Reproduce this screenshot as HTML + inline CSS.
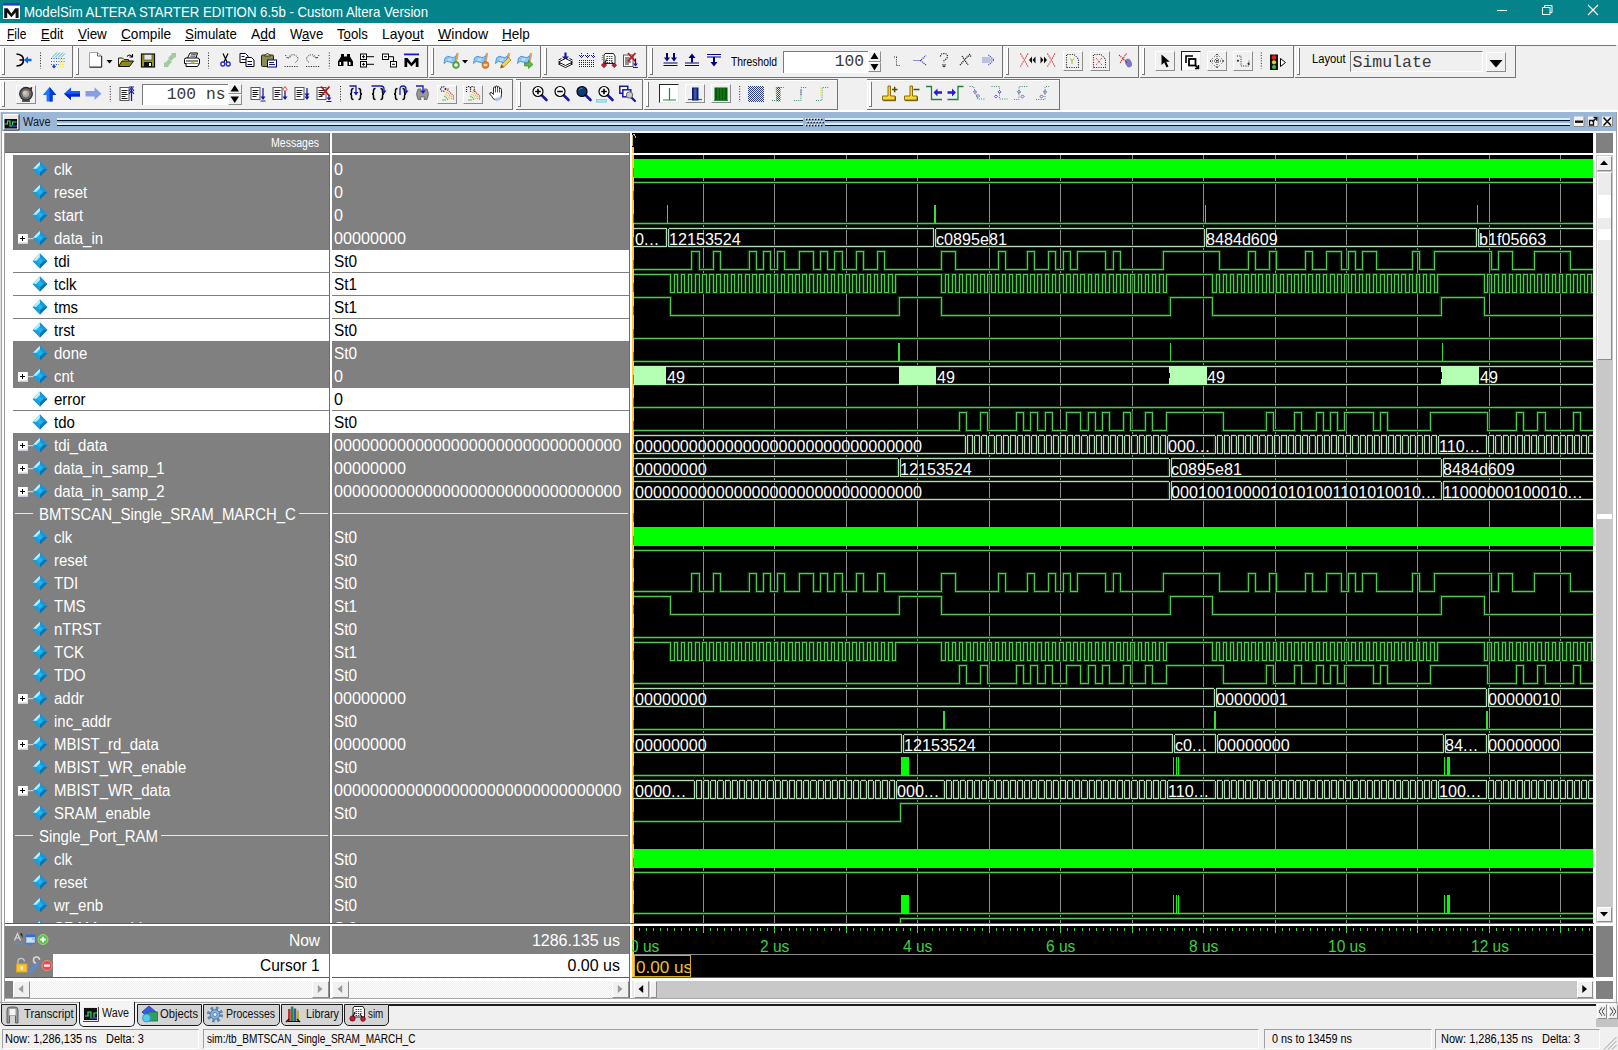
<!DOCTYPE html>
<html><head><meta charset="utf-8"><title>ModelSim</title>
<style>
html,body{margin:0;padding:0;}
body{width:1618px;height:1050px;position:relative;overflow:hidden;background:#f0f0f0;font-family:"Liberation Sans",sans-serif;}
div,span,svg{position:absolute;box-sizing:border-box;}
span{white-space:pre;}
u{text-decoration:underline;text-underline-offset:1px;}
i{font-style:normal;letter-spacing:0.7px;}
</style></head><body>
<div style="left:0px;top:0px;width:1618px;height:23px;background:#04838a;"></div>
<svg style="left:3px;top:3px" width="18" height="17" viewBox="0 0 18 17">
<rect x="0" y="0" width="17" height="16" fill="#fff"/>
<rect x="0" y="0" width="17" height="2.6" fill="#2a3cc8"/>
<path d="M1.2 15 V5.2 H4.6 L8.4 10.6 L12.2 5.2 H15.6 V15 H12.6 V9.6 L8.4 14.2 L4.2 9.6 V15 Z" fill="#111"/>
</svg>
<span style="left:23.50px;top:2.00px;font:15px/20px 'Liberation Sans',sans-serif;color:#fff;transform:scaleX(0.8796);transform-origin:0 50%;">ModelSim ALTERA STARTER EDITION 6.5b - Custom Altera Version</span>
<svg style="left:1490px;top:0" width="128" height="23" viewBox="1490 0 128 23">
<path d="M1497 10.500 H1507" stroke="#fff" stroke-width="1.100" fill="none"/>
<path d="M1542.500 7.500 H1550 V14.500 H1542.500 Z M1544.500 7.500 V5.500 H1552 V12.500 H1550" stroke="#fff" stroke-width="1" fill="none"/>
<path d="M1588 5 L1598 15 M1598 5 L1588 15" stroke="#fff" stroke-width="1.200" fill="none"/>
</svg>
<div style="left:0px;top:23px;width:1618px;height:22px;background:#ffffff;"></div>
<span style="left:7.30px;top:24.30px;font:15px/20px 'Liberation Sans',sans-serif;color:#000;transform:scaleX(0.8026);transform-origin:0 50%;"><u>F</u>ile</span>
<span style="left:41.00px;top:24.30px;font:15px/20px 'Liberation Sans',sans-serif;color:#000;transform:scaleX(0.8666);transform-origin:0 50%;"><u>E</u>dit</span>
<span style="left:78.00px;top:24.30px;font:15px/20px 'Liberation Sans',sans-serif;color:#000;transform:scaleX(0.8932);transform-origin:0 50%;"><u>V</u>iew</span>
<span style="left:120.80px;top:24.30px;font:15px/20px 'Liberation Sans',sans-serif;color:#000;transform:scaleX(0.9106);transform-origin:0 50%;"><u>C</u>ompile</span>
<span style="left:185.20px;top:24.30px;font:15px/20px 'Liberation Sans',sans-serif;color:#000;transform:scaleX(0.8876);transform-origin:0 50%;"><u>S</u>imulate</span>
<span style="left:251.00px;top:24.30px;font:15px/20px 'Liberation Sans',sans-serif;color:#000;transform:scaleX(0.9255);transform-origin:0 50%;">A<u>d</u>d</span>
<span style="left:289.70px;top:24.30px;font:15px/20px 'Liberation Sans',sans-serif;color:#000;transform:scaleX(0.8813);transform-origin:0 50%;">W<u>a</u>ve</span>
<span style="left:337.00px;top:24.30px;font:15px/20px 'Liberation Sans',sans-serif;color:#000;transform:scaleX(0.8796);transform-origin:0 50%;">T<u>o</u>ols</span>
<span style="left:382.00px;top:24.30px;font:15px/20px 'Liberation Sans',sans-serif;color:#000;transform:scaleX(0.9281);transform-origin:0 50%;">Layo<u>u</u>t</span>
<span style="left:437.90px;top:24.30px;font:15px/20px 'Liberation Sans',sans-serif;color:#000;transform:scaleX(0.9391);transform-origin:0 50%;"><u>W</u>indow</span>
<span style="left:502.00px;top:24.30px;font:15px/20px 'Liberation Sans',sans-serif;color:#000;transform:scaleX(0.8979);transform-origin:0 50%;"><u>H</u>elp</span>
<div style="left:0px;top:45px;width:1618px;height:1px;background:#e6e6e6;"></div>
<div style="left:0px;top:45px;width:72px;height:1px;background:#747474;"></div>
<div style="left:0px;top:46px;width:72px;height:1px;background:#ffffff;"></div>
<div style="left:0px;top:46px;width:1px;height:31px;background:#ffffff;"></div>
<div style="left:0px;top:77px;width:73px;height:1px;background:#747474;"></div>
<div style="left:72px;top:45px;width:1px;height:33px;background:#747474;"></div>
<div style="left:2px;top:48px;width:2px;height:26px;background:#ffffff;"></div>
<div style="left:4px;top:48px;width:1px;height:27px;background:#747474;"></div>
<div style="left:2px;top:74px;width:3px;height:1px;background:#747474;"></div>
<div style="left:74px;top:45px;width:353px;height:1px;background:#747474;"></div>
<div style="left:74px;top:46px;width:353px;height:1px;background:#ffffff;"></div>
<div style="left:74px;top:46px;width:1px;height:31px;background:#ffffff;"></div>
<div style="left:74px;top:77px;width:354px;height:1px;background:#747474;"></div>
<div style="left:427px;top:45px;width:1px;height:33px;background:#747474;"></div>
<div style="left:76px;top:48px;width:2px;height:26px;background:#ffffff;"></div>
<div style="left:78px;top:48px;width:1px;height:27px;background:#747474;"></div>
<div style="left:76px;top:74px;width:3px;height:1px;background:#747474;"></div>
<div style="left:429px;top:45px;width:111px;height:1px;background:#747474;"></div>
<div style="left:429px;top:46px;width:111px;height:1px;background:#ffffff;"></div>
<div style="left:429px;top:46px;width:1px;height:31px;background:#ffffff;"></div>
<div style="left:429px;top:77px;width:112px;height:1px;background:#747474;"></div>
<div style="left:540px;top:45px;width:1px;height:33px;background:#747474;"></div>
<div style="left:431px;top:48px;width:2px;height:26px;background:#ffffff;"></div>
<div style="left:433px;top:48px;width:1px;height:27px;background:#747474;"></div>
<div style="left:431px;top:74px;width:3px;height:1px;background:#747474;"></div>
<div style="left:542px;top:45px;width:104px;height:1px;background:#747474;"></div>
<div style="left:542px;top:46px;width:104px;height:1px;background:#ffffff;"></div>
<div style="left:542px;top:46px;width:1px;height:31px;background:#ffffff;"></div>
<div style="left:542px;top:77px;width:105px;height:1px;background:#747474;"></div>
<div style="left:646px;top:45px;width:1px;height:33px;background:#747474;"></div>
<div style="left:544px;top:48px;width:2px;height:26px;background:#ffffff;"></div>
<div style="left:546px;top:48px;width:1px;height:27px;background:#747474;"></div>
<div style="left:544px;top:74px;width:3px;height:1px;background:#747474;"></div>
<div style="left:648px;top:45px;width:354px;height:1px;background:#747474;"></div>
<div style="left:648px;top:46px;width:354px;height:1px;background:#ffffff;"></div>
<div style="left:648px;top:46px;width:1px;height:31px;background:#ffffff;"></div>
<div style="left:648px;top:77px;width:355px;height:1px;background:#747474;"></div>
<div style="left:1002px;top:45px;width:1px;height:33px;background:#747474;"></div>
<div style="left:650px;top:48px;width:2px;height:26px;background:#ffffff;"></div>
<div style="left:652px;top:48px;width:1px;height:27px;background:#747474;"></div>
<div style="left:650px;top:74px;width:3px;height:1px;background:#747474;"></div>
<div style="left:1004px;top:45px;width:134px;height:1px;background:#747474;"></div>
<div style="left:1004px;top:46px;width:134px;height:1px;background:#ffffff;"></div>
<div style="left:1004px;top:46px;width:1px;height:31px;background:#ffffff;"></div>
<div style="left:1004px;top:77px;width:135px;height:1px;background:#747474;"></div>
<div style="left:1138px;top:45px;width:1px;height:33px;background:#747474;"></div>
<div style="left:1006px;top:48px;width:2px;height:26px;background:#ffffff;"></div>
<div style="left:1008px;top:48px;width:1px;height:27px;background:#747474;"></div>
<div style="left:1006px;top:74px;width:3px;height:1px;background:#747474;"></div>
<div style="left:1140px;top:45px;width:153px;height:1px;background:#747474;"></div>
<div style="left:1140px;top:46px;width:153px;height:1px;background:#ffffff;"></div>
<div style="left:1140px;top:46px;width:1px;height:31px;background:#ffffff;"></div>
<div style="left:1140px;top:77px;width:154px;height:1px;background:#747474;"></div>
<div style="left:1293px;top:45px;width:1px;height:33px;background:#747474;"></div>
<div style="left:1142px;top:48px;width:2px;height:26px;background:#ffffff;"></div>
<div style="left:1144px;top:48px;width:1px;height:27px;background:#747474;"></div>
<div style="left:1142px;top:74px;width:3px;height:1px;background:#747474;"></div>
<div style="left:1295px;top:45px;width:220px;height:1px;background:#747474;"></div>
<div style="left:1295px;top:46px;width:220px;height:1px;background:#ffffff;"></div>
<div style="left:1295px;top:46px;width:1px;height:31px;background:#ffffff;"></div>
<div style="left:1295px;top:77px;width:221px;height:1px;background:#747474;"></div>
<div style="left:1515px;top:45px;width:1px;height:33px;background:#747474;"></div>
<div style="left:1297px;top:48px;width:2px;height:26px;background:#ffffff;"></div>
<div style="left:1299px;top:48px;width:1px;height:27px;background:#747474;"></div>
<div style="left:1297px;top:74px;width:3px;height:1px;background:#747474;"></div>
<div style="left:0px;top:79px;width:512px;height:1px;background:#747474;"></div>
<div style="left:0px;top:80px;width:512px;height:1px;background:#ffffff;"></div>
<div style="left:0px;top:80px;width:1px;height:29px;background:#ffffff;"></div>
<div style="left:0px;top:109px;width:513px;height:1px;background:#747474;"></div>
<div style="left:512px;top:79px;width:1px;height:31px;background:#747474;"></div>
<div style="left:2px;top:82px;width:2px;height:24px;background:#ffffff;"></div>
<div style="left:4px;top:82px;width:1px;height:25px;background:#747474;"></div>
<div style="left:2px;top:106px;width:3px;height:1px;background:#747474;"></div>
<div style="left:516px;top:79px;width:126px;height:1px;background:#747474;"></div>
<div style="left:516px;top:80px;width:126px;height:1px;background:#ffffff;"></div>
<div style="left:516px;top:80px;width:1px;height:29px;background:#ffffff;"></div>
<div style="left:516px;top:109px;width:127px;height:1px;background:#747474;"></div>
<div style="left:642px;top:79px;width:1px;height:31px;background:#747474;"></div>
<div style="left:518px;top:82px;width:2px;height:24px;background:#ffffff;"></div>
<div style="left:520px;top:82px;width:1px;height:25px;background:#747474;"></div>
<div style="left:518px;top:106px;width:3px;height:1px;background:#747474;"></div>
<div style="left:644px;top:79px;width:193px;height:1px;background:#747474;"></div>
<div style="left:644px;top:80px;width:193px;height:1px;background:#ffffff;"></div>
<div style="left:644px;top:80px;width:1px;height:29px;background:#ffffff;"></div>
<div style="left:644px;top:109px;width:194px;height:1px;background:#747474;"></div>
<div style="left:837px;top:79px;width:1px;height:31px;background:#747474;"></div>
<div style="left:646px;top:82px;width:2px;height:24px;background:#ffffff;"></div>
<div style="left:648px;top:82px;width:1px;height:25px;background:#747474;"></div>
<div style="left:646px;top:106px;width:3px;height:1px;background:#747474;"></div>
<div style="left:867px;top:79px;width:192px;height:1px;background:#747474;"></div>
<div style="left:867px;top:80px;width:192px;height:1px;background:#ffffff;"></div>
<div style="left:867px;top:80px;width:1px;height:29px;background:#ffffff;"></div>
<div style="left:867px;top:109px;width:193px;height:1px;background:#747474;"></div>
<div style="left:1059px;top:79px;width:1px;height:31px;background:#747474;"></div>
<div style="left:869px;top:82px;width:2px;height:24px;background:#ffffff;"></div>
<div style="left:871px;top:82px;width:1px;height:25px;background:#747474;"></div>
<div style="left:869px;top:106px;width:3px;height:1px;background:#747474;"></div>
<div style="left:0px;top:45px;width:1616px;height:1px;background:#747474;"></div>
<div style="left:1063px;top:51px;width:20px;height:20px;background:#f0f0f0;border-top:1px solid #fff;border-left:1px solid #fff;border-right:1px solid #8c8c8c;border-bottom:1px solid #8c8c8c;"></div>
<div style="left:1089.5px;top:51px;width:20.0px;height:20px;background:#f0f0f0;border-top:1px solid #fff;border-left:1px solid #fff;border-right:1px solid #8c8c8c;border-bottom:1px solid #8c8c8c;"></div>
<div style="left:1155px;top:51px;width:20px;height:20px;background:#f0f0f0;border-top:1px solid #fff;border-left:1px solid #fff;border-right:1px solid #8c8c8c;border-bottom:1px solid #8c8c8c;"></div>
<div style="left:1181px;top:51px;width:20px;height:20px;background:#ffffff;border-top:1.5px solid #222;border-left:1.5px solid #222;border-right:1px solid #e8e8e8;border-bottom:1px solid #e8e8e8;"></div>
<div style="left:1207px;top:51px;width:20px;height:20px;background:#f0f0f0;border-top:1px solid #fff;border-left:1px solid #fff;border-right:1px solid #8c8c8c;border-bottom:1px solid #8c8c8c;"></div>
<div style="left:1233px;top:51px;width:20px;height:20px;background:#f0f0f0;border-top:1px solid #fff;border-left:1px solid #fff;border-right:1px solid #8c8c8c;border-bottom:1px solid #8c8c8c;"></div>
<div style="left:1350px;top:51px;width:133px;height:21px;background:#f0f0f0;border-top:1.5px solid #7a7a7a;border-left:1.5px solid #7a7a7a;border-right:1px solid #fff;border-bottom:1px solid #fff;"></div>
<div style="left:1486px;top:52px;width:20px;height:20px;background:#f0f0f0;border-top:1px solid #fff;border-left:1px solid #fff;border-right:1px solid #8c8c8c;border-bottom:1px solid #8c8c8c;"></div>
<div style="left:783px;top:51px;width:85px;height:21.5px;background:#ffffff;border-top:1.5px solid #7a7a7a;border-left:1.5px solid #7a7a7a;"></div>
<div style="left:868px;top:51px;width:13px;height:10.5px;background:#f0f0f0;border-top:1px solid #fff;border-left:1px solid #fff;border-right:1px solid #8c8c8c;border-bottom:1px solid #8c8c8c;"></div>
<div style="left:868px;top:61.5px;width:13px;height:10.5px;background:#f0f0f0;border-top:1px solid #fff;border-left:1px solid #fff;border-right:1px solid #8c8c8c;border-bottom:1px solid #8c8c8c;"></div>
<div style="left:16px;top:84.5px;width:20px;height:19.5px;background:#f0f0f0;border-top:1px solid #fff;border-left:1px solid #fff;border-right:1px solid #8c8c8c;border-bottom:1px solid #8c8c8c;"></div>
<div style="left:142px;top:83.5px;width:86px;height:21px;background:#ffffff;border-top:1.5px solid #7a7a7a;border-left:1.5px solid #7a7a7a;"></div>
<div style="left:228px;top:83.5px;width:13.5px;height:10.5px;background:#f0f0f0;border-top:1px solid #fff;border-left:1px solid #fff;border-right:1px solid #8c8c8c;border-bottom:1px solid #8c8c8c;"></div>
<div style="left:228px;top:94px;width:13.5px;height:10.5px;background:#f0f0f0;border-top:1px solid #fff;border-left:1px solid #fff;border-right:1px solid #8c8c8c;border-bottom:1px solid #8c8c8c;"></div>
<div style="left:437px;top:84.5px;width:20px;height:19.5px;background:#f0f0f0;border-top:1px solid #fff;border-left:1px solid #fff;border-right:1px solid #8c8c8c;border-bottom:1px solid #8c8c8c;"></div>
<div style="left:463px;top:84.5px;width:20px;height:19.5px;background:#f0f0f0;border-top:1px solid #fff;border-left:1px solid #fff;border-right:1px solid #8c8c8c;border-bottom:1px solid #8c8c8c;"></div>
<div style="left:659px;top:84px;width:20px;height:19px;background:#ffffff;border-top:1.5px solid #222;border-left:1.5px solid #222;border-right:1px solid #e8e8e8;border-bottom:1px solid #e8e8e8;"></div>
<div style="left:685px;top:84px;width:20px;height:19px;background:#f0f0f0;border-top:1px solid #fff;border-left:1px solid #fff;border-right:1px solid #8c8c8c;border-bottom:1px solid #8c8c8c;"></div>
<div style="left:711px;top:84px;width:20px;height:19px;background:#f0f0f0;border-top:1px solid #fff;border-left:1px solid #fff;border-right:1px solid #8c8c8c;border-bottom:1px solid #8c8c8c;"></div>
<svg style="left:0;top:0" width="1618" height="112" viewBox="0 0 1618 112"><g transform="translate(15.5 53) scale(1.0)"><path d="M1 1 Q8 1.5 8 7 Q8 12.5 1 13 M4 7 H8.5" stroke="#000" stroke-width="1.7" fill="none"/><path d="M8.500 7 L12.500 3.200 V5.800 H16 V8.200 H12.500 V10.800 Z" fill="#1060ff"/></g>
<path d="M40.5 52.5V68.5" stroke="#222" stroke-width="1" stroke-dasharray="1 1.6"/>
<g transform="translate(50 52.5) scale(1.0)"><g stroke-width="1" fill="none"><path d="M2 5 L7 0 M5 5 L10 0 M8 5 L13 0 M11 5 L15 1" stroke="#40b8d8"/><path d="M1 6 H15 M1 9 H15 M1 12 H9" stroke="#3058c8" stroke-dasharray="1 1.5"/><path d="M10.500 6 V15 M13 6 V15" stroke="#f0e850" stroke-width="1.600" stroke-dasharray="1.5 1"/><path d="M4 12 l2 2 l-2 2 l-2 -2 z" fill="#2040c0" stroke="none"/></g></g>
<g transform="translate(89 52) scale(1.0)"><path d="M0.500 0.500 H8.500 L12.500 4 V15 H0.500 Z" fill="#fff" stroke="#9a9a9a" stroke-width="0.900"/><path d="M8.500 0.500 V4 H12.500" fill="none" stroke="#555" stroke-width="0.900"/><path d="M12.700 4 V15.200 H0.500" stroke="#222" fill="none" stroke-width="1"/></g>
<path d="M106.5 60 H112.500 L109.500 63.500 Z" fill="#000"/>
<g transform="translate(118 53) scale(1.0)"><path d="M0.500 13 V5 H4.500 L6 6.500 H10.500 V8" fill="#f4f48c" stroke="#222" stroke-width="1"/><path d="M0.500 13.500 L4 8 H15.500 L11.500 13.500 Z" fill="#8c8c14" stroke="#111" stroke-width="1"/><path d="M9 3.500 Q11.500 0.500 14 3.500 M14.500 1 V4 H11.500" stroke="#000" stroke-width="1.100" fill="none"/></g>
<g transform="translate(141 53.5) scale(1.0)"><rect x="0.500" y="0.500" width="13" height="13" fill="#9a9a20" stroke="#111" stroke-width="1.200"/><rect x="3" y="1" width="8" height="5.500" fill="#e6e6e6" stroke="#333" stroke-width="0.600"/><rect x="3" y="8.500" width="8" height="5" fill="#111"/><rect x="8" y="9.500" width="2" height="3" fill="#f0f0f0"/></g>
<g transform="translate(162 52.5) scale(1.0)"><g opacity="0.500"><path d="M6 5.500 L10 1.500 L9 0.500 H14 V5.500 L13 4.500 L9 8.500 Z" fill="#50a850"/><path d="M10 9.500 L6 13.500 L7 14.500 H2 V9.500 L3 10.500 L7 6.500 Z" fill="#50a850"/></g></g>
<g transform="translate(184 52.5) scale(1.0)"><path d="M3.500 5.500 L6 0.500 H13.500 L12 5.500" fill="#fff" stroke="#000" stroke-width="1"/><path d="M7 2.200 H12 M6.300 3.700 H11.500" stroke="#000" stroke-width="0.700"/><path d="M0.500 7 Q0.500 5.500 2 5.500 H13.500 Q15.500 5.500 15.500 7.500 V11 H0.500 Z" fill="#fff" stroke="#000"/><path d="M2 11 V14 H13.500 L15.500 11" fill="#fff" stroke="#000"/><path d="M2 8.500 H14" stroke="#000" stroke-width="0.900"/><rect x="7" y="9.300" width="3.500" height="1.400" fill="#c8c830"/></g>
<path d="M208.5 52.5V68.5" stroke="#222" stroke-width="1" stroke-dasharray="1 1.6"/>
<g transform="translate(220.5 53) scale(1.0)"><path d="M2.500 0.500 L6.500 9 M7.500 0.500 L3.500 9" stroke="#000" stroke-width="1.200" fill="none"/><circle cx="2.300" cy="11" r="2" fill="none" stroke="#2828d0" stroke-width="1.300"/><circle cx="7.700" cy="11" r="2" fill="none" stroke="#2828d0" stroke-width="1.300"/></g>
<g transform="translate(239.5 53) scale(1.0)"><path d="M0.500 0.500 H6 L8.500 3 V9.500 H0.500 Z" fill="#fff" stroke="#000" stroke-width="1"/><path d="M6.500 4.500 H12 L14.500 7 V13.500 H6.500 Z" fill="#fff" stroke="#000" stroke-width="1"/><path d="M2 3.500 H5 M2 6.500 H6.500 M8 8.500 H12.500 M8 11.500 H12.500" stroke="#000080" stroke-width="1"/></g>
<g transform="translate(261 52.5) scale(1.0)"><rect x="0.500" y="2.500" width="12" height="11.500" rx="1" fill="#8c8c50" stroke="#222"/><path d="M3.500 3.500 Q6.500 -1.500 9.500 3.500 Z" fill="#e8e070" stroke="#222" stroke-width="0.800"/><rect x="6.500" y="7.500" width="9" height="7" fill="#fff" stroke="#000080"/><path d="M8 10 H13 M8 12 H14" stroke="#000080" stroke-width="0.900"/></g>
<g transform="translate(284.5 53) scale(1.0)"><g stroke="#333" fill="none" stroke-width="1" stroke-dasharray="1.2 1.2"><path d="M3 5 Q8 -1 13 4 Q14.500 7.500 10 10"/><path d="M1 2 L3 5.500 L6.500 3.500"/><path d="M0 13.500 H14"/></g></g>
<g transform="translate(305 53) scale(1.0)"><g stroke="#333" fill="none" stroke-width="1" stroke-dasharray="1.2 1.2"><path d="M12 5 Q7 -1 2 4 Q0.500 7.500 5 10"/><path d="M14 2 L12 5.500 L8.500 3.500"/><path d="M1 13.500 H15"/></g></g>
<path d="M329.3 52.5V68.5" stroke="#222" stroke-width="1" stroke-dasharray="1 1.6"/>
<g transform="translate(338 53.5) scale(1.0)"><path d="M3 0.500 H6 V3 H9 V0.500 H12 V3 L15 8 V12.500 H9.500 V8 H5.500 V12.500 H0 V8 L3 3 Z" fill="#000"/><rect x="1.500" y="8.500" width="1.500" height="3" fill="#fff"/><rect x="11" y="8.500" width="1.500" height="3" fill="#fff"/></g>
<g transform="translate(360 53.5) scale(1.0)"><g fill="#fff" stroke="#000" stroke-width="1"><rect x="0.500" y="0.500" width="6" height="5.500"/><rect x="0.500" y="8" width="6" height="5.500"/></g><path d="M2 3.200 H5 M3.500 1.800 V4.700 M2 10.800 H5 M3.500 9.300 V12.200 M6.500 3.200 H14 M6.500 10.800 H14" stroke="#000" stroke-width="1" fill="none"/></g>
<g transform="translate(382 53.5) scale(1.0)"><g fill="#fff" stroke="#000" stroke-width="1"><rect x="0.500" y="0.500" width="6" height="5.500"/><rect x="8.500" y="8" width="6" height="5.500"/></g><path d="M2 3.200 H5 M10 10.800 H13 M6.500 3.200 H11.500 V8" stroke="#000" stroke-width="1" fill="none"/></g>
<g transform="translate(404 53.5) scale(1.0)"><rect x="0" y="0" width="15" height="1.800" fill="#1818c0"/><path d="M0.500 13.500 V4.500 H3.500 L7.500 9.500 L11.500 4.500 H14.500 V13.500 H11.800 V8.500 L7.500 13 L3.200 8.500 V13.500 Z" fill="#000"/></g>
<g transform="translate(443.5 52.5) scale(1.0)"><path d="M1.500 5.500 Q4 2.500 7 4.500 T13 3 L11.500 9.500 Q9 11.500 6 9.500 T0.500 11 Z" fill="#8cc8f4" stroke="#3f8fe0" stroke-width="0.900"/><path d="M5 6 L8.500 5.500 L8 8 L4.500 8.500 Z" fill="#b8e0fa"/><path d="M13.200 0.800 L14.800 1 L13.200 9.500 L12 9.300 Z" fill="#e8b078" stroke="#b87838" stroke-width="0.500"/><circle cx="12.500" cy="12.500" r="3.400" fill="#5cb848" stroke="#3a8a2a" stroke-width="0.700"/><path d="M10.700 12.500 H14.300 M12.500 10.700 V14.300" stroke="#fff" stroke-width="1.400"/></g>
<path d="M462 60 H468 L465 63.500 Z" fill="#000"/>
<g transform="translate(473 52.5) scale(1.0)"><path d="M1.500 5.500 Q4 2.500 7 4.500 T13 3 L11.500 9.500 Q9 11.500 6 9.500 T0.500 11 Z" fill="#8cc8f4" stroke="#3f8fe0" stroke-width="0.900"/><path d="M5 6 L8.500 5.500 L8 8 L4.500 8.500 Z" fill="#b8e0fa"/><path d="M13.200 0.800 L14.800 1 L13.200 9.500 L12 9.300 Z" fill="#e8b078" stroke="#b87838" stroke-width="0.500"/><circle cx="12.500" cy="12.500" r="3.400" fill="#f08830" stroke="#b85810" stroke-width="0.700"/><path d="M10.700 12.500 H14.300" stroke="#fff" stroke-width="1.500"/></g>
<g transform="translate(495 52.5) scale(1.0)"><path d="M1.500 5.500 Q4 2.500 7 4.500 T13 3 L11.500 9.500 Q9 11.500 6 9.500 T0.500 11 Z" fill="#8cc8f4" stroke="#3f8fe0" stroke-width="0.900"/><path d="M5 6 L8.500 5.500 L8 8 L4.500 8.500 Z" fill="#b8e0fa"/><path d="M13.200 0.800 L14.800 1 L13.200 9.500 L12 9.300 Z" fill="#e8b078" stroke="#b87838" stroke-width="0.500"/><path d="M5.500 15.500 L6.500 12 L13.500 5 L16 7.500 L9 14.500 Z" fill="#f4d060" stroke="#a87818" stroke-width="0.700"/><path d="M5.500 15.500 L6.500 12 L9 14.500 Z" fill="#8a5a18"/></g>
<g transform="translate(517 52.5) scale(1.0)"><path d="M1.500 5.500 Q4 2.500 7 4.500 T13 3 L11.500 9.500 Q9 11.500 6 9.500 T0.500 11 Z" fill="#8cc8f4" stroke="#3f8fe0" stroke-width="0.900"/><path d="M5 6 L8.500 5.500 L8 8 L4.500 8.500 Z" fill="#b8e0fa"/><path d="M13.200 0.800 L14.800 1 L13.200 9.500 L12 9.300 Z" fill="#e8b078" stroke="#b87838" stroke-width="0.500"/><path d="M7.500 10.500 H11.500 V8 L16 12 L11.500 16 V13.500 H7.500 Z" fill="#60b848" stroke="#3a8a2a" stroke-width="0.700"/></g>
<g transform="translate(558 52.5) scale(1.0)"><path d="M7.500 0 V5" stroke="#1818a8" stroke-width="2.200"/><path d="M4 4 H11 L7.500 8 Z" fill="#1818a8"/><g fill="#fff" stroke="#000" stroke-width="0.900"><path d="M0.500 11.500 L7.500 15 L14.500 11.500 L7.500 8 Z"/><path d="M0.500 9.500 L7.500 13 L14.500 9.500 L7.500 6 Z"/><path d="M0.500 7.500 L3.500 6 M14.500 7.500 L11.500 6" fill="none"/></g></g>
<g transform="translate(579 53) scale(1.0)"><rect x="0" y="7" width="1" height="1" fill="#222"/><rect x="2" y="7" width="1" height="1" fill="#222"/><rect x="4" y="7" width="1" height="1" fill="#222"/><rect x="6" y="7" width="1" height="1" fill="#222"/><rect x="8" y="7" width="1" height="1" fill="#222"/><rect x="10" y="7" width="1" height="1" fill="#222"/><rect x="12" y="7" width="1" height="1" fill="#222"/><rect x="14" y="7" width="1" height="1" fill="#222"/><rect x="0" y="9" width="1" height="1" fill="#222"/><rect x="2" y="9" width="1" height="1" fill="#222"/><rect x="4" y="9" width="1" height="1" fill="#222"/><rect x="6" y="9" width="1" height="1" fill="#222"/><rect x="8" y="9" width="1" height="1" fill="#222"/><rect x="10" y="9" width="1" height="1" fill="#222"/><rect x="12" y="9" width="1" height="1" fill="#222"/><rect x="14" y="9" width="1" height="1" fill="#222"/><rect x="0" y="11" width="1" height="1" fill="#222"/><rect x="2" y="11" width="1" height="1" fill="#222"/><rect x="4" y="11" width="1" height="1" fill="#222"/><rect x="6" y="11" width="1" height="1" fill="#222"/><rect x="8" y="11" width="1" height="1" fill="#222"/><rect x="10" y="11" width="1" height="1" fill="#222"/><rect x="12" y="11" width="1" height="1" fill="#222"/><rect x="14" y="11" width="1" height="1" fill="#222"/><rect x="0" y="13" width="1" height="1" fill="#222"/><rect x="2" y="13" width="1" height="1" fill="#222"/><rect x="4" y="13" width="1" height="1" fill="#222"/><rect x="6" y="13" width="1" height="1" fill="#222"/><rect x="8" y="13" width="1" height="1" fill="#222"/><rect x="10" y="13" width="1" height="1" fill="#222"/><rect x="12" y="13" width="1" height="1" fill="#222"/><rect x="14" y="13" width="1" height="1" fill="#222"/><rect x="2" y="0" width="1" height="1" fill="#1818a8"/><rect x="2" y="2" width="1" height="1" fill="#1818a8"/><rect x="2" y="4" width="1" height="1" fill="#1818a8"/><rect x="8" y="0" width="1" height="1" fill="#1818a8"/><rect x="8" y="2" width="1" height="1" fill="#1818a8"/><rect x="8" y="4" width="1" height="1" fill="#1818a8"/><rect x="14" y="0" width="1" height="1" fill="#1818a8"/><rect x="14" y="2" width="1" height="1" fill="#1818a8"/><rect x="14" y="4" width="1" height="1" fill="#1818a8"/><rect x="1" y="3" width="1" height="1" fill="#1818a8"/><rect x="3" y="3" width="1" height="1" fill="#1818a8"/><rect x="7" y="3" width="1" height="1" fill="#1818a8"/><rect x="9" y="3" width="1" height="1" fill="#1818a8"/><rect x="13" y="3" width="1" height="1" fill="#1818a8"/><rect x="15" y="3" width="1" height="1" fill="#1818a8"/><rect x="0" y="2" width="1" height="1" fill="#1818a8"/><rect x="4" y="2" width="1" height="1" fill="#1818a8"/><rect x="6" y="2" width="1" height="1" fill="#1818a8"/><rect x="10" y="2" width="1" height="1" fill="#1818a8"/><rect x="12" y="2" width="1" height="1" fill="#1818a8"/></g>
<g transform="translate(601 52.5) scale(1.0)"><path d="M4 1 H12.500 L14 3.500 V11 H3 V2.500 Z" fill="#fff" stroke="#222" stroke-width="1"/><path d="M5.500 4 H12 M5.500 6 H12 M5.500 8 H12 M5.500 10 H9" stroke="#333" stroke-width="0.900" stroke-dasharray="1.500 0.800"/><path d="M2 5 H0.500 M2.500 3 H1 M2 7 H0.800" stroke="#6a6aa8" stroke-width="0.800"/><path d="M3 12.500 L5.500 7 M13.500 13 L10.500 9" stroke="#111" stroke-width="1.200"/><path d="M3 10 l2.600 2.600 l-2.600 2.600 l-2.600 -2.600 z M13.300 10.500 l2.300 2.300 l-2.300 2.300 l-2.300 -2.300 z" fill="#c02038" stroke="#600010" stroke-width="0.700"/></g>
<g transform="translate(623 52.5) scale(1.0)"><rect x="0.500" y="2.500" width="9.500" height="11.500" fill="#fff" stroke="#555"/><path d="M2 5.500 H8 M2 7.500 H7 M2 9.500 H8 M2 11.500 H6" stroke="#000" stroke-width="0.900"/><path d="M5 0.500 L12.500 9 M12.500 0.500 L5 9" stroke="#c01818" stroke-width="1.700"/><path d="M12.500 6 V13" stroke="#1818a8" stroke-width="1.300"/><path d="M10 11 L12.500 14 L15 11 Z" fill="#1818a8"/><path d="M10 15 H15" stroke="#1818a8" stroke-width="1"/></g>
<g transform="translate(663.5 53) scale(1.0)"><path d="M3.500 0 V6 M10.500 0 V6" stroke="#000080" stroke-width="2"/><path d="M0.500 4.500 H6.500 L3.500 8.500 Z M7.500 4.500 H13.500 L10.500 8.500 Z" fill="#000080"/><path d="M0 10 H14 M0 12.500 H14" stroke="#000080" stroke-width="1.100"/></g>
<g transform="translate(685 53) scale(1.0)"><path d="M7 3 V9.500" stroke="#000080" stroke-width="2"/><path d="M3.500 5 H10.500 L7 0.500 Z" fill="#000080"/><path d="M0 10 H14 M0 12.500 H14" stroke="#000080" stroke-width="1.100"/></g>
<g transform="translate(707 53) scale(1.0)"><path d="M0 1.500 H14 M0 4 H14" stroke="#000080" stroke-width="1.100"/><path d="M7 4 V10" stroke="#000080" stroke-width="2"/><path d="M3.500 9 H10.500 L7 13.500 Z" fill="#000080"/></g>
<g transform="translate(893 56) scale(1.0)"><path d="M1 1 H4 M3.500 1 V10 M3.500 9.500 H7" stroke="#333" stroke-width="1" stroke-dasharray="1 1.200" fill="none"/></g>
<g transform="translate(913.5 54) scale(1.0)"><g stroke="#2828b8" stroke-width="1.200" stroke-dasharray="1 1" fill="none"><path d="M0 6.500 H7 L12.500 1.500 M7 6.500 L12.500 11"/></g></g>
<g transform="translate(939 53) scale(1.0)"><g stroke="#222" stroke-width="1.200" stroke-dasharray="1.200 1" fill="none"><path d="M1.500 3.500 Q1.500 0.500 5 0.500 Q8.500 0.500 8.500 3.500 Q8.500 5.500 5 7.500 V9.500"/><path d="M3.500 11.500 L6.500 14 M6.500 11.500 L3.500 14"/></g></g>
<g transform="translate(959.5 54) scale(1.0)"><g stroke="#222" stroke-width="1.300" stroke-dasharray="1.200 0.800" fill="none"><path d="M0.500 11 L8.500 2 M2.500 2 L8.500 11"/><path d="M8.500 2.500 L10 0.500 L11.500 2.500"/></g></g>
<g transform="translate(982.5 54) scale(1.0)"><g stroke="#2828b8" stroke-width="1.200" stroke-dasharray="1 1" fill="none"><path d="M0 6 H10 M0 4 H8 M0 8 H8"/><path d="M6 1 L11.500 6 L6 11"/></g></g>
<g transform="translate(1020 53) scale(1.0)"><g stroke="#c02828" stroke-width="1.100" stroke-dasharray="1.300 1" fill="none"><path d="M0.500 0.500 L8 13.500 M8 0.500 L0.500 13.500"/></g><path d="M12 3.500 L9 7 L12 10.500 Z M15.500 3.500 L12.500 7 L15.500 10.500 Z" fill="#111"/></g>
<g transform="translate(1040 53) scale(1.0)"><path d="M0.500 3.500 L3.500 7 L0.500 10.500 Z M4 3.500 L7 7 L4 10.500 Z" fill="#111"/><g stroke="#c02828" stroke-width="1.100" stroke-dasharray="1.300 1" fill="none"><path d="M7.500 0.500 L15 13.500 M15 0.500 L7.500 13.500"/></g></g>
<g transform="translate(1066 54) scale(1.0)"><g stroke="#222" stroke-width="1.100" stroke-dasharray="1 1.300" fill="none"><path d="M0.500 13.500 V0.500 H8 L12.500 5 V13.500 Z"/></g><path d="M4.500 4.500 L6 7 L8 4.500 M6 7 V10" stroke="#a8b820" stroke-width="1" fill="none"/></g>
<g transform="translate(1093 54) scale(1.0)"><g stroke="#222" stroke-width="1.100" stroke-dasharray="1 1.300" fill="none"><path d="M0.500 13.500 V0.500 H8 L12.500 5 V13.500 Z"/></g><g stroke="#c02828" stroke-width="1" stroke-dasharray="1 1" fill="none"><path d="M3 4 L9 11 M9 4 L3 11"/></g></g>
<g transform="translate(1118.5 53) scale(1.0)"><path d="M0.500 2 L9 10 M8 0.500 L1.500 10" stroke="#c03030" stroke-width="1.200" stroke-dasharray="1.300 0.700"/><ellipse cx="10" cy="10" rx="3.200" ry="4.500" transform="rotate(-25 10 10)" fill="#3838b8" opacity="0.650"/></g>
<g transform="translate(1160 54) scale(1.0)"><path d="M1.500 0.500 V11 L4.200 8.500 L6.500 13.500 L8.500 12.500 L6.200 7.800 L9.800 7.800 Z" fill="#000"/></g>
<g transform="translate(1185 55) scale(1.0)"><path d="M1 8 V1 H8" stroke="#000" stroke-width="1.600" fill="none"/><rect x="4" y="4" width="6.500" height="6.500" fill="none" stroke="#000" stroke-width="1.800"/><path d="M10.500 10.500 L13.500 13.500 M13.500 10 V13.500 H10" stroke="#000" stroke-width="1.500" fill="none"/></g>
<g transform="translate(1209 53) scale(1.0)"><g stroke="#222" stroke-width="1" stroke-dasharray="1 1" fill="none"><path d="M8 1 V15 M1 8 H15"/><path d="M5.500 3.500 L8 1 L10.500 3.500 M5.500 12.500 L8 15 L10.500 12.500 M3.500 5.500 L1 8 L3.500 10.500 M12.500 5.500 L15 8 L12.500 10.500"/><path d="M6 6 L10 10 M10 6 L6 10"/></g></g>
<g transform="translate(1236 54) scale(1.0)"><g stroke="#222" stroke-width="1" stroke-dasharray="1 1.300" fill="none"><path d="M1 2 H5 V12 H13 V6"/></g><path d="M2 5.500 l1.300 1.300 l-1.300 1.300 l-1.300 -1.300 z M12.500 8.500 l1.300 1.300 l-1.300 1.300 l-1.300 -1.300 z" fill="#222"/></g>
<path d="M1261.3 52.5V68.5" stroke="#222" stroke-width="1" stroke-dasharray="1 1.6"/>
<g transform="translate(1270 54.5) scale(1.0)"><rect x="0" y="0" width="8" height="15.500" fill="#111"/><circle cx="4" cy="3" r="2.300" fill="#f01818"/><circle cx="4" cy="7.800" r="2.100" fill="#d8d040"/><circle cx="4" cy="12.500" r="2.100" fill="#38c038"/><path d="M10.500 4 L15.500 8 L10.500 12 Z" fill="#fff" stroke="#000" stroke-width="1"/></g>
<path d="M1489.500 60 H1502.500 L1496 67.500 Z" fill="#000"/>
<path d="M870.500 59 H878.500 L874.500 52.500 Z M870.500 64 H878.500 L874.500 70.500 Z" fill="#000"/>
<g transform="translate(18.5 86.5) scale(1.0)"><circle cx="7.500" cy="7.300" r="6.300" fill="#6a6a6a" stroke="#2a2a2a" stroke-width="1.300"/><circle cx="7.300" cy="7.300" r="4" fill="#b8a898" stroke="#555" stroke-width="0.800"/><circle cx="6.300" cy="6.300" r="2" fill="#d8d0c8" opacity="0.800"/><path d="M11 1.500 L13.800 0.300 L13.300 3.800" fill="#2a2a2a"/><path d="M3.500 14.500 H11.500" stroke="#2a2a2a" stroke-width="1.500"/></g>
<g transform="translate(42.8 87) scale(1.0)"><path d="M6.800 0 L13.500 8 H9.800 V14.500 H3.800 V8 H0 Z" fill="#1a78ff"/><path d="M6.800 0 L13.500 8 H9.800 V14.500 H6.800 Z" fill="#0038d8"/></g>
<g transform="translate(64 87.3) scale(1.0)"><path d="M0 6.400 L7 0 V3.700 H16 V9.100 H7 V12.800 Z" fill="#1060ff"/><path d="M0 6.400 H16 V9.100 H7 V12.800 Z" fill="#0028c8"/></g>
<defs><pattern id="dthb" width="2" height="2" patternUnits="userSpaceOnUse"><rect x="0" y="0" width="1" height="1" fill="#2048e0"/><rect x="1" y="1" width="1" height="1" fill="#2048e0"/></pattern></defs>
<g transform="translate(85.5 87.3) scale(1.0)"><path d="M16 6.400 L9 0 V3.700 H0 V9.100 H9 V12.800 Z" fill="url(#dthb)"/></g>
<path d="M110.3 86V102" stroke="#222" stroke-width="1" stroke-dasharray="1 1.6"/>
<g transform="translate(119.5 86) scale(1.0)"><rect x="0.500" y="1.500" width="9" height="13" fill="#fff" stroke="#555"/><path d="M2 4.500 H8 M2 6.500 H7 M2 8.500 H8 M2 10.500 H6 M2 12.500 H8" stroke="#000" stroke-width="0.900"/><path d="M12 3 V15" stroke="#1818a8" stroke-width="1.300"/><path d="M9.500 5 L12 1.500 L14.500 5 M9.500 8 L12 4.500 L14.500 8" stroke="#1818a8" stroke-width="1.100" fill="none"/><path d="M9.500 1 H14.500" stroke="#1818a8" stroke-width="1"/></g>
<path d="M230.500 91.500 H239 L234.750 85 Z M230.500 96.500 H239 L234.750 103 Z" fill="#000"/>
<g transform="translate(250.5 86) scale(1.0)"><rect x="0.500" y="1.500" width="9" height="12" fill="#fff" stroke="#555"/><path d="M2 4.500 H8 M2 6.500 H7 M2 8.500 H8 M2 10.500 H6" stroke="#000" stroke-width="0.900"/><path d="M12.500 2 V13" stroke="#1818a8" stroke-width="1.300"/><path d="M10 10.500 L12.500 14 L15 10.500 Z" fill="#1818a8"/><path d="M10 15 H15" stroke="#1818a8" stroke-width="1"/></g>
<g transform="translate(272.5 86) scale(1.0)"><rect x="0.500" y="1.500" width="9" height="12" fill="#fff" stroke="#555"/><path d="M2 4.500 H8 M2 6.500 H7 M2 8.500 H8 M2 10.500 H6" stroke="#000" stroke-width="0.900"/><path d="M12.500 5 V13" stroke="#1818a8" stroke-width="1.300"/><path d="M10 10.500 L12.500 14 L15 10.500 Z" fill="#1818a8"/><path d="M12.500 0.500 L14.500 3.500 L12.500 5.500 L10.500 3.500 Z" fill="#fff" stroke="#d03030" stroke-width="0.900"/></g>
<g transform="translate(294.5 86) scale(1.0)"><rect x="0.500" y="1.500" width="9" height="12" fill="#fff" stroke="#555"/><path d="M2 4.500 H8 M2 6.500 H7 M2 8.500 H8 M2 10.500 H6" stroke="#000" stroke-width="0.900"/><path d="M12.500 2 V13" stroke="#1818a8" stroke-width="1.300"/><path d="M10 7.500 L12.500 11 L15 7.500 Z M10 10.500 L12.500 14 L15 10.500 Z" fill="#1818a8"/></g>
<g transform="translate(316.5 86) scale(1.0)"><rect x="0.500" y="1.500" width="9" height="12" fill="#fff" stroke="#555"/><path d="M2 4.500 H8 M2 6.500 H7 M2 8.500 H8 M2 10.500 H6" stroke="#000" stroke-width="0.900"/><path d="M4.500 0.500 L13 10 M13 0.500 L4.500 10" stroke="#b01818" stroke-width="1.800"/><path d="M12.500 9 V13" stroke="#1818a8" stroke-width="1.300"/><path d="M10 11.500 L12.500 14.500 L15 11.500 Z" fill="#1818a8"/><path d="M10 15.500 H15" stroke="#1818a8" stroke-width="1"/></g>
<path d="M340.5 86V102" stroke="#222" stroke-width="1" stroke-dasharray="1 1.6"/>
<g transform="translate(349 85) scale(1.0)"><path d="M4.500 3.500 Q2.500 3.500 2.500 5.500 V7.500 Q2.500 9 1 9 Q2.500 9 2.500 10.500 V12.500 Q2.500 14.500 4.500 14.500 M9.500 3.500 Q11.500 3.500 11.500 5.500 V7.500 Q11.500 9 13 9 Q11.500 9 11.500 10.500 V12.500 Q11.500 14.500 9.500 14.500" stroke="#000" stroke-width="1.500" fill="none"/><path d="M0.500 1 H7 V8" stroke="#1818c8" stroke-width="1.300" fill="none"/><path d="M4.500 7 L7 10.500 L9.500 7 Z" fill="#1818c8"/></g>
<g transform="translate(371 85) scale(1.0)"><path d="M4.500 3.500 Q2.500 3.500 2.500 5.500 V7.500 Q2.500 9 1 9 Q2.500 9 2.500 10.500 V12.500 Q2.500 14.500 4.500 14.500 M9.500 3.500 Q11.500 3.500 11.500 5.500 V7.500 Q11.500 9 13 9 Q11.500 9 11.500 10.500 V12.500 Q11.500 14.500 9.500 14.500" stroke="#000" stroke-width="1.500" fill="none"/><path d="M0.500 1 H10 Q13 1 13 4 V6" stroke="#1818c8" stroke-width="1.300" fill="none"/><path d="M10.500 5.500 L13 9 L15.500 5.500 Z" fill="#1818c8"/></g>
<g transform="translate(393 85) scale(1.0)"><path d="M4.500 3.500 Q2.500 3.500 2.500 5.500 V7.500 Q2.500 9 1 9 Q2.500 9 2.500 10.500 V12.500 Q2.500 14.500 4.500 14.500 M9.500 3.500 Q11.500 3.500 11.500 5.500 V7.500 Q11.500 9 13 9 Q11.500 9 11.500 10.500 V12.500 Q11.500 14.500 9.500 14.500" stroke="#000" stroke-width="1.500" fill="none"/><path d="M7 10 V4 Q7 1 10 1 Q13 1 13 4 V6" stroke="#1818c8" stroke-width="1.300" fill="none"/><path d="M10.500 5.500 L13 9 L15.500 5.500 Z" fill="#1818c8"/></g>
<g transform="translate(415 85) scale(1.0)"><g opacity="0.850"><path d="M3 4 Q0 9 3 14.500 H6 L5 12 H10 L9 14.500 H12 Q15 9 12 4 H9 L10 6.500 H5 L6 4 Z" fill="#8a8a8a" stroke="#444" stroke-width="0.800"/></g><path d="M1 1 H8 V6" stroke="#1818c8" stroke-width="1.300" fill="none"/><path d="M5.500 5.500 L8 9 L10.500 5.500 Z" fill="#1818c8"/></g>
<g transform="translate(439.5 86) scale(1.0)"><g stroke="#111" stroke-width="1.200" stroke-dasharray="1 1" fill="none"><circle cx="3.500" cy="3" r="2.300"/><path d="M6 3 H9"/></g><g stroke-width="1.300" stroke-dasharray="1 1" fill="none"><path d="M8 4 L14 10 V14" stroke="#d83030"/><path d="M7 6 L12 11 V14" stroke="#e8a020"/><path d="M6 8 L10 12 V14" stroke="#d8d020"/><path d="M5 10 L8 13 V14 M3 14 H6" stroke="#30a830"/></g></g>
<g transform="translate(465.5 86) scale(1.0)"><g stroke="#111" stroke-width="1.200" stroke-dasharray="1 1" fill="none"><path d="M1 6 V2.500 Q1 0.500 3 0.500 Q5 0.500 5 2.500 V6 M5 2.500 Q5 0.500 7 0.500 Q9 0.500 9 2.500 V6"/></g><g stroke-width="1.300" stroke-dasharray="1 1" fill="none"><path d="M8 4 L14 10 V14" stroke="#d83030"/><path d="M7 6 L12 11 V14" stroke="#e8a020"/><path d="M6 8 L10 12 V14" stroke="#d8d020"/><path d="M5 10 L8 13 V14 M3 14 H6" stroke="#30a830"/></g></g>
<g transform="translate(489 85.5) scale(1.0)"><path d="M4.500 8 V2.500 Q4.500 1.500 5.500 1.500 Q6.500 1.500 6.500 2.500 V1.500 Q6.500 0.500 7.500 0.500 Q8.500 0.500 8.500 1.500 V2.200 Q8.500 1.200 9.500 1.200 Q10.500 1.200 10.500 2.200 V3.500 Q10.500 2.800 11.500 2.800 Q12.500 2.800 12.500 4 V9 Q12.500 12 10.500 14 L5 14 Q3 11 0.800 8.500 Q0.500 7 2 7 Q3 7 4.500 9 Z" fill="#fff" stroke="#111" stroke-width="0.900"/><path d="M6.500 2.500 V7 M8.500 2.500 V7 M10.500 3.500 V7" stroke="#111" stroke-width="0.700"/><path d="M5 13 L11 11 L13 13.500 L7 16 Z" fill="#a8c8f0" opacity="0.900"/></g>
<g transform="translate(532 85.5) scale(1.0)"><path d="M9.500 9.500 L14.500 14.500" stroke="#1818a8" stroke-width="2.600" stroke-linecap="round"/><circle cx="6" cy="6" r="5" fill="#fff" stroke="#000" stroke-width="1.200"/><path d="M3.200 6 H8.800 M6 3.200 V8.800" stroke="#000" stroke-width="1.600"/></g>
<g transform="translate(554 85.5) scale(1.0)"><path d="M9.500 9.500 L14.500 14.500" stroke="#1818a8" stroke-width="2.600" stroke-linecap="round"/><circle cx="6" cy="6" r="5" fill="#fff" stroke="#000" stroke-width="1.200"/><path d="M3.200 6 H8.800" stroke="#000" stroke-width="1.600"/></g>
<g transform="translate(576 85.5) scale(1.0)"><path d="M9.500 9.500 L14.500 14.500" stroke="#1818a8" stroke-width="2.600" stroke-linecap="round"/><circle cx="6" cy="6" r="5" fill="#0a3a78" stroke="#000" stroke-width="1.200"/><path d="M3 4.500 Q4.500 2.500 6.500 2.800" stroke="#5090d0" stroke-width="1" fill="none"/></g>
<rect x="596.500" y="99.500" width="10" height="2.600" fill="#a8e8f0" stroke="#50c0d8" stroke-width="0.600"/>
<g transform="translate(598 85.5) scale(1.0)"><path d="M9.500 9.500 L14.500 14.500" stroke="#1818a8" stroke-width="2.600" stroke-linecap="round"/><circle cx="6" cy="6" r="5" fill="#fff" stroke="#000" stroke-width="1.200"/><path d="M3.200 6 H8.800 M6 3.200 V8.800" stroke="#000" stroke-width="1.600"/></g>
<g transform="translate(619 85.5) scale(1.0)"><rect x="0.800" y="0.800" width="8" height="7" fill="#fff" stroke="#1818a8" stroke-width="1.500"/><rect x="3.800" y="4.300" width="8" height="7" fill="#fff" stroke="#1818a8" stroke-width="1.500"/><path d="M12.500 12 L16 15.500" stroke="#1818a8" stroke-width="2.200" stroke-linecap="round"/><circle cx="10.500" cy="9.500" r="3.200" fill="#c8c8c8" stroke="#666" stroke-width="1"/></g>
<g transform="translate(661 86) scale(1.0)"><path d="M2 14 H15 M8.500 2 V14" stroke="#208840" stroke-width="1.200" fill="none"/></g>
<g transform="translate(687 86) scale(1.0)"><path d="M1 13.500 H15" stroke="#208840" stroke-width="1.200"/><rect x="5" y="1.500" width="6.500" height="13" fill="#10206a"/><rect x="6.800" y="2.500" width="2.800" height="11" fill="#3a58b0"/></g>
<g transform="translate(713 86) scale(1.0)"><rect x="1.500" y="1.500" width="13" height="13" fill="#0a5a0a"/><path d="M5 2 V14 M8 2 V14 M11 2 V14" stroke="#2a8a2a" stroke-width="0.900"/><path d="M1 14.500 H15" stroke="#208840" stroke-width="1"/></g>
<path d="M739.7 86V102" stroke="#222" stroke-width="1" stroke-dasharray="1 1.6"/>
<defs><pattern id="dth" width="2" height="2" patternUnits="userSpaceOnUse"><rect x="0" y="0" width="1" height="1" fill="#2a3a98"/><rect x="1" y="1" width="1" height="1" fill="#2a3a98"/></pattern></defs>
<rect x="748" y="86" width="16" height="16" fill="url(#dth)"/>
<g transform="translate(771 86) scale(1.0)"><path d="M1 14.500 H5.500 V1.500 H13" stroke="#3a8a5a" stroke-width="1" stroke-dasharray="1 1.200" fill="none"/><rect x="5.500" y="1" width="4" height="14.500" fill="url(#dth)"/><path d="M4.500 1 V9" stroke="#f0f060" stroke-width="1.200"/></g>
<g transform="translate(793 86) scale(1.0)"><path d="M1 14.500 H8 V1.500 H14" stroke="#3a8a5a" stroke-width="1" stroke-dasharray="1 1.200" fill="none"/><path d="M8 4 V10" stroke="#3848a8" stroke-width="1" stroke-dasharray="1 1"/></g>
<g transform="translate(815 86) scale(1.0)"><path d="M1 14.500 H7 V1.500 H14" stroke="#3a8a5a" stroke-width="1" stroke-dasharray="1 1.200" fill="none"/><path d="M6 1 V10" stroke="#f0f060" stroke-width="1.300"/></g>
<g transform="translate(882 85.5) scale(1.0)"><path d="M6 0.500 H8.500 V10.500 H13 V14.500 H0.500 V10.500 H6 Z" fill="#f8d838" stroke="#806000" stroke-width="0.900"/><path d="M1 15.200 H13.500 V11" stroke="#604800" stroke-width="0.900" fill="none"/><path d="M10 4 H15.500 M12.700 1.300 V6.700" stroke="#604800" stroke-width="1.500"/></g>
<g transform="translate(904 85.5) scale(1.0)"><path d="M6 0.500 H8.500 V10.500 H13 V14.500 H0.500 V10.500 H6 Z" fill="#f8d838" stroke="#806000" stroke-width="0.900"/><path d="M1 15.200 H13.500 V11" stroke="#604800" stroke-width="0.900" fill="none"/><path d="M9.500 4 H15.500" stroke="#604800" stroke-width="1.500"/></g>
<g transform="translate(926 85.5) scale(1.0)"><path d="M0 1 H5.500 V14 H16" stroke="#188838" stroke-width="1.300" fill="none"/><path d="M7.500 7 L11.500 3 V5.800 H16 V8.200 H11.500 V11 Z" fill="#2818d8"/></g>
<g transform="translate(947.5 85.5) scale(1.0)"><path d="M0 14 H10.500 V1 H16" stroke="#188838" stroke-width="1.300" fill="none"/><path d="M8.500 7 L4.500 3 V5.800 H0 V8.200 H4.500 V11 Z" fill="#2818d8"/></g>
<g transform="translate(969.5 85.5) scale(1.0)"><path d="M0 1 H4 L8 13.500 H16" stroke="#3a8a5a" stroke-width="1" stroke-dasharray="1 1.300" fill="none"/><path d="M5.5 4.9 l1.600 1.600 l-1.600 1.600 l-1.600 -1.600 z" fill="none" stroke="#4838c8" stroke-width="0.800"/><path d="M8.5 8.9 l1.600 1.600 l-1.600 1.600 l-1.600 -1.600 z" fill="none" stroke="#4838c8" stroke-width="0.800"/></g>
<g transform="translate(991.5 85.5) scale(1.0)"><path d="M0 1 H8 V13.500 H16" stroke="#3a8a5a" stroke-width="1" stroke-dasharray="1 1.300" fill="none"/><path d="M8 4.9 l1.600 1.600 l-1.600 1.600 l-1.600 -1.600 z" fill="none" stroke="#4838c8" stroke-width="0.800"/><path d="M4.5 9.4 l1.600 1.600 l-1.600 1.600 l-1.600 -1.600 z" fill="none" stroke="#4838c8" stroke-width="0.800"/></g>
<g transform="translate(1014 85.5) scale(1.0)"><path d="M0 14 H5 V1 H14" stroke="#3a8a5a" stroke-width="1" stroke-dasharray="1 1.300" fill="none"/><path d="M5 4.9 l1.600 1.600 l-1.600 1.600 l-1.600 -1.600 z" fill="none" stroke="#4838c8" stroke-width="0.800"/><path d="M8.5 9.4 l1.600 1.600 l-1.600 1.600 l-1.600 -1.600 z" fill="none" stroke="#4838c8" stroke-width="0.800"/></g>
<g transform="translate(1036 85.5) scale(1.0)"><path d="M0 14 H9 V1 H14" stroke="#3a8a5a" stroke-width="1" stroke-dasharray="1 1.300" fill="none"/><path d="M9 4.9 l1.600 1.600 l-1.600 1.600 l-1.600 -1.600 z" fill="none" stroke="#4838c8" stroke-width="0.800"/><path d="M5.5 9.4 l1.600 1.600 l-1.600 1.600 l-1.600 -1.600 z" fill="none" stroke="#4838c8" stroke-width="0.800"/></g></svg>
<span style="left:731.20px;top:53.60px;font:12.5px/17px 'Liberation Sans',sans-serif;color:#000;transform:scaleX(0.8276);transform-origin:0 50%;">Threshold</span>
<span style="left:834.66px;top:51.30px;font:16.3px/22px 'Liberation Mono',monospace;color:#383838;">100</span>
<span style="left:1311.50px;top:50.80px;font:12.5px/17px 'Liberation Sans',sans-serif;color:#000;transform:scaleX(0.8926);transform-origin:0 50%;">Layout</span>
<span style="left:1352.50px;top:51.80px;font:16.5px/22px 'Liberation Mono',monospace;color:#383838;">Simulate</span>
<span style="left:166.81px;top:83.60px;font:16.3px/22px 'Liberation Mono',monospace;color:#383838;">100 ns</span>
<div style="left:0px;top:110px;width:1618px;height:2px;background:#ffffff;"></div>
<div style="left:2px;top:112px;width:1614px;height:19px;background:#9cb7d5;"></div>
<div style="left:2px;top:131px;width:1614px;height:2px;background:#f4f7fb;"></div>
<div style="left:0px;top:112px;width:1px;height:892px;background:#e3e3e3;"></div>
<div style="left:1px;top:112px;width:1px;height:892px;background:#a0a0a0;"></div>
<div style="left:2px;top:131px;width:2px;height:873px;background:#ffffff;"></div>
<div style="left:4px;top:133px;width:1px;height:868px;background:#9a9a9a;"></div>
<div style="left:1616px;top:112px;width:1px;height:892px;background:#a0a0a0;"></div>
<div style="left:1617px;top:112px;width:1px;height:892px;background:#ffffff;"></div>
<svg style="left:3px;top:114px" width="17" height="17" viewBox="0 0 17 17">
<rect x="0.5" y="0.5" width="15" height="15" fill="#e8e8e8" stroke="#fff"/>
<path d="M0.5 16 H16 V0.5" stroke="#222" fill="none"/>
<rect x="1.5" y="5" width="12.5" height="9.5" fill="#0a0a0a"/>
<path d="M2 10 H4.5 V7 H7 V12 H9.5 V8 H13.5" stroke="#3fe08a" stroke-width="1.1" fill="none"/>
<rect x="9" y="11" width="5" height="2" fill="#3030a0"/>
</svg>
<span style="left:22.50px;top:113.50px;font:12.5px/17px 'Liberation Sans',sans-serif;color:#10182a;transform:scaleX(0.8734);transform-origin:0 50%;">Wave</span>
<div style="left:57px;top:118px;width:746px;height:2px;background:#d2f3ff;"></div>
<div style="left:57px;top:119.7px;width:746px;height:1.5px;background:#0a0a22;"></div>
<div style="left:57px;top:123px;width:746px;height:2px;background:#d2f3ff;"></div>
<div style="left:57px;top:124.7px;width:746px;height:1.5px;background:#0a0a22;"></div>
<div style="left:825px;top:118px;width:744.5px;height:2px;background:#d2f3ff;"></div>
<div style="left:825px;top:119.7px;width:744.5px;height:1.5px;background:#0a0a22;"></div>
<div style="left:825px;top:123px;width:744.5px;height:2px;background:#d2f3ff;"></div>
<div style="left:825px;top:124.7px;width:744.5px;height:1.5px;background:#0a0a22;"></div>
<svg style="left:800px;top:112px" width="30" height="20" viewBox="800 112 30 20"><rect x="805" y="118" width="1.2" height="1.2" fill="#ffffff"/><rect x="806" y="119" width="1.3" height="1.3" fill="#0a1030"/><rect x="808" y="118" width="1.2" height="1.2" fill="#ffffff"/><rect x="809" y="119" width="1.3" height="1.3" fill="#0a1030"/><rect x="811" y="118" width="1.2" height="1.2" fill="#ffffff"/><rect x="812" y="119" width="1.3" height="1.3" fill="#0a1030"/><rect x="814" y="118" width="1.2" height="1.2" fill="#ffffff"/><rect x="815" y="119" width="1.3" height="1.3" fill="#0a1030"/><rect x="817" y="118" width="1.2" height="1.2" fill="#ffffff"/><rect x="818" y="119" width="1.3" height="1.3" fill="#0a1030"/><rect x="820" y="118" width="1.2" height="1.2" fill="#ffffff"/><rect x="821" y="119" width="1.3" height="1.3" fill="#0a1030"/><rect x="806.5" y="121" width="1.2" height="1.2" fill="#ffffff"/><rect x="807.5" y="122" width="1.3" height="1.3" fill="#0a1030"/><rect x="809.5" y="121" width="1.2" height="1.2" fill="#ffffff"/><rect x="810.5" y="122" width="1.3" height="1.3" fill="#0a1030"/><rect x="812.5" y="121" width="1.2" height="1.2" fill="#ffffff"/><rect x="813.5" y="122" width="1.3" height="1.3" fill="#0a1030"/><rect x="815.5" y="121" width="1.2" height="1.2" fill="#ffffff"/><rect x="816.5" y="122" width="1.3" height="1.3" fill="#0a1030"/><rect x="818.5" y="121" width="1.2" height="1.2" fill="#ffffff"/><rect x="819.5" y="122" width="1.3" height="1.3" fill="#0a1030"/><rect x="821.5" y="121" width="1.2" height="1.2" fill="#ffffff"/><rect x="822.5" y="122" width="1.3" height="1.3" fill="#0a1030"/><rect x="805" y="124" width="1.2" height="1.2" fill="#ffffff"/><rect x="806" y="125" width="1.3" height="1.3" fill="#0a1030"/><rect x="808" y="124" width="1.2" height="1.2" fill="#ffffff"/><rect x="809" y="125" width="1.3" height="1.3" fill="#0a1030"/><rect x="811" y="124" width="1.2" height="1.2" fill="#ffffff"/><rect x="812" y="125" width="1.3" height="1.3" fill="#0a1030"/><rect x="814" y="124" width="1.2" height="1.2" fill="#ffffff"/><rect x="815" y="125" width="1.3" height="1.3" fill="#0a1030"/><rect x="817" y="124" width="1.2" height="1.2" fill="#ffffff"/><rect x="818" y="125" width="1.3" height="1.3" fill="#0a1030"/><rect x="820" y="124" width="1.2" height="1.2" fill="#ffffff"/><rect x="821" y="125" width="1.3" height="1.3" fill="#0a1030"/></svg>
<svg style="left:1574px;top:115.5px" width="42" height="12" viewBox="0 0 42 12">
<g fill="#f2f2f2" stroke="none"><rect x="0" y="0.5" width="10" height="10"/><rect x="14" y="0.5" width="10" height="10"/><rect x="28" y="0.5" width="10.500" height="10"/></g>
<g stroke="#8a8a8a" fill="none"><path d="M0 10.5 H10 V0.5"/><path d="M14 10.5 H24 V0.5"/><path d="M28 10.5 H38.500 V0.5"/></g>
<rect x="1" y="4.500" width="8" height="2.400" fill="#111"/>
<path d="M15.500 4.500 H19.500 V9 H15.500 Z" stroke="#111" stroke-width="1.300" fill="none"/><path d="M18.500 6 L22.500 1.800 M19.500 1.500 H22.800 V4.800" stroke="#111" stroke-width="1.300" fill="none"/>
<path d="M29.500 1.500 L37 9.500 M37 1.500 L29.500 9.500" stroke="#111" stroke-width="1.600" fill="none"/>
</svg>
<div style="left:5px;top:133px;width:324px;height:793px;background:#808080;"></div>
<div style="left:332px;top:133px;width:297px;height:793px;background:#808080;"></div>
<div style="left:329px;top:133px;width:1px;height:866px;background:#6c6c6c;"></div>
<div style="left:330px;top:133px;width:2px;height:866px;background:#ffffff;"></div>
<div style="left:629px;top:133px;width:1px;height:866px;background:#6c6c6c;"></div>
<div style="left:630px;top:133px;width:2px;height:866px;background:#ffffff;"></div>
<div style="left:5px;top:152px;width:324px;height:1px;background:#666;"></div>
<div style="left:5px;top:153px;width:324px;height:2px;background:#fff;"></div>
<div style="left:332px;top:152px;width:297px;height:1px;background:#666;"></div>
<div style="left:332px;top:153px;width:297px;height:2px;background:#fff;"></div>
<span style="left:270.50px;top:135.10px;font:12px/17px 'Liberation Sans',sans-serif;color:#fff;transform:scaleX(0.8777);transform-origin:0 50%;">Messages</span>
<div style="left:5px;top:155px;width:8px;height:768px;background:#ffffff;"></div>
<svg style="left:32.3px;top:160.9px" width="16" height="16" viewBox="-8 -8 16 16"><path d="M0 -7.6 L7.4 0 L0 7.6 L-7.4 0 Z" fill="#1287c8"/><path d="M0 -7.6 L-7.4 0 L-3.3 0 L0 -3.3 Z" fill="#7fdcf8"/><path d="M0 -7.6 L7.4 0 L3.3 0 L0 -3.3 Z" fill="#1a96da"/><path d="M0 7.6 L-7.4 0 L-3.3 0 L0 3.3 Z" fill="#1e9cdc"/><path d="M0 7.6 L7.4 0 L3.3 0 L0 3.3 Z" fill="#0e74ac"/><path d="M0 -3.3 L3.3 0 L0 3.3 L-3.3 0 Z" fill="#16b6f0"/><path d="M-0.6 -6.4 L-5.6 -1.2 L-4.4 -0.8 L-0.2 -5 Z" fill="#e4fbff" opacity="0.85"/></svg>
<span style="left:54.20px;top:158.70px;font:16px/22px 'Liberation Sans',sans-serif;color:#ffffff;transform:scaleX(0.9350);transform-origin:0 50%;">clk</span>
<span style="left:334.30px;top:158.70px;font:16px/22px 'Liberation Sans',sans-serif;color:#ffffff;transform:scaleX(1.0100);transform-origin:0 50%;">0</span>
<svg style="left:32.3px;top:183.9px" width="16" height="16" viewBox="-8 -8 16 16"><path d="M0 -7.6 L7.4 0 L0 7.6 L-7.4 0 Z" fill="#1287c8"/><path d="M0 -7.6 L-7.4 0 L-3.3 0 L0 -3.3 Z" fill="#7fdcf8"/><path d="M0 -7.6 L7.4 0 L3.3 0 L0 -3.3 Z" fill="#1a96da"/><path d="M0 7.6 L-7.4 0 L-3.3 0 L0 3.3 Z" fill="#1e9cdc"/><path d="M0 7.6 L7.4 0 L3.3 0 L0 3.3 Z" fill="#0e74ac"/><path d="M0 -3.3 L3.3 0 L0 3.3 L-3.3 0 Z" fill="#16b6f0"/><path d="M-0.6 -6.4 L-5.6 -1.2 L-4.4 -0.8 L-0.2 -5 Z" fill="#e4fbff" opacity="0.85"/></svg>
<span style="left:54.20px;top:181.70px;font:16px/22px 'Liberation Sans',sans-serif;color:#ffffff;transform:scaleX(0.9350);transform-origin:0 50%;">reset</span>
<span style="left:334.30px;top:181.70px;font:16px/22px 'Liberation Sans',sans-serif;color:#ffffff;transform:scaleX(1.0100);transform-origin:0 50%;">0</span>
<svg style="left:32.3px;top:206.9px" width="16" height="16" viewBox="-8 -8 16 16"><path d="M0 -7.6 L7.4 0 L0 7.6 L-7.4 0 Z" fill="#1287c8"/><path d="M0 -7.6 L-7.4 0 L-3.3 0 L0 -3.3 Z" fill="#7fdcf8"/><path d="M0 -7.6 L7.4 0 L3.3 0 L0 -3.3 Z" fill="#1a96da"/><path d="M0 7.6 L-7.4 0 L-3.3 0 L0 3.3 Z" fill="#1e9cdc"/><path d="M0 7.6 L7.4 0 L3.3 0 L0 3.3 Z" fill="#0e74ac"/><path d="M0 -3.3 L3.3 0 L0 3.3 L-3.3 0 Z" fill="#16b6f0"/><path d="M-0.6 -6.4 L-5.6 -1.2 L-4.4 -0.8 L-0.2 -5 Z" fill="#e4fbff" opacity="0.85"/></svg>
<span style="left:54.20px;top:204.70px;font:16px/22px 'Liberation Sans',sans-serif;color:#ffffff;transform:scaleX(0.9350);transform-origin:0 50%;">start</span>
<span style="left:334.30px;top:204.70px;font:16px/22px 'Liberation Sans',sans-serif;color:#ffffff;transform:scaleX(1.0100);transform-origin:0 50%;">0</span>
<svg style="left:32.3px;top:229.9px" width="16" height="16" viewBox="-8 -8 16 16"><path d="M0 -7.6 L7.4 0 L0 7.6 L-7.4 0 Z" fill="#1287c8"/><path d="M0 -7.6 L-7.4 0 L-3.3 0 L0 -3.3 Z" fill="#7fdcf8"/><path d="M0 -7.6 L7.4 0 L3.3 0 L0 -3.3 Z" fill="#1a96da"/><path d="M0 7.6 L-7.4 0 L-3.3 0 L0 3.3 Z" fill="#1e9cdc"/><path d="M0 7.6 L7.4 0 L3.3 0 L0 3.3 Z" fill="#0e74ac"/><path d="M0 -3.3 L3.3 0 L0 3.3 L-3.3 0 Z" fill="#16b6f0"/><path d="M-0.6 -6.4 L-5.6 -1.2 L-4.4 -0.8 L-0.2 -5 Z" fill="#e4fbff" opacity="0.85"/></svg>
<svg style="left:18.3px;top:233.6px" width="16" height="11" viewBox="0 0 16 11"><path d="M9.8 4.700 H15.500" stroke="#e0e0e0" stroke-width="1"/><rect x="0" y="0" width="9.800" height="9.800" fill="#ffffff"/><rect x="0.500" y="8.500" width="9" height="1.300" fill="#c4c8dc"/><path d="M2 4 H7 V5.300 H2 Z M4 2 H5.300 V7.300 H4 Z" fill="#000" shape-rendering="crispEdges"/></svg>
<span style="left:54.20px;top:227.70px;font:16px/22px 'Liberation Sans',sans-serif;color:#ffffff;transform:scaleX(0.9350);transform-origin:0 50%;">data_in</span>
<span style="left:334.30px;top:227.70px;font:16px/22px 'Liberation Sans',sans-serif;color:#ffffff;transform:scaleX(1.0100);transform-origin:0 50%;">00000000</span>
<div style="left:13px;top:250px;width:316px;height:22px;background:#ffffff;"></div>
<div style="left:13px;top:272px;width:316px;height:1px;background:#7e7e7e;"></div>
<div style="left:332px;top:250px;width:297px;height:22px;background:#ffffff;"></div>
<div style="left:332px;top:272px;width:297px;height:1px;background:#7e7e7e;"></div>
<svg style="left:32.3px;top:252.89999999999998px" width="16" height="16" viewBox="-8 -8 16 16"><path d="M0 -7.6 L7.4 0 L0 7.6 L-7.4 0 Z" fill="#1287c8"/><path d="M0 -7.6 L-7.4 0 L-3.3 0 L0 -3.3 Z" fill="#7fdcf8"/><path d="M0 -7.6 L7.4 0 L3.3 0 L0 -3.3 Z" fill="#1a96da"/><path d="M0 7.6 L-7.4 0 L-3.3 0 L0 3.3 Z" fill="#1e9cdc"/><path d="M0 7.6 L7.4 0 L3.3 0 L0 3.3 Z" fill="#0e74ac"/><path d="M0 -3.3 L3.3 0 L0 3.3 L-3.3 0 Z" fill="#16b6f0"/><path d="M-0.6 -6.4 L-5.6 -1.2 L-4.4 -0.8 L-0.2 -5 Z" fill="#e4fbff" opacity="0.85"/></svg>
<span style="left:54.20px;top:250.70px;font:16px/22px 'Liberation Sans',sans-serif;color:#000000;transform:scaleX(0.9350);transform-origin:0 50%;">tdi</span>
<span style="left:334.30px;top:250.70px;font:16px/22px 'Liberation Sans',sans-serif;color:#000000;transform:scaleX(0.9600);transform-origin:0 50%;">St0</span>
<div style="left:13px;top:273px;width:316px;height:22px;background:#ffffff;"></div>
<div style="left:13px;top:295px;width:316px;height:1px;background:#7e7e7e;"></div>
<div style="left:332px;top:273px;width:297px;height:22px;background:#ffffff;"></div>
<div style="left:332px;top:295px;width:297px;height:1px;background:#7e7e7e;"></div>
<svg style="left:32.3px;top:275.9px" width="16" height="16" viewBox="-8 -8 16 16"><path d="M0 -7.6 L7.4 0 L0 7.6 L-7.4 0 Z" fill="#1287c8"/><path d="M0 -7.6 L-7.4 0 L-3.3 0 L0 -3.3 Z" fill="#7fdcf8"/><path d="M0 -7.6 L7.4 0 L3.3 0 L0 -3.3 Z" fill="#1a96da"/><path d="M0 7.6 L-7.4 0 L-3.3 0 L0 3.3 Z" fill="#1e9cdc"/><path d="M0 7.6 L7.4 0 L3.3 0 L0 3.3 Z" fill="#0e74ac"/><path d="M0 -3.3 L3.3 0 L0 3.3 L-3.3 0 Z" fill="#16b6f0"/><path d="M-0.6 -6.4 L-5.6 -1.2 L-4.4 -0.8 L-0.2 -5 Z" fill="#e4fbff" opacity="0.85"/></svg>
<span style="left:54.20px;top:273.70px;font:16px/22px 'Liberation Sans',sans-serif;color:#000000;transform:scaleX(0.9350);transform-origin:0 50%;">tclk</span>
<span style="left:334.30px;top:273.70px;font:16px/22px 'Liberation Sans',sans-serif;color:#000000;transform:scaleX(0.9600);transform-origin:0 50%;">St1</span>
<div style="left:13px;top:296px;width:316px;height:22px;background:#ffffff;"></div>
<div style="left:13px;top:318px;width:316px;height:1px;background:#7e7e7e;"></div>
<div style="left:332px;top:296px;width:297px;height:22px;background:#ffffff;"></div>
<div style="left:332px;top:318px;width:297px;height:1px;background:#7e7e7e;"></div>
<svg style="left:32.3px;top:298.9px" width="16" height="16" viewBox="-8 -8 16 16"><path d="M0 -7.6 L7.4 0 L0 7.6 L-7.4 0 Z" fill="#1287c8"/><path d="M0 -7.6 L-7.4 0 L-3.3 0 L0 -3.3 Z" fill="#7fdcf8"/><path d="M0 -7.6 L7.4 0 L3.3 0 L0 -3.3 Z" fill="#1a96da"/><path d="M0 7.6 L-7.4 0 L-3.3 0 L0 3.3 Z" fill="#1e9cdc"/><path d="M0 7.6 L7.4 0 L3.3 0 L0 3.3 Z" fill="#0e74ac"/><path d="M0 -3.3 L3.3 0 L0 3.3 L-3.3 0 Z" fill="#16b6f0"/><path d="M-0.6 -6.4 L-5.6 -1.2 L-4.4 -0.8 L-0.2 -5 Z" fill="#e4fbff" opacity="0.85"/></svg>
<span style="left:54.20px;top:296.70px;font:16px/22px 'Liberation Sans',sans-serif;color:#000000;transform:scaleX(0.9350);transform-origin:0 50%;">tms</span>
<span style="left:334.30px;top:296.70px;font:16px/22px 'Liberation Sans',sans-serif;color:#000000;transform:scaleX(0.9600);transform-origin:0 50%;">St1</span>
<div style="left:13px;top:319px;width:316px;height:22px;background:#ffffff;"></div>
<div style="left:13px;top:341px;width:316px;height:1px;background:#7e7e7e;"></div>
<div style="left:332px;top:319px;width:297px;height:22px;background:#ffffff;"></div>
<div style="left:332px;top:341px;width:297px;height:1px;background:#7e7e7e;"></div>
<svg style="left:32.3px;top:321.9px" width="16" height="16" viewBox="-8 -8 16 16"><path d="M0 -7.6 L7.4 0 L0 7.6 L-7.4 0 Z" fill="#1287c8"/><path d="M0 -7.6 L-7.4 0 L-3.3 0 L0 -3.3 Z" fill="#7fdcf8"/><path d="M0 -7.6 L7.4 0 L3.3 0 L0 -3.3 Z" fill="#1a96da"/><path d="M0 7.6 L-7.4 0 L-3.3 0 L0 3.3 Z" fill="#1e9cdc"/><path d="M0 7.6 L7.4 0 L3.3 0 L0 3.3 Z" fill="#0e74ac"/><path d="M0 -3.3 L3.3 0 L0 3.3 L-3.3 0 Z" fill="#16b6f0"/><path d="M-0.6 -6.4 L-5.6 -1.2 L-4.4 -0.8 L-0.2 -5 Z" fill="#e4fbff" opacity="0.85"/></svg>
<span style="left:54.20px;top:319.70px;font:16px/22px 'Liberation Sans',sans-serif;color:#000000;transform:scaleX(0.9350);transform-origin:0 50%;">trst</span>
<span style="left:334.30px;top:319.70px;font:16px/22px 'Liberation Sans',sans-serif;color:#000000;transform:scaleX(0.9600);transform-origin:0 50%;">St0</span>
<svg style="left:32.3px;top:344.9px" width="16" height="16" viewBox="-8 -8 16 16"><path d="M0 -7.6 L7.4 0 L0 7.6 L-7.4 0 Z" fill="#1287c8"/><path d="M0 -7.6 L-7.4 0 L-3.3 0 L0 -3.3 Z" fill="#7fdcf8"/><path d="M0 -7.6 L7.4 0 L3.3 0 L0 -3.3 Z" fill="#1a96da"/><path d="M0 7.6 L-7.4 0 L-3.3 0 L0 3.3 Z" fill="#1e9cdc"/><path d="M0 7.6 L7.4 0 L3.3 0 L0 3.3 Z" fill="#0e74ac"/><path d="M0 -3.3 L3.3 0 L0 3.3 L-3.3 0 Z" fill="#16b6f0"/><path d="M-0.6 -6.4 L-5.6 -1.2 L-4.4 -0.8 L-0.2 -5 Z" fill="#e4fbff" opacity="0.85"/></svg>
<span style="left:54.20px;top:342.70px;font:16px/22px 'Liberation Sans',sans-serif;color:#ffffff;transform:scaleX(0.9350);transform-origin:0 50%;">done</span>
<span style="left:334.30px;top:342.70px;font:16px/22px 'Liberation Sans',sans-serif;color:#ffffff;transform:scaleX(0.9600);transform-origin:0 50%;">St0</span>
<svg style="left:32.3px;top:367.9px" width="16" height="16" viewBox="-8 -8 16 16"><path d="M0 -7.6 L7.4 0 L0 7.6 L-7.4 0 Z" fill="#1287c8"/><path d="M0 -7.6 L-7.4 0 L-3.3 0 L0 -3.3 Z" fill="#7fdcf8"/><path d="M0 -7.6 L7.4 0 L3.3 0 L0 -3.3 Z" fill="#1a96da"/><path d="M0 7.6 L-7.4 0 L-3.3 0 L0 3.3 Z" fill="#1e9cdc"/><path d="M0 7.6 L7.4 0 L3.3 0 L0 3.3 Z" fill="#0e74ac"/><path d="M0 -3.3 L3.3 0 L0 3.3 L-3.3 0 Z" fill="#16b6f0"/><path d="M-0.6 -6.4 L-5.6 -1.2 L-4.4 -0.8 L-0.2 -5 Z" fill="#e4fbff" opacity="0.85"/></svg>
<svg style="left:18.3px;top:371.6px" width="16" height="11" viewBox="0 0 16 11"><path d="M9.8 4.700 H15.500" stroke="#e0e0e0" stroke-width="1"/><rect x="0" y="0" width="9.800" height="9.800" fill="#ffffff"/><rect x="0.500" y="8.500" width="9" height="1.300" fill="#c4c8dc"/><path d="M2 4 H7 V5.300 H2 Z M4 2 H5.300 V7.300 H4 Z" fill="#000" shape-rendering="crispEdges"/></svg>
<span style="left:54.20px;top:365.70px;font:16px/22px 'Liberation Sans',sans-serif;color:#ffffff;transform:scaleX(0.9350);transform-origin:0 50%;">cnt</span>
<span style="left:334.30px;top:365.70px;font:16px/22px 'Liberation Sans',sans-serif;color:#ffffff;transform:scaleX(1.0100);transform-origin:0 50%;">0</span>
<div style="left:13px;top:388px;width:316px;height:22px;background:#ffffff;"></div>
<div style="left:13px;top:410px;width:316px;height:1px;background:#7e7e7e;"></div>
<div style="left:332px;top:388px;width:297px;height:22px;background:#ffffff;"></div>
<div style="left:332px;top:410px;width:297px;height:1px;background:#7e7e7e;"></div>
<svg style="left:32.3px;top:390.9px" width="16" height="16" viewBox="-8 -8 16 16"><path d="M0 -7.6 L7.4 0 L0 7.6 L-7.4 0 Z" fill="#1287c8"/><path d="M0 -7.6 L-7.4 0 L-3.3 0 L0 -3.3 Z" fill="#7fdcf8"/><path d="M0 -7.6 L7.4 0 L3.3 0 L0 -3.3 Z" fill="#1a96da"/><path d="M0 7.6 L-7.4 0 L-3.3 0 L0 3.3 Z" fill="#1e9cdc"/><path d="M0 7.6 L7.4 0 L3.3 0 L0 3.3 Z" fill="#0e74ac"/><path d="M0 -3.3 L3.3 0 L0 3.3 L-3.3 0 Z" fill="#16b6f0"/><path d="M-0.6 -6.4 L-5.6 -1.2 L-4.4 -0.8 L-0.2 -5 Z" fill="#e4fbff" opacity="0.85"/></svg>
<span style="left:54.20px;top:388.70px;font:16px/22px 'Liberation Sans',sans-serif;color:#000000;transform:scaleX(0.9350);transform-origin:0 50%;">error</span>
<span style="left:334.30px;top:388.70px;font:16px/22px 'Liberation Sans',sans-serif;color:#000000;transform:scaleX(1.0100);transform-origin:0 50%;">0</span>
<div style="left:13px;top:411px;width:316px;height:22px;background:#ffffff;"></div>
<div style="left:13px;top:433px;width:316px;height:1px;background:#7e7e7e;"></div>
<div style="left:332px;top:411px;width:297px;height:22px;background:#ffffff;"></div>
<div style="left:332px;top:433px;width:297px;height:1px;background:#7e7e7e;"></div>
<svg style="left:32.3px;top:413.9px" width="16" height="16" viewBox="-8 -8 16 16"><path d="M0 -7.6 L7.4 0 L0 7.6 L-7.4 0 Z" fill="#1287c8"/><path d="M0 -7.6 L-7.4 0 L-3.3 0 L0 -3.3 Z" fill="#7fdcf8"/><path d="M0 -7.6 L7.4 0 L3.3 0 L0 -3.3 Z" fill="#1a96da"/><path d="M0 7.6 L-7.4 0 L-3.3 0 L0 3.3 Z" fill="#1e9cdc"/><path d="M0 7.6 L7.4 0 L3.3 0 L0 3.3 Z" fill="#0e74ac"/><path d="M0 -3.3 L3.3 0 L0 3.3 L-3.3 0 Z" fill="#16b6f0"/><path d="M-0.6 -6.4 L-5.6 -1.2 L-4.4 -0.8 L-0.2 -5 Z" fill="#e4fbff" opacity="0.85"/></svg>
<span style="left:54.20px;top:411.70px;font:16px/22px 'Liberation Sans',sans-serif;color:#000000;transform:scaleX(0.9350);transform-origin:0 50%;">tdo</span>
<span style="left:334.30px;top:411.70px;font:16px/22px 'Liberation Sans',sans-serif;color:#000000;transform:scaleX(0.9600);transform-origin:0 50%;">St0</span>
<svg style="left:32.3px;top:436.9px" width="16" height="16" viewBox="-8 -8 16 16"><path d="M0 -7.6 L7.4 0 L0 7.6 L-7.4 0 Z" fill="#1287c8"/><path d="M0 -7.6 L-7.4 0 L-3.3 0 L0 -3.3 Z" fill="#7fdcf8"/><path d="M0 -7.6 L7.4 0 L3.3 0 L0 -3.3 Z" fill="#1a96da"/><path d="M0 7.6 L-7.4 0 L-3.3 0 L0 3.3 Z" fill="#1e9cdc"/><path d="M0 7.6 L7.4 0 L3.3 0 L0 3.3 Z" fill="#0e74ac"/><path d="M0 -3.3 L3.3 0 L0 3.3 L-3.3 0 Z" fill="#16b6f0"/><path d="M-0.6 -6.4 L-5.6 -1.2 L-4.4 -0.8 L-0.2 -5 Z" fill="#e4fbff" opacity="0.85"/></svg>
<svg style="left:18.3px;top:440.6px" width="16" height="11" viewBox="0 0 16 11"><path d="M9.8 4.700 H15.500" stroke="#e0e0e0" stroke-width="1"/><rect x="0" y="0" width="9.800" height="9.800" fill="#ffffff"/><rect x="0.500" y="8.500" width="9" height="1.300" fill="#c4c8dc"/><path d="M2 4 H7 V5.300 H2 Z M4 2 H5.300 V7.300 H4 Z" fill="#000" shape-rendering="crispEdges"/></svg>
<span style="left:54.20px;top:434.70px;font:16px/22px 'Liberation Sans',sans-serif;color:#ffffff;transform:scaleX(0.9350);transform-origin:0 50%;">tdi_data</span>
<span style="left:334.30px;top:434.70px;font:16px/22px 'Liberation Sans',sans-serif;color:#ffffff;transform:scaleX(1.0100);transform-origin:0 50%;">00000000000000000000000000000000</span>
<svg style="left:32.3px;top:459.9px" width="16" height="16" viewBox="-8 -8 16 16"><path d="M0 -7.6 L7.4 0 L0 7.6 L-7.4 0 Z" fill="#1287c8"/><path d="M0 -7.6 L-7.4 0 L-3.3 0 L0 -3.3 Z" fill="#7fdcf8"/><path d="M0 -7.6 L7.4 0 L3.3 0 L0 -3.3 Z" fill="#1a96da"/><path d="M0 7.6 L-7.4 0 L-3.3 0 L0 3.3 Z" fill="#1e9cdc"/><path d="M0 7.6 L7.4 0 L3.3 0 L0 3.3 Z" fill="#0e74ac"/><path d="M0 -3.3 L3.3 0 L0 3.3 L-3.3 0 Z" fill="#16b6f0"/><path d="M-0.6 -6.4 L-5.6 -1.2 L-4.4 -0.8 L-0.2 -5 Z" fill="#e4fbff" opacity="0.85"/></svg>
<svg style="left:18.3px;top:463.6px" width="16" height="11" viewBox="0 0 16 11"><path d="M9.8 4.700 H15.500" stroke="#e0e0e0" stroke-width="1"/><rect x="0" y="0" width="9.800" height="9.800" fill="#ffffff"/><rect x="0.500" y="8.500" width="9" height="1.300" fill="#c4c8dc"/><path d="M2 4 H7 V5.300 H2 Z M4 2 H5.300 V7.300 H4 Z" fill="#000" shape-rendering="crispEdges"/></svg>
<span style="left:54.20px;top:457.70px;font:16px/22px 'Liberation Sans',sans-serif;color:#ffffff;transform:scaleX(0.9350);transform-origin:0 50%;">data_in_samp_1</span>
<span style="left:334.30px;top:457.70px;font:16px/22px 'Liberation Sans',sans-serif;color:#ffffff;transform:scaleX(1.0100);transform-origin:0 50%;">00000000</span>
<svg style="left:32.3px;top:482.9px" width="16" height="16" viewBox="-8 -8 16 16"><path d="M0 -7.6 L7.4 0 L0 7.6 L-7.4 0 Z" fill="#1287c8"/><path d="M0 -7.6 L-7.4 0 L-3.3 0 L0 -3.3 Z" fill="#7fdcf8"/><path d="M0 -7.6 L7.4 0 L3.3 0 L0 -3.3 Z" fill="#1a96da"/><path d="M0 7.6 L-7.4 0 L-3.3 0 L0 3.3 Z" fill="#1e9cdc"/><path d="M0 7.6 L7.4 0 L3.3 0 L0 3.3 Z" fill="#0e74ac"/><path d="M0 -3.3 L3.3 0 L0 3.3 L-3.3 0 Z" fill="#16b6f0"/><path d="M-0.6 -6.4 L-5.6 -1.2 L-4.4 -0.8 L-0.2 -5 Z" fill="#e4fbff" opacity="0.85"/></svg>
<svg style="left:18.3px;top:486.6px" width="16" height="11" viewBox="0 0 16 11"><path d="M9.8 4.700 H15.500" stroke="#e0e0e0" stroke-width="1"/><rect x="0" y="0" width="9.800" height="9.800" fill="#ffffff"/><rect x="0.500" y="8.500" width="9" height="1.300" fill="#c4c8dc"/><path d="M2 4 H7 V5.300 H2 Z M4 2 H5.300 V7.300 H4 Z" fill="#000" shape-rendering="crispEdges"/></svg>
<span style="left:54.20px;top:480.70px;font:16px/22px 'Liberation Sans',sans-serif;color:#ffffff;transform:scaleX(0.9350);transform-origin:0 50%;">data_in_samp_2</span>
<span style="left:334.30px;top:480.70px;font:16px/22px 'Liberation Sans',sans-serif;color:#ffffff;transform:scaleX(1.0100);transform-origin:0 50%;">00000000000000000000000000000000</span>
<div style="left:15px;top:513px;width:18px;height:1px;background:#e8e8e8;"></div>
<span style="left:38.50px;top:503.70px;font:16px/22px 'Liberation Sans',sans-serif;color:#ffffff;transform:scaleX(0.9350);transform-origin:0 50%;">BMTSCAN_Single_SRAM_MARCH_C</span>
<div style="left:299.38394531250003px;top:513px;width:28.616054687499968px;height:1px;background:#e8e8e8;"></div>
<div style="left:333px;top:513px;width:295px;height:1px;background:#e8e8e8;"></div>
<svg style="left:32.3px;top:528.9px" width="16" height="16" viewBox="-8 -8 16 16"><path d="M0 -7.6 L7.4 0 L0 7.6 L-7.4 0 Z" fill="#1287c8"/><path d="M0 -7.6 L-7.4 0 L-3.3 0 L0 -3.3 Z" fill="#7fdcf8"/><path d="M0 -7.6 L7.4 0 L3.3 0 L0 -3.3 Z" fill="#1a96da"/><path d="M0 7.6 L-7.4 0 L-3.3 0 L0 3.3 Z" fill="#1e9cdc"/><path d="M0 7.6 L7.4 0 L3.3 0 L0 3.3 Z" fill="#0e74ac"/><path d="M0 -3.3 L3.3 0 L0 3.3 L-3.3 0 Z" fill="#16b6f0"/><path d="M-0.6 -6.4 L-5.6 -1.2 L-4.4 -0.8 L-0.2 -5 Z" fill="#e4fbff" opacity="0.85"/></svg>
<span style="left:54.20px;top:526.70px;font:16px/22px 'Liberation Sans',sans-serif;color:#ffffff;transform:scaleX(0.9350);transform-origin:0 50%;">clk</span>
<span style="left:334.30px;top:526.70px;font:16px/22px 'Liberation Sans',sans-serif;color:#ffffff;transform:scaleX(0.9600);transform-origin:0 50%;">St0</span>
<svg style="left:32.3px;top:551.9px" width="16" height="16" viewBox="-8 -8 16 16"><path d="M0 -7.6 L7.4 0 L0 7.6 L-7.4 0 Z" fill="#1287c8"/><path d="M0 -7.6 L-7.4 0 L-3.3 0 L0 -3.3 Z" fill="#7fdcf8"/><path d="M0 -7.6 L7.4 0 L3.3 0 L0 -3.3 Z" fill="#1a96da"/><path d="M0 7.6 L-7.4 0 L-3.3 0 L0 3.3 Z" fill="#1e9cdc"/><path d="M0 7.6 L7.4 0 L3.3 0 L0 3.3 Z" fill="#0e74ac"/><path d="M0 -3.3 L3.3 0 L0 3.3 L-3.3 0 Z" fill="#16b6f0"/><path d="M-0.6 -6.4 L-5.6 -1.2 L-4.4 -0.8 L-0.2 -5 Z" fill="#e4fbff" opacity="0.85"/></svg>
<span style="left:54.20px;top:549.70px;font:16px/22px 'Liberation Sans',sans-serif;color:#ffffff;transform:scaleX(0.9350);transform-origin:0 50%;">reset</span>
<span style="left:334.30px;top:549.70px;font:16px/22px 'Liberation Sans',sans-serif;color:#ffffff;transform:scaleX(0.9600);transform-origin:0 50%;">St0</span>
<svg style="left:32.3px;top:574.9px" width="16" height="16" viewBox="-8 -8 16 16"><path d="M0 -7.6 L7.4 0 L0 7.6 L-7.4 0 Z" fill="#1287c8"/><path d="M0 -7.6 L-7.4 0 L-3.3 0 L0 -3.3 Z" fill="#7fdcf8"/><path d="M0 -7.6 L7.4 0 L3.3 0 L0 -3.3 Z" fill="#1a96da"/><path d="M0 7.6 L-7.4 0 L-3.3 0 L0 3.3 Z" fill="#1e9cdc"/><path d="M0 7.6 L7.4 0 L3.3 0 L0 3.3 Z" fill="#0e74ac"/><path d="M0 -3.3 L3.3 0 L0 3.3 L-3.3 0 Z" fill="#16b6f0"/><path d="M-0.6 -6.4 L-5.6 -1.2 L-4.4 -0.8 L-0.2 -5 Z" fill="#e4fbff" opacity="0.85"/></svg>
<span style="left:54.20px;top:572.70px;font:16px/22px 'Liberation Sans',sans-serif;color:#ffffff;transform:scaleX(0.9350);transform-origin:0 50%;">TDI</span>
<span style="left:334.30px;top:572.70px;font:16px/22px 'Liberation Sans',sans-serif;color:#ffffff;transform:scaleX(0.9600);transform-origin:0 50%;">St0</span>
<svg style="left:32.3px;top:597.9px" width="16" height="16" viewBox="-8 -8 16 16"><path d="M0 -7.6 L7.4 0 L0 7.6 L-7.4 0 Z" fill="#1287c8"/><path d="M0 -7.6 L-7.4 0 L-3.3 0 L0 -3.3 Z" fill="#7fdcf8"/><path d="M0 -7.6 L7.4 0 L3.3 0 L0 -3.3 Z" fill="#1a96da"/><path d="M0 7.6 L-7.4 0 L-3.3 0 L0 3.3 Z" fill="#1e9cdc"/><path d="M0 7.6 L7.4 0 L3.3 0 L0 3.3 Z" fill="#0e74ac"/><path d="M0 -3.3 L3.3 0 L0 3.3 L-3.3 0 Z" fill="#16b6f0"/><path d="M-0.6 -6.4 L-5.6 -1.2 L-4.4 -0.8 L-0.2 -5 Z" fill="#e4fbff" opacity="0.85"/></svg>
<span style="left:54.20px;top:595.70px;font:16px/22px 'Liberation Sans',sans-serif;color:#ffffff;transform:scaleX(0.9350);transform-origin:0 50%;">TMS</span>
<span style="left:334.30px;top:595.70px;font:16px/22px 'Liberation Sans',sans-serif;color:#ffffff;transform:scaleX(0.9600);transform-origin:0 50%;">St1</span>
<svg style="left:32.3px;top:620.9px" width="16" height="16" viewBox="-8 -8 16 16"><path d="M0 -7.6 L7.4 0 L0 7.6 L-7.4 0 Z" fill="#1287c8"/><path d="M0 -7.6 L-7.4 0 L-3.3 0 L0 -3.3 Z" fill="#7fdcf8"/><path d="M0 -7.6 L7.4 0 L3.3 0 L0 -3.3 Z" fill="#1a96da"/><path d="M0 7.6 L-7.4 0 L-3.3 0 L0 3.3 Z" fill="#1e9cdc"/><path d="M0 7.6 L7.4 0 L3.3 0 L0 3.3 Z" fill="#0e74ac"/><path d="M0 -3.3 L3.3 0 L0 3.3 L-3.3 0 Z" fill="#16b6f0"/><path d="M-0.6 -6.4 L-5.6 -1.2 L-4.4 -0.8 L-0.2 -5 Z" fill="#e4fbff" opacity="0.85"/></svg>
<span style="left:54.20px;top:618.70px;font:16px/22px 'Liberation Sans',sans-serif;color:#ffffff;transform:scaleX(0.9350);transform-origin:0 50%;">nTRST</span>
<span style="left:334.30px;top:618.70px;font:16px/22px 'Liberation Sans',sans-serif;color:#ffffff;transform:scaleX(0.9600);transform-origin:0 50%;">St0</span>
<svg style="left:32.3px;top:643.9px" width="16" height="16" viewBox="-8 -8 16 16"><path d="M0 -7.6 L7.4 0 L0 7.6 L-7.4 0 Z" fill="#1287c8"/><path d="M0 -7.6 L-7.4 0 L-3.3 0 L0 -3.3 Z" fill="#7fdcf8"/><path d="M0 -7.6 L7.4 0 L3.3 0 L0 -3.3 Z" fill="#1a96da"/><path d="M0 7.6 L-7.4 0 L-3.3 0 L0 3.3 Z" fill="#1e9cdc"/><path d="M0 7.6 L7.4 0 L3.3 0 L0 3.3 Z" fill="#0e74ac"/><path d="M0 -3.3 L3.3 0 L0 3.3 L-3.3 0 Z" fill="#16b6f0"/><path d="M-0.6 -6.4 L-5.6 -1.2 L-4.4 -0.8 L-0.2 -5 Z" fill="#e4fbff" opacity="0.85"/></svg>
<span style="left:54.20px;top:641.70px;font:16px/22px 'Liberation Sans',sans-serif;color:#ffffff;transform:scaleX(0.9350);transform-origin:0 50%;">TCK</span>
<span style="left:334.30px;top:641.70px;font:16px/22px 'Liberation Sans',sans-serif;color:#ffffff;transform:scaleX(0.9600);transform-origin:0 50%;">St1</span>
<svg style="left:32.3px;top:666.9px" width="16" height="16" viewBox="-8 -8 16 16"><path d="M0 -7.6 L7.4 0 L0 7.6 L-7.4 0 Z" fill="#1287c8"/><path d="M0 -7.6 L-7.4 0 L-3.3 0 L0 -3.3 Z" fill="#7fdcf8"/><path d="M0 -7.6 L7.4 0 L3.3 0 L0 -3.3 Z" fill="#1a96da"/><path d="M0 7.6 L-7.4 0 L-3.3 0 L0 3.3 Z" fill="#1e9cdc"/><path d="M0 7.6 L7.4 0 L3.3 0 L0 3.3 Z" fill="#0e74ac"/><path d="M0 -3.3 L3.3 0 L0 3.3 L-3.3 0 Z" fill="#16b6f0"/><path d="M-0.6 -6.4 L-5.6 -1.2 L-4.4 -0.8 L-0.2 -5 Z" fill="#e4fbff" opacity="0.85"/></svg>
<span style="left:54.20px;top:664.70px;font:16px/22px 'Liberation Sans',sans-serif;color:#ffffff;transform:scaleX(0.9350);transform-origin:0 50%;">TDO</span>
<span style="left:334.30px;top:664.70px;font:16px/22px 'Liberation Sans',sans-serif;color:#ffffff;transform:scaleX(0.9600);transform-origin:0 50%;">St0</span>
<svg style="left:32.3px;top:689.9px" width="16" height="16" viewBox="-8 -8 16 16"><path d="M0 -7.6 L7.4 0 L0 7.6 L-7.4 0 Z" fill="#1287c8"/><path d="M0 -7.6 L-7.4 0 L-3.3 0 L0 -3.3 Z" fill="#7fdcf8"/><path d="M0 -7.6 L7.4 0 L3.3 0 L0 -3.3 Z" fill="#1a96da"/><path d="M0 7.6 L-7.4 0 L-3.3 0 L0 3.3 Z" fill="#1e9cdc"/><path d="M0 7.6 L7.4 0 L3.3 0 L0 3.3 Z" fill="#0e74ac"/><path d="M0 -3.3 L3.3 0 L0 3.3 L-3.3 0 Z" fill="#16b6f0"/><path d="M-0.6 -6.4 L-5.6 -1.2 L-4.4 -0.8 L-0.2 -5 Z" fill="#e4fbff" opacity="0.85"/></svg>
<svg style="left:18.3px;top:693.6px" width="16" height="11" viewBox="0 0 16 11"><path d="M9.8 4.700 H15.500" stroke="#e0e0e0" stroke-width="1"/><rect x="0" y="0" width="9.800" height="9.800" fill="#ffffff"/><rect x="0.500" y="8.500" width="9" height="1.300" fill="#c4c8dc"/><path d="M2 4 H7 V5.300 H2 Z M4 2 H5.300 V7.300 H4 Z" fill="#000" shape-rendering="crispEdges"/></svg>
<span style="left:54.20px;top:687.70px;font:16px/22px 'Liberation Sans',sans-serif;color:#ffffff;transform:scaleX(0.9350);transform-origin:0 50%;">addr</span>
<span style="left:334.30px;top:687.70px;font:16px/22px 'Liberation Sans',sans-serif;color:#ffffff;transform:scaleX(1.0100);transform-origin:0 50%;">00000000</span>
<svg style="left:32.3px;top:712.9px" width="16" height="16" viewBox="-8 -8 16 16"><path d="M0 -7.6 L7.4 0 L0 7.6 L-7.4 0 Z" fill="#1287c8"/><path d="M0 -7.6 L-7.4 0 L-3.3 0 L0 -3.3 Z" fill="#7fdcf8"/><path d="M0 -7.6 L7.4 0 L3.3 0 L0 -3.3 Z" fill="#1a96da"/><path d="M0 7.6 L-7.4 0 L-3.3 0 L0 3.3 Z" fill="#1e9cdc"/><path d="M0 7.6 L7.4 0 L3.3 0 L0 3.3 Z" fill="#0e74ac"/><path d="M0 -3.3 L3.3 0 L0 3.3 L-3.3 0 Z" fill="#16b6f0"/><path d="M-0.6 -6.4 L-5.6 -1.2 L-4.4 -0.8 L-0.2 -5 Z" fill="#e4fbff" opacity="0.85"/></svg>
<span style="left:54.20px;top:710.70px;font:16px/22px 'Liberation Sans',sans-serif;color:#ffffff;transform:scaleX(0.9350);transform-origin:0 50%;">inc_addr</span>
<span style="left:334.30px;top:710.70px;font:16px/22px 'Liberation Sans',sans-serif;color:#ffffff;transform:scaleX(0.9600);transform-origin:0 50%;">St0</span>
<svg style="left:32.3px;top:735.9px" width="16" height="16" viewBox="-8 -8 16 16"><path d="M0 -7.6 L7.4 0 L0 7.6 L-7.4 0 Z" fill="#1287c8"/><path d="M0 -7.6 L-7.4 0 L-3.3 0 L0 -3.3 Z" fill="#7fdcf8"/><path d="M0 -7.6 L7.4 0 L3.3 0 L0 -3.3 Z" fill="#1a96da"/><path d="M0 7.6 L-7.4 0 L-3.3 0 L0 3.3 Z" fill="#1e9cdc"/><path d="M0 7.6 L7.4 0 L3.3 0 L0 3.3 Z" fill="#0e74ac"/><path d="M0 -3.3 L3.3 0 L0 3.3 L-3.3 0 Z" fill="#16b6f0"/><path d="M-0.6 -6.4 L-5.6 -1.2 L-4.4 -0.8 L-0.2 -5 Z" fill="#e4fbff" opacity="0.85"/></svg>
<svg style="left:18.3px;top:739.6px" width="16" height="11" viewBox="0 0 16 11"><path d="M9.8 4.700 H15.500" stroke="#e0e0e0" stroke-width="1"/><rect x="0" y="0" width="9.800" height="9.800" fill="#ffffff"/><rect x="0.500" y="8.500" width="9" height="1.300" fill="#c4c8dc"/><path d="M2 4 H7 V5.300 H2 Z M4 2 H5.300 V7.300 H4 Z" fill="#000" shape-rendering="crispEdges"/></svg>
<span style="left:54.20px;top:733.70px;font:16px/22px 'Liberation Sans',sans-serif;color:#ffffff;transform:scaleX(0.9350);transform-origin:0 50%;">MBIST_rd_data</span>
<span style="left:334.30px;top:733.70px;font:16px/22px 'Liberation Sans',sans-serif;color:#ffffff;transform:scaleX(1.0100);transform-origin:0 50%;">00000000</span>
<svg style="left:32.3px;top:758.9px" width="16" height="16" viewBox="-8 -8 16 16"><path d="M0 -7.6 L7.4 0 L0 7.6 L-7.4 0 Z" fill="#1287c8"/><path d="M0 -7.6 L-7.4 0 L-3.3 0 L0 -3.3 Z" fill="#7fdcf8"/><path d="M0 -7.6 L7.4 0 L3.3 0 L0 -3.3 Z" fill="#1a96da"/><path d="M0 7.6 L-7.4 0 L-3.3 0 L0 3.3 Z" fill="#1e9cdc"/><path d="M0 7.6 L7.4 0 L3.3 0 L0 3.3 Z" fill="#0e74ac"/><path d="M0 -3.3 L3.3 0 L0 3.3 L-3.3 0 Z" fill="#16b6f0"/><path d="M-0.6 -6.4 L-5.6 -1.2 L-4.4 -0.8 L-0.2 -5 Z" fill="#e4fbff" opacity="0.85"/></svg>
<span style="left:54.20px;top:756.70px;font:16px/22px 'Liberation Sans',sans-serif;color:#ffffff;transform:scaleX(0.9350);transform-origin:0 50%;">MBIST_WR_enable</span>
<span style="left:334.30px;top:756.70px;font:16px/22px 'Liberation Sans',sans-serif;color:#ffffff;transform:scaleX(0.9600);transform-origin:0 50%;">St0</span>
<svg style="left:32.3px;top:781.9px" width="16" height="16" viewBox="-8 -8 16 16"><path d="M0 -7.6 L7.4 0 L0 7.6 L-7.4 0 Z" fill="#1287c8"/><path d="M0 -7.6 L-7.4 0 L-3.3 0 L0 -3.3 Z" fill="#7fdcf8"/><path d="M0 -7.6 L7.4 0 L3.3 0 L0 -3.3 Z" fill="#1a96da"/><path d="M0 7.6 L-7.4 0 L-3.3 0 L0 3.3 Z" fill="#1e9cdc"/><path d="M0 7.6 L7.4 0 L3.3 0 L0 3.3 Z" fill="#0e74ac"/><path d="M0 -3.3 L3.3 0 L0 3.3 L-3.3 0 Z" fill="#16b6f0"/><path d="M-0.6 -6.4 L-5.6 -1.2 L-4.4 -0.8 L-0.2 -5 Z" fill="#e4fbff" opacity="0.85"/></svg>
<svg style="left:18.3px;top:785.6px" width="16" height="11" viewBox="0 0 16 11"><path d="M9.8 4.700 H15.500" stroke="#e0e0e0" stroke-width="1"/><rect x="0" y="0" width="9.800" height="9.800" fill="#ffffff"/><rect x="0.500" y="8.500" width="9" height="1.300" fill="#c4c8dc"/><path d="M2 4 H7 V5.300 H2 Z M4 2 H5.300 V7.300 H4 Z" fill="#000" shape-rendering="crispEdges"/></svg>
<span style="left:54.20px;top:779.70px;font:16px/22px 'Liberation Sans',sans-serif;color:#ffffff;transform:scaleX(0.9350);transform-origin:0 50%;">MBIST_WR_data</span>
<span style="left:334.30px;top:779.70px;font:16px/22px 'Liberation Sans',sans-serif;color:#ffffff;transform:scaleX(1.0100);transform-origin:0 50%;">00000000000000000000000000000000</span>
<svg style="left:32.3px;top:804.9px" width="16" height="16" viewBox="-8 -8 16 16"><path d="M0 -7.6 L7.4 0 L0 7.6 L-7.4 0 Z" fill="#1287c8"/><path d="M0 -7.6 L-7.4 0 L-3.3 0 L0 -3.3 Z" fill="#7fdcf8"/><path d="M0 -7.6 L7.4 0 L3.3 0 L0 -3.3 Z" fill="#1a96da"/><path d="M0 7.6 L-7.4 0 L-3.3 0 L0 3.3 Z" fill="#1e9cdc"/><path d="M0 7.6 L7.4 0 L3.3 0 L0 3.3 Z" fill="#0e74ac"/><path d="M0 -3.3 L3.3 0 L0 3.3 L-3.3 0 Z" fill="#16b6f0"/><path d="M-0.6 -6.4 L-5.6 -1.2 L-4.4 -0.8 L-0.2 -5 Z" fill="#e4fbff" opacity="0.85"/></svg>
<span style="left:54.20px;top:802.70px;font:16px/22px 'Liberation Sans',sans-serif;color:#ffffff;transform:scaleX(0.9350);transform-origin:0 50%;">SRAM_enable</span>
<span style="left:334.30px;top:802.70px;font:16px/22px 'Liberation Sans',sans-serif;color:#ffffff;transform:scaleX(0.9600);transform-origin:0 50%;">St0</span>
<div style="left:15px;top:835px;width:18px;height:1px;background:#e8e8e8;"></div>
<span style="left:38.50px;top:825.70px;font:16px/22px 'Liberation Sans',sans-serif;color:#ffffff;transform:scaleX(0.9350);transform-origin:0 50%;">Single_Port_RAM</span>
<div style="left:161.405703125px;top:835px;width:166.594296875px;height:1px;background:#e8e8e8;"></div>
<div style="left:333px;top:835px;width:295px;height:1px;background:#e8e8e8;"></div>
<svg style="left:32.3px;top:850.9px" width="16" height="16" viewBox="-8 -8 16 16"><path d="M0 -7.6 L7.4 0 L0 7.6 L-7.4 0 Z" fill="#1287c8"/><path d="M0 -7.6 L-7.4 0 L-3.3 0 L0 -3.3 Z" fill="#7fdcf8"/><path d="M0 -7.6 L7.4 0 L3.3 0 L0 -3.3 Z" fill="#1a96da"/><path d="M0 7.6 L-7.4 0 L-3.3 0 L0 3.3 Z" fill="#1e9cdc"/><path d="M0 7.6 L7.4 0 L3.3 0 L0 3.3 Z" fill="#0e74ac"/><path d="M0 -3.3 L3.3 0 L0 3.3 L-3.3 0 Z" fill="#16b6f0"/><path d="M-0.6 -6.4 L-5.6 -1.2 L-4.4 -0.8 L-0.2 -5 Z" fill="#e4fbff" opacity="0.85"/></svg>
<span style="left:54.20px;top:848.70px;font:16px/22px 'Liberation Sans',sans-serif;color:#ffffff;transform:scaleX(0.9350);transform-origin:0 50%;">clk</span>
<span style="left:334.30px;top:848.70px;font:16px/22px 'Liberation Sans',sans-serif;color:#ffffff;transform:scaleX(0.9600);transform-origin:0 50%;">St0</span>
<svg style="left:32.3px;top:873.9px" width="16" height="16" viewBox="-8 -8 16 16"><path d="M0 -7.6 L7.4 0 L0 7.6 L-7.4 0 Z" fill="#1287c8"/><path d="M0 -7.6 L-7.4 0 L-3.3 0 L0 -3.3 Z" fill="#7fdcf8"/><path d="M0 -7.6 L7.4 0 L3.3 0 L0 -3.3 Z" fill="#1a96da"/><path d="M0 7.6 L-7.4 0 L-3.3 0 L0 3.3 Z" fill="#1e9cdc"/><path d="M0 7.6 L7.4 0 L3.3 0 L0 3.3 Z" fill="#0e74ac"/><path d="M0 -3.3 L3.3 0 L0 3.3 L-3.3 0 Z" fill="#16b6f0"/><path d="M-0.6 -6.4 L-5.6 -1.2 L-4.4 -0.8 L-0.2 -5 Z" fill="#e4fbff" opacity="0.85"/></svg>
<span style="left:54.20px;top:871.70px;font:16px/22px 'Liberation Sans',sans-serif;color:#ffffff;transform:scaleX(0.9350);transform-origin:0 50%;">reset</span>
<span style="left:334.30px;top:871.70px;font:16px/22px 'Liberation Sans',sans-serif;color:#ffffff;transform:scaleX(0.9600);transform-origin:0 50%;">St0</span>
<svg style="left:32.3px;top:896.9px" width="16" height="16" viewBox="-8 -8 16 16"><path d="M0 -7.6 L7.4 0 L0 7.6 L-7.4 0 Z" fill="#1287c8"/><path d="M0 -7.6 L-7.4 0 L-3.3 0 L0 -3.3 Z" fill="#7fdcf8"/><path d="M0 -7.6 L7.4 0 L3.3 0 L0 -3.3 Z" fill="#1a96da"/><path d="M0 7.6 L-7.4 0 L-3.3 0 L0 3.3 Z" fill="#1e9cdc"/><path d="M0 7.6 L7.4 0 L3.3 0 L0 3.3 Z" fill="#0e74ac"/><path d="M0 -3.3 L3.3 0 L0 3.3 L-3.3 0 Z" fill="#16b6f0"/><path d="M-0.6 -6.4 L-5.6 -1.2 L-4.4 -0.8 L-0.2 -5 Z" fill="#e4fbff" opacity="0.85"/></svg>
<span style="left:54.20px;top:894.70px;font:16px/22px 'Liberation Sans',sans-serif;color:#ffffff;transform:scaleX(0.9350);transform-origin:0 50%;">wr_enb</span>
<span style="left:334.30px;top:894.70px;font:16px/22px 'Liberation Sans',sans-serif;color:#ffffff;transform:scaleX(0.9600);transform-origin:0 50%;">St0</span>
<div style="left:0;top:917px;width:632px;height:6px;overflow:hidden">
<svg style="left:32.3px;top:2.9000000000000004px" width="16" height="16" viewBox="-8 -8 16 16"><path d="M0 -7.6 L7.4 0 L0 7.6 L-7.4 0 Z" fill="#1287c8"/><path d="M0 -7.6 L-7.4 0 L-3.3 0 L0 -3.3 Z" fill="#7fdcf8"/><path d="M0 -7.6 L7.4 0 L3.3 0 L0 -3.3 Z" fill="#1a96da"/><path d="M0 7.6 L-7.4 0 L-3.3 0 L0 3.3 Z" fill="#1e9cdc"/><path d="M0 7.6 L7.4 0 L3.3 0 L0 3.3 Z" fill="#0e74ac"/><path d="M0 -3.3 L3.3 0 L0 3.3 L-3.3 0 Z" fill="#16b6f0"/><path d="M-0.6 -6.4 L-5.6 -1.2 L-4.4 -0.8 L-0.2 -5 Z" fill="#e4fbff" opacity="0.85"/></svg>
<span style="left:54.20px;top:0.70px;font:16px/22px 'Liberation Sans',sans-serif;color:#ffffff;transform:scaleX(0.9350);transform-origin:0 50%;">SRAM_enable</span>
<span style="left:334.30px;top:0.70px;font:16px/22px 'Liberation Sans',sans-serif;color:#ffffff;transform:scaleX(0.9600);transform-origin:0 50%;">St0</span>
</div>
<div style="left:5px;top:923px;width:1590px;height:1px;background:#5c5c5c;"></div>
<div style="left:5px;top:924px;width:1590px;height:2px;background:#ffffff;"></div>
<svg style="left:632px;top:133px" width="961" height="790" viewBox="632 133 961 790" shape-rendering="crispEdges">
<rect x="632" y="133" width="961" height="790" fill="#000"/>
<rect x="632" y="153" width="961" height="2" fill="#fff"/>
<rect x="703" y="155" width="1" height="768" fill="#8e8e8e"/>
<rect x="774" y="155" width="1" height="768" fill="#8e8e8e"/>
<rect x="846" y="155" width="1" height="768" fill="#8e8e8e"/>
<rect x="917" y="155" width="1" height="768" fill="#8e8e8e"/>
<rect x="989" y="155" width="1" height="768" fill="#8e8e8e"/>
<rect x="1060" y="155" width="1" height="768" fill="#8e8e8e"/>
<rect x="1132" y="155" width="1" height="768" fill="#8e8e8e"/>
<rect x="1203" y="155" width="1" height="768" fill="#8e8e8e"/>
<rect x="1275" y="155" width="1" height="768" fill="#8e8e8e"/>
<rect x="1346" y="155" width="1" height="768" fill="#8e8e8e"/>
<rect x="1417" y="155" width="1" height="768" fill="#8e8e8e"/>
<rect x="1489" y="155" width="1" height="768" fill="#8e8e8e"/>
<rect x="1560" y="155" width="1" height="768" fill="#8e8e8e"/>
<rect x="634" y="159.0" width="959" height="19" fill="#00ff00"/>
<rect x="634" y="181.0" width="959" height="3" fill="#123a12"/>
<rect x="634" y="182.0" width="959" height="1" fill="#52c852"/>
<rect x="634" y="222.0" width="959" height="3" fill="#123a12"/>
<rect x="634" y="223.0" width="959" height="1" fill="#52c852"/>
<rect x="666.7" y="205.0" width="1.6" height="18" fill="#35e035"/>
<rect x="934.0" y="205.0" width="1.6" height="18" fill="#35e035"/>
<rect x="1204.6" y="205.0" width="1.6" height="18" fill="#35e035"/>
<rect x="1476.7" y="205.0" width="1.6" height="18" fill="#35e035"/>
<path d="M634.0 228.5H666.5M634.0 246.5H666.5M668.5 228.5H933.8M668.5 246.5H933.8M935.8 228.5H1204.4M935.8 246.5H1204.4M1206.4 228.5H1476.5M1206.4 246.5H1476.5M1478.5 228.5H1593.0M1478.5 246.5H1593.0M666.5 228.5V246.5M668.5 228.5V246.5M933.8 228.5V246.5M935.8 228.5V246.5M1204.4 228.5V246.5M1206.4 228.5V246.5M1476.5 228.5V246.5M1478.5 228.5V246.5" stroke="#1e2a1e" stroke-width="3" fill="none" shape-rendering="auto"/>
<path d="M634.0 228.5H666.5M634.0 246.5H666.5M668.5 228.5H933.8M668.5 246.5H933.8M935.8 228.5H1204.4M935.8 246.5H1204.4M1206.4 228.5H1476.5M1206.4 246.5H1476.5M1478.5 228.5H1593.0M1478.5 246.5H1593.0M666.5 228.5V246.5M668.5 228.5V246.5M933.8 228.5V246.5M935.8 228.5V246.5M1204.4 228.5V246.5M1206.4 228.5V246.5M1476.5 228.5V246.5M1478.5 228.5V246.5" stroke="#b4dcb4" stroke-width="1" fill="none"/>
<path d="M634 269.5H691.9V251.5H699.0V269.5H713.3V251.5H720.4V269.5H749.0V251.5H756.2V269.5H763.4V251.5H770.5V269.5H777.6V251.5H784.8V269.5H799.1V251.5H813.4V269.5H820.5V251.5H827.7V269.5H834.9V251.5H842.0V269.5H856.3V251.5H863.5V269.5H877.8V251.5H884.9V269.5H941.4V251.5H955.7V269.5H998.6V251.5H1005.8V269.5H1027.2V251.5H1034.3V269.5H1048.7V251.5H1055.8V269.5H1063.0V251.5H1070.1V269.5H1077.2V251.5H1105.8V269.5H1113.0V251.5H1120.2V269.5H1163.0V251.5H1219.6V269.5H1248.2V251.5H1255.3V269.5H1269.6V251.5H1276.8V269.5H1305.4V251.5H1312.5V269.5H1326.8V251.5H1341.1V269.5H1348.2V251.5H1355.4V269.5H1362.6V251.5H1376.9V269.5H1412.6V251.5H1419.8V269.5H1434.1V251.5H1491.4V269.5H1498.5V251.5H1512.8V269.5H1534.2V251.5H1570.0V269.5H1593" stroke="#123a12" stroke-width="3" fill="none" shape-rendering="auto"/>
<path d="M634 269.5H691.9V251.5H699.0V269.5H713.3V251.5H720.4V269.5H749.0V251.5H756.2V269.5H763.4V251.5H770.5V269.5H777.6V251.5H784.8V269.5H799.1V251.5H813.4V269.5H820.5V251.5H827.7V269.5H834.9V251.5H842.0V269.5H856.3V251.5H863.5V269.5H877.8V251.5H884.9V269.5H941.4V251.5H955.7V269.5H998.6V251.5H1005.8V269.5H1027.2V251.5H1034.3V269.5H1048.7V251.5H1055.8V269.5H1063.0V251.5H1070.1V269.5H1077.2V251.5H1105.8V269.5H1113.0V251.5H1120.2V269.5H1163.0V251.5H1219.6V269.5H1248.2V251.5H1255.3V269.5H1269.6V251.5H1276.8V269.5H1305.4V251.5H1312.5V269.5H1326.8V251.5H1341.1V269.5H1348.2V251.5H1355.4V269.5H1362.6V251.5H1376.9V269.5H1412.6V251.5H1419.8V269.5H1434.1V251.5H1491.4V269.5H1498.5V251.5H1512.8V269.5H1534.2V251.5H1570.0V269.5H1593" stroke="#52c852" stroke-width="1" fill="none"/>
<path d="M634 274.5H670.4V292.5H674.0V274.5H677.5V292.5H681.1V274.5H684.7V292.5H688.3V274.5H691.9V292.5H695.4V274.5H699.0V292.5H702.6V274.5H706.1V292.5H709.7V274.5H713.3V292.5H716.9V274.5H720.4V292.5H724.0V274.5H727.6V292.5H731.2V274.5H734.8V292.5H738.3V274.5H741.9V292.5H745.5V274.5H749.0V292.5H752.6V274.5H756.2V292.5H759.8V274.5H763.4V292.5H766.9V274.5H770.5V292.5H774.1V274.5H777.6V292.5H781.2V274.5H784.8V292.5H788.4V274.5H792.0V292.5H795.5V274.5H799.1V292.5H802.7V274.5H806.2V292.5H809.8V274.5H813.4V292.5H817.0V274.5H820.5V292.5H824.1V274.5H827.7V292.5H831.3V274.5H834.9V292.5H838.4V274.5H842.0V292.5H845.6V274.5H849.1V292.5H852.7V274.5H856.3V292.5H859.9V274.5H863.5V292.5H867.0V274.5H870.6V292.5H874.2V274.5H877.8V292.5H881.3V274.5H884.9V292.5H888.5V274.5H892.0V292.5H895.6V274.5H941.4V292.5H945.0V274.5H948.5V292.5H952.1V274.5H955.7V292.5H959.3V274.5H962.9V292.5H966.4V274.5H970.0V292.5H973.6V274.5H977.1V292.5H980.7V274.5H984.3V292.5H987.9V274.5H991.4V292.5H995.0V274.5H998.6V292.5H1002.2V274.5H1005.8V292.5H1009.3V274.5H1012.9V292.5H1016.5V274.5H1020.0V292.5H1023.6V274.5H1027.2V292.5H1030.8V274.5H1034.3V292.5H1037.9V274.5H1041.5V292.5H1045.1V274.5H1048.7V292.5H1052.2V274.5H1055.8V292.5H1059.4V274.5H1063.0V292.5H1066.5V274.5H1070.1V292.5H1073.7V274.5H1077.2V292.5H1080.8V274.5H1084.4V292.5H1088.0V274.5H1091.5V292.5H1095.1V274.5H1098.7V292.5H1102.3V274.5H1105.8V292.5H1109.4V274.5H1113.0V292.5H1116.6V274.5H1120.2V292.5H1123.7V274.5H1127.3V292.5H1130.9V274.5H1134.5V292.5H1138.0V274.5H1141.6V292.5H1145.2V274.5H1148.8V292.5H1152.3V274.5H1155.9V292.5H1159.5V274.5H1163.0V292.5H1166.6V274.5H1212.4V292.5H1216.0V274.5H1219.6V292.5H1223.1V274.5H1226.7V292.5H1230.3V274.5H1233.9V292.5H1237.4V274.5H1241.0V292.5H1244.6V274.5H1248.2V292.5H1251.7V274.5H1255.3V292.5H1258.9V274.5H1262.5V292.5H1266.0V274.5H1269.6V292.5H1273.2V274.5H1276.8V292.5H1280.3V274.5H1283.9V292.5H1287.5V274.5H1291.1V292.5H1294.6V274.5H1298.2V292.5H1301.8V274.5H1305.4V292.5H1308.9V274.5H1312.5V292.5H1316.1V274.5H1319.7V292.5H1323.2V274.5H1326.8V292.5H1330.4V274.5H1334.0V292.5H1337.5V274.5H1341.1V292.5H1344.7V274.5H1348.2V292.5H1351.8V274.5H1355.4V292.5H1359.0V274.5H1362.6V292.5H1366.1V274.5H1369.7V292.5H1373.3V274.5H1376.9V292.5H1380.4V274.5H1384.0V292.5H1387.6V274.5H1391.2V292.5H1394.7V274.5H1398.3V292.5H1401.9V274.5H1405.5V292.5H1409.0V274.5H1412.6V292.5H1416.2V274.5H1419.8V292.5H1423.3V274.5H1426.9V292.5H1430.5V274.5H1434.1V292.5H1437.6V274.5H1484.2V292.5H1487.8V274.5H1491.4V292.5H1494.9V274.5H1498.5V292.5H1502.1V274.5H1505.7V292.5H1509.2V274.5H1512.8V292.5H1516.4V274.5H1520.0V292.5H1523.5V274.5H1527.1V292.5H1530.7V274.5H1534.2V292.5H1537.8V274.5H1541.4V292.5H1545.0V274.5H1548.5V292.5H1552.1V274.5H1555.7V292.5H1559.3V274.5H1562.9V292.5H1566.4V274.5H1570.0V292.5H1573.6V274.5H1577.2V292.5H1580.7V274.5H1584.3V292.5H1587.9V274.5H1591.5V292.5H1593" stroke="#123a12" stroke-width="3" fill="none" shape-rendering="auto"/>
<path d="M634 274.5H670.4V292.5H674.0V274.5H677.5V292.5H681.1V274.5H684.7V292.5H688.3V274.5H691.9V292.5H695.4V274.5H699.0V292.5H702.6V274.5H706.1V292.5H709.7V274.5H713.3V292.5H716.9V274.5H720.4V292.5H724.0V274.5H727.6V292.5H731.2V274.5H734.8V292.5H738.3V274.5H741.9V292.5H745.5V274.5H749.0V292.5H752.6V274.5H756.2V292.5H759.8V274.5H763.4V292.5H766.9V274.5H770.5V292.5H774.1V274.5H777.6V292.5H781.2V274.5H784.8V292.5H788.4V274.5H792.0V292.5H795.5V274.5H799.1V292.5H802.7V274.5H806.2V292.5H809.8V274.5H813.4V292.5H817.0V274.5H820.5V292.5H824.1V274.5H827.7V292.5H831.3V274.5H834.9V292.5H838.4V274.5H842.0V292.5H845.6V274.5H849.1V292.5H852.7V274.5H856.3V292.5H859.9V274.5H863.5V292.5H867.0V274.5H870.6V292.5H874.2V274.5H877.8V292.5H881.3V274.5H884.9V292.5H888.5V274.5H892.0V292.5H895.6V274.5H941.4V292.5H945.0V274.5H948.5V292.5H952.1V274.5H955.7V292.5H959.3V274.5H962.9V292.5H966.4V274.5H970.0V292.5H973.6V274.5H977.1V292.5H980.7V274.5H984.3V292.5H987.9V274.5H991.4V292.5H995.0V274.5H998.6V292.5H1002.2V274.5H1005.8V292.5H1009.3V274.5H1012.9V292.5H1016.5V274.5H1020.0V292.5H1023.6V274.5H1027.2V292.5H1030.8V274.5H1034.3V292.5H1037.9V274.5H1041.5V292.5H1045.1V274.5H1048.7V292.5H1052.2V274.5H1055.8V292.5H1059.4V274.5H1063.0V292.5H1066.5V274.5H1070.1V292.5H1073.7V274.5H1077.2V292.5H1080.8V274.5H1084.4V292.5H1088.0V274.5H1091.5V292.5H1095.1V274.5H1098.7V292.5H1102.3V274.5H1105.8V292.5H1109.4V274.5H1113.0V292.5H1116.6V274.5H1120.2V292.5H1123.7V274.5H1127.3V292.5H1130.9V274.5H1134.5V292.5H1138.0V274.5H1141.6V292.5H1145.2V274.5H1148.8V292.5H1152.3V274.5H1155.9V292.5H1159.5V274.5H1163.0V292.5H1166.6V274.5H1212.4V292.5H1216.0V274.5H1219.6V292.5H1223.1V274.5H1226.7V292.5H1230.3V274.5H1233.9V292.5H1237.4V274.5H1241.0V292.5H1244.6V274.5H1248.2V292.5H1251.7V274.5H1255.3V292.5H1258.9V274.5H1262.5V292.5H1266.0V274.5H1269.6V292.5H1273.2V274.5H1276.8V292.5H1280.3V274.5H1283.9V292.5H1287.5V274.5H1291.1V292.5H1294.6V274.5H1298.2V292.5H1301.8V274.5H1305.4V292.5H1308.9V274.5H1312.5V292.5H1316.1V274.5H1319.7V292.5H1323.2V274.5H1326.8V292.5H1330.4V274.5H1334.0V292.5H1337.5V274.5H1341.1V292.5H1344.7V274.5H1348.2V292.5H1351.8V274.5H1355.4V292.5H1359.0V274.5H1362.6V292.5H1366.1V274.5H1369.7V292.5H1373.3V274.5H1376.9V292.5H1380.4V274.5H1384.0V292.5H1387.6V274.5H1391.2V292.5H1394.7V274.5H1398.3V292.5H1401.9V274.5H1405.5V292.5H1409.0V274.5H1412.6V292.5H1416.2V274.5H1419.8V292.5H1423.3V274.5H1426.9V292.5H1430.5V274.5H1434.1V292.5H1437.6V274.5H1484.2V292.5H1487.8V274.5H1491.4V292.5H1494.9V274.5H1498.5V292.5H1502.1V274.5H1505.7V292.5H1509.2V274.5H1512.8V292.5H1516.4V274.5H1520.0V292.5H1523.5V274.5H1527.1V292.5H1530.7V274.5H1534.2V292.5H1537.8V274.5H1541.4V292.5H1545.0V274.5H1548.5V292.5H1552.1V274.5H1555.7V292.5H1559.3V274.5H1562.9V292.5H1566.4V274.5H1570.0V292.5H1573.6V274.5H1577.2V292.5H1580.7V274.5H1584.3V292.5H1587.9V274.5H1591.5V292.5H1593" stroke="#52c852" stroke-width="1" fill="none"/>
<path d="M634 297.5H670.4V315.5H899.0V297.5H941.4V315.5H1170.0V297.5H1212.4V315.5H1441.0V297.5H1484.2V315.5H1593" stroke="#123a12" stroke-width="3" fill="none" shape-rendering="auto"/>
<path d="M634 297.5H670.4V315.5H899.0V297.5H941.4V315.5H1170.0V297.5H1212.4V315.5H1441.0V297.5H1484.2V315.5H1593" stroke="#52c852" stroke-width="1" fill="none"/>
<rect x="634" y="337.0" width="959" height="3" fill="#123a12"/>
<rect x="634" y="338.0" width="959" height="1" fill="#52c852"/>
<rect x="634" y="360.0" width="959" height="3" fill="#123a12"/>
<rect x="634" y="361.0" width="959" height="1" fill="#52c852"/>
<rect x="898.4" y="343.0" width="1.6" height="18" fill="#35e035"/>
<rect x="1169.6" y="343.0" width="1.6" height="18" fill="#35e035"/>
<rect x="1441.5" y="343.0" width="1.6" height="18" fill="#35e035"/>
<path d="M634.0 366.5H1593.0M634.0 384.5H1593.0" stroke="#1e2a1e" stroke-width="3" fill="none" shape-rendering="auto"/>
<path d="M634.0 366.5H1593.0M634.0 384.5H1593.0" stroke="#b4dcb4" stroke-width="1" fill="none"/>
<rect x="634.0" y="366.0" width="32.0" height="19" fill="#b4ffb4"/>
<rect x="899.0" y="366.0" width="37.0" height="19" fill="#b4ffb4"/>
<rect x="1169.2" y="366.0" width="37.8" height="19" fill="#b4ffb4"/>
<rect x="1441.3" y="366.0" width="37.7" height="19" fill="#b4ffb4"/>
<path d="M898.5 368.0 Q900.5 375.5 898.5 383.0 Z" fill="#000"/>
<path d="M1168.7 368.0 Q1170.7 375.5 1168.7 383.0 Z" fill="#000"/>
<path d="M1440.8 368.0 Q1442.8 375.5 1440.8 383.0 Z" fill="#000"/>
<rect x="634" y="406.0" width="959" height="3" fill="#123a12"/>
<rect x="634" y="407.0" width="959" height="1" fill="#52c852"/>
<path d="M634 430.5H959.3V412.5H966.4V430.5H980.7V412.5H987.9V430.5H1016.5V412.5H1023.6V430.5H1030.8V412.5H1037.9V430.5H1045.1V412.5H1052.2V430.5H1066.5V412.5H1080.8V430.5H1088.0V412.5H1095.1V430.5H1102.3V412.5H1109.4V430.5H1123.7V412.5H1130.9V430.5H1145.2V412.5H1152.3V430.5H1166.6V412.5H1223.1V430.5H1266.0V412.5H1273.2V430.5H1294.6V412.5H1301.8V430.5H1316.1V412.5H1323.2V430.5H1330.4V412.5H1337.5V430.5H1344.7V412.5H1373.3V430.5H1380.4V412.5H1387.6V430.5H1430.5V412.5H1487.8V430.5H1516.4V412.5H1523.5V430.5H1537.8V412.5H1545.0V430.5H1573.6V412.5H1580.7V430.5H1593" stroke="#123a12" stroke-width="3" fill="none" shape-rendering="auto"/>
<path d="M634 430.5H959.3V412.5H966.4V430.5H980.7V412.5H987.9V430.5H1016.5V412.5H1023.6V430.5H1030.8V412.5H1037.9V430.5H1045.1V412.5H1052.2V430.5H1066.5V412.5H1080.8V430.5H1088.0V412.5H1095.1V430.5H1102.3V412.5H1109.4V430.5H1123.7V412.5H1130.9V430.5H1145.2V412.5H1152.3V430.5H1166.6V412.5H1223.1V430.5H1266.0V412.5H1273.2V430.5H1294.6V412.5H1301.8V430.5H1316.1V412.5H1323.2V430.5H1330.4V412.5H1337.5V430.5H1344.7V412.5H1373.3V430.5H1380.4V412.5H1387.6V430.5H1430.5V412.5H1487.8V430.5H1516.4V412.5H1523.5V430.5H1537.8V412.5H1545.0V430.5H1573.6V412.5H1580.7V430.5H1593" stroke="#52c852" stroke-width="1" fill="none"/>
<path d="M634.0 435.5H965.4M634.0 453.5H965.4M967.4 435.5H972.6M967.4 453.5H972.6M974.6 435.5H979.7M974.6 453.5H979.7M981.7 435.5H986.9M981.7 453.5H986.9M988.9 435.5H994.0M988.9 453.5H994.0M996.0 435.5H1001.2M996.0 453.5H1001.2M1003.2 435.5H1008.3M1003.2 453.5H1008.3M1010.3 435.5H1015.5M1010.3 453.5H1015.5M1017.5 435.5H1022.6M1017.5 453.5H1022.6M1024.6 435.5H1029.8M1024.6 453.5H1029.8M1031.8 435.5H1036.9M1031.8 453.5H1036.9M1038.9 435.5H1044.1M1038.9 453.5H1044.1M1046.1 435.5H1051.2M1046.1 453.5H1051.2M1053.2 435.5H1058.4M1053.2 453.5H1058.4M1060.4 435.5H1065.5M1060.4 453.5H1065.5M1067.5 435.5H1072.7M1067.5 453.5H1072.7M1074.7 435.5H1079.8M1074.7 453.5H1079.8M1081.8 435.5H1087.0M1081.8 453.5H1087.0M1089.0 435.5H1094.1M1089.0 453.5H1094.1M1096.1 435.5H1101.3M1096.1 453.5H1101.3M1103.3 435.5H1108.4M1103.3 453.5H1108.4M1110.4 435.5H1115.6M1110.4 453.5H1115.6M1117.6 435.5H1122.7M1117.6 453.5H1122.7M1124.7 435.5H1129.9M1124.7 453.5H1129.9M1131.9 435.5H1137.0M1131.9 453.5H1137.0M1139.0 435.5H1144.2M1139.0 453.5H1144.2M1146.2 435.5H1151.3M1146.2 453.5H1151.3M1153.3 435.5H1158.5M1153.3 453.5H1158.5M1160.5 435.5H1165.6M1160.5 453.5H1165.6M1167.6 435.5H1215.0M1167.6 453.5H1215.0M1217.0 435.5H1222.1M1217.0 453.5H1222.1M1224.1 435.5H1229.3M1224.1 453.5H1229.3M1231.3 435.5H1236.4M1231.3 453.5H1236.4M1238.4 435.5H1243.6M1238.4 453.5H1243.6M1245.6 435.5H1250.7M1245.6 453.5H1250.7M1252.7 435.5H1257.9M1252.7 453.5H1257.9M1259.9 435.5H1265.0M1259.9 453.5H1265.0M1267.0 435.5H1272.2M1267.0 453.5H1272.2M1274.2 435.5H1279.3M1274.2 453.5H1279.3M1281.3 435.5H1286.5M1281.3 453.5H1286.5M1288.5 435.5H1293.6M1288.5 453.5H1293.6M1295.6 435.5H1300.8M1295.6 453.5H1300.8M1302.8 435.5H1307.9M1302.8 453.5H1307.9M1309.9 435.5H1315.1M1309.9 453.5H1315.1M1317.1 435.5H1322.2M1317.1 453.5H1322.2M1324.2 435.5H1329.4M1324.2 453.5H1329.4M1331.4 435.5H1336.5M1331.4 453.5H1336.5M1338.5 435.5H1343.7M1338.5 453.5H1343.7M1345.7 435.5H1350.8M1345.7 453.5H1350.8M1352.8 435.5H1358.0M1352.8 453.5H1358.0M1360.0 435.5H1365.1M1360.0 453.5H1365.1M1367.1 435.5H1372.3M1367.1 453.5H1372.3M1374.3 435.5H1379.4M1374.3 453.5H1379.4M1381.4 435.5H1386.6M1381.4 453.5H1386.6M1388.6 435.5H1393.7M1388.6 453.5H1393.7M1395.7 435.5H1400.9M1395.7 453.5H1400.9M1402.9 435.5H1408.0M1402.9 453.5H1408.0M1410.0 435.5H1415.2M1410.0 453.5H1415.2M1417.2 435.5H1422.3M1417.2 453.5H1422.3M1424.3 435.5H1429.5M1424.3 453.5H1429.5M1431.5 435.5H1436.6M1431.5 453.5H1436.6M1438.6 435.5H1486.8M1438.6 453.5H1486.8M1488.8 435.5H1493.9M1488.8 453.5H1493.9M1495.9 435.5H1501.1M1495.9 453.5H1501.1M1503.1 435.5H1508.2M1503.1 453.5H1508.2M1510.2 435.5H1515.4M1510.2 453.5H1515.4M1517.4 435.5H1522.5M1517.4 453.5H1522.5M1524.5 435.5H1529.7M1524.5 453.5H1529.7M1531.7 435.5H1536.8M1531.7 453.5H1536.8M1538.8 435.5H1544.0M1538.8 453.5H1544.0M1546.0 435.5H1551.1M1546.0 453.5H1551.1M1553.1 435.5H1558.3M1553.1 453.5H1558.3M1560.3 435.5H1565.4M1560.3 453.5H1565.4M1567.4 435.5H1572.6M1567.4 453.5H1572.6M1574.6 435.5H1579.7M1574.6 453.5H1579.7M1581.7 435.5H1586.9M1581.7 453.5H1586.9M1588.9 435.5H1593.0M1588.9 453.5H1593.0M965.4 435.5V453.5M967.4 435.5V453.5M972.6 435.5V453.5M974.6 435.5V453.5M979.7 435.5V453.5M981.7 435.5V453.5M986.9 435.5V453.5M988.9 435.5V453.5M994.0 435.5V453.5M996.0 435.5V453.5M1001.2 435.5V453.5M1003.2 435.5V453.5M1008.3 435.5V453.5M1010.3 435.5V453.5M1015.5 435.5V453.5M1017.5 435.5V453.5M1022.6 435.5V453.5M1024.6 435.5V453.5M1029.8 435.5V453.5M1031.8 435.5V453.5M1036.9 435.5V453.5M1038.9 435.5V453.5M1044.1 435.5V453.5M1046.1 435.5V453.5M1051.2 435.5V453.5M1053.2 435.5V453.5M1058.4 435.5V453.5M1060.4 435.5V453.5M1065.5 435.5V453.5M1067.5 435.5V453.5M1072.7 435.5V453.5M1074.7 435.5V453.5M1079.8 435.5V453.5M1081.8 435.5V453.5M1087.0 435.5V453.5M1089.0 435.5V453.5M1094.1 435.5V453.5M1096.1 435.5V453.5M1101.3 435.5V453.5M1103.3 435.5V453.5M1108.4 435.5V453.5M1110.4 435.5V453.5M1115.6 435.5V453.5M1117.6 435.5V453.5M1122.7 435.5V453.5M1124.7 435.5V453.5M1129.9 435.5V453.5M1131.9 435.5V453.5M1137.0 435.5V453.5M1139.0 435.5V453.5M1144.2 435.5V453.5M1146.2 435.5V453.5M1151.3 435.5V453.5M1153.3 435.5V453.5M1158.5 435.5V453.5M1160.5 435.5V453.5M1165.6 435.5V453.5M1167.6 435.5V453.5M1215.0 435.5V453.5M1217.0 435.5V453.5M1222.1 435.5V453.5M1224.1 435.5V453.5M1229.3 435.5V453.5M1231.3 435.5V453.5M1236.4 435.5V453.5M1238.4 435.5V453.5M1243.6 435.5V453.5M1245.6 435.5V453.5M1250.7 435.5V453.5M1252.7 435.5V453.5M1257.9 435.5V453.5M1259.9 435.5V453.5M1265.0 435.5V453.5M1267.0 435.5V453.5M1272.2 435.5V453.5M1274.2 435.5V453.5M1279.3 435.5V453.5M1281.3 435.5V453.5M1286.5 435.5V453.5M1288.5 435.5V453.5M1293.6 435.5V453.5M1295.6 435.5V453.5M1300.8 435.5V453.5M1302.8 435.5V453.5M1307.9 435.5V453.5M1309.9 435.5V453.5M1315.1 435.5V453.5M1317.1 435.5V453.5M1322.2 435.5V453.5M1324.2 435.5V453.5M1329.4 435.5V453.5M1331.4 435.5V453.5M1336.5 435.5V453.5M1338.5 435.5V453.5M1343.7 435.5V453.5M1345.7 435.5V453.5M1350.8 435.5V453.5M1352.8 435.5V453.5M1358.0 435.5V453.5M1360.0 435.5V453.5M1365.1 435.5V453.5M1367.1 435.5V453.5M1372.3 435.5V453.5M1374.3 435.5V453.5M1379.4 435.5V453.5M1381.4 435.5V453.5M1386.6 435.5V453.5M1388.6 435.5V453.5M1393.7 435.5V453.5M1395.7 435.5V453.5M1400.9 435.5V453.5M1402.9 435.5V453.5M1408.0 435.5V453.5M1410.0 435.5V453.5M1415.2 435.5V453.5M1417.2 435.5V453.5M1422.3 435.5V453.5M1424.3 435.5V453.5M1429.5 435.5V453.5M1431.5 435.5V453.5M1436.6 435.5V453.5M1438.6 435.5V453.5M1486.8 435.5V453.5M1488.8 435.5V453.5M1493.9 435.5V453.5M1495.9 435.5V453.5M1501.1 435.5V453.5M1503.1 435.5V453.5M1508.2 435.5V453.5M1510.2 435.5V453.5M1515.4 435.5V453.5M1517.4 435.5V453.5M1522.5 435.5V453.5M1524.5 435.5V453.5M1529.7 435.5V453.5M1531.7 435.5V453.5M1536.8 435.5V453.5M1538.8 435.5V453.5M1544.0 435.5V453.5M1546.0 435.5V453.5M1551.1 435.5V453.5M1553.1 435.5V453.5M1558.3 435.5V453.5M1560.3 435.5V453.5M1565.4 435.5V453.5M1567.4 435.5V453.5M1572.6 435.5V453.5M1574.6 435.5V453.5M1579.7 435.5V453.5M1581.7 435.5V453.5M1586.9 435.5V453.5M1588.9 435.5V453.5" stroke="#1e2a1e" stroke-width="3" fill="none" shape-rendering="auto"/>
<path d="M634.0 435.5H965.4M634.0 453.5H965.4M967.4 435.5H972.6M967.4 453.5H972.6M974.6 435.5H979.7M974.6 453.5H979.7M981.7 435.5H986.9M981.7 453.5H986.9M988.9 435.5H994.0M988.9 453.5H994.0M996.0 435.5H1001.2M996.0 453.5H1001.2M1003.2 435.5H1008.3M1003.2 453.5H1008.3M1010.3 435.5H1015.5M1010.3 453.5H1015.5M1017.5 435.5H1022.6M1017.5 453.5H1022.6M1024.6 435.5H1029.8M1024.6 453.5H1029.8M1031.8 435.5H1036.9M1031.8 453.5H1036.9M1038.9 435.5H1044.1M1038.9 453.5H1044.1M1046.1 435.5H1051.2M1046.1 453.5H1051.2M1053.2 435.5H1058.4M1053.2 453.5H1058.4M1060.4 435.5H1065.5M1060.4 453.5H1065.5M1067.5 435.5H1072.7M1067.5 453.5H1072.7M1074.7 435.5H1079.8M1074.7 453.5H1079.8M1081.8 435.5H1087.0M1081.8 453.5H1087.0M1089.0 435.5H1094.1M1089.0 453.5H1094.1M1096.1 435.5H1101.3M1096.1 453.5H1101.3M1103.3 435.5H1108.4M1103.3 453.5H1108.4M1110.4 435.5H1115.6M1110.4 453.5H1115.6M1117.6 435.5H1122.7M1117.6 453.5H1122.7M1124.7 435.5H1129.9M1124.7 453.5H1129.9M1131.9 435.5H1137.0M1131.9 453.5H1137.0M1139.0 435.5H1144.2M1139.0 453.5H1144.2M1146.2 435.5H1151.3M1146.2 453.5H1151.3M1153.3 435.5H1158.5M1153.3 453.5H1158.5M1160.5 435.5H1165.6M1160.5 453.5H1165.6M1167.6 435.5H1215.0M1167.6 453.5H1215.0M1217.0 435.5H1222.1M1217.0 453.5H1222.1M1224.1 435.5H1229.3M1224.1 453.5H1229.3M1231.3 435.5H1236.4M1231.3 453.5H1236.4M1238.4 435.5H1243.6M1238.4 453.5H1243.6M1245.6 435.5H1250.7M1245.6 453.5H1250.7M1252.7 435.5H1257.9M1252.7 453.5H1257.9M1259.9 435.5H1265.0M1259.9 453.5H1265.0M1267.0 435.5H1272.2M1267.0 453.5H1272.2M1274.2 435.5H1279.3M1274.2 453.5H1279.3M1281.3 435.5H1286.5M1281.3 453.5H1286.5M1288.5 435.5H1293.6M1288.5 453.5H1293.6M1295.6 435.5H1300.8M1295.6 453.5H1300.8M1302.8 435.5H1307.9M1302.8 453.5H1307.9M1309.9 435.5H1315.1M1309.9 453.5H1315.1M1317.1 435.5H1322.2M1317.1 453.5H1322.2M1324.2 435.5H1329.4M1324.2 453.5H1329.4M1331.4 435.5H1336.5M1331.4 453.5H1336.5M1338.5 435.5H1343.7M1338.5 453.5H1343.7M1345.7 435.5H1350.8M1345.7 453.5H1350.8M1352.8 435.5H1358.0M1352.8 453.5H1358.0M1360.0 435.5H1365.1M1360.0 453.5H1365.1M1367.1 435.5H1372.3M1367.1 453.5H1372.3M1374.3 435.5H1379.4M1374.3 453.5H1379.4M1381.4 435.5H1386.6M1381.4 453.5H1386.6M1388.6 435.5H1393.7M1388.6 453.5H1393.7M1395.7 435.5H1400.9M1395.7 453.5H1400.9M1402.9 435.5H1408.0M1402.9 453.5H1408.0M1410.0 435.5H1415.2M1410.0 453.5H1415.2M1417.2 435.5H1422.3M1417.2 453.5H1422.3M1424.3 435.5H1429.5M1424.3 453.5H1429.5M1431.5 435.5H1436.6M1431.5 453.5H1436.6M1438.6 435.5H1486.8M1438.6 453.5H1486.8M1488.8 435.5H1493.9M1488.8 453.5H1493.9M1495.9 435.5H1501.1M1495.9 453.5H1501.1M1503.1 435.5H1508.2M1503.1 453.5H1508.2M1510.2 435.5H1515.4M1510.2 453.5H1515.4M1517.4 435.5H1522.5M1517.4 453.5H1522.5M1524.5 435.5H1529.7M1524.5 453.5H1529.7M1531.7 435.5H1536.8M1531.7 453.5H1536.8M1538.8 435.5H1544.0M1538.8 453.5H1544.0M1546.0 435.5H1551.1M1546.0 453.5H1551.1M1553.1 435.5H1558.3M1553.1 453.5H1558.3M1560.3 435.5H1565.4M1560.3 453.5H1565.4M1567.4 435.5H1572.6M1567.4 453.5H1572.6M1574.6 435.5H1579.7M1574.6 453.5H1579.7M1581.7 435.5H1586.9M1581.7 453.5H1586.9M1588.9 435.5H1593.0M1588.9 453.5H1593.0M965.4 435.5V453.5M967.4 435.5V453.5M972.6 435.5V453.5M974.6 435.5V453.5M979.7 435.5V453.5M981.7 435.5V453.5M986.9 435.5V453.5M988.9 435.5V453.5M994.0 435.5V453.5M996.0 435.5V453.5M1001.2 435.5V453.5M1003.2 435.5V453.5M1008.3 435.5V453.5M1010.3 435.5V453.5M1015.5 435.5V453.5M1017.5 435.5V453.5M1022.6 435.5V453.5M1024.6 435.5V453.5M1029.8 435.5V453.5M1031.8 435.5V453.5M1036.9 435.5V453.5M1038.9 435.5V453.5M1044.1 435.5V453.5M1046.1 435.5V453.5M1051.2 435.5V453.5M1053.2 435.5V453.5M1058.4 435.5V453.5M1060.4 435.5V453.5M1065.5 435.5V453.5M1067.5 435.5V453.5M1072.7 435.5V453.5M1074.7 435.5V453.5M1079.8 435.5V453.5M1081.8 435.5V453.5M1087.0 435.5V453.5M1089.0 435.5V453.5M1094.1 435.5V453.5M1096.1 435.5V453.5M1101.3 435.5V453.5M1103.3 435.5V453.5M1108.4 435.5V453.5M1110.4 435.5V453.5M1115.6 435.5V453.5M1117.6 435.5V453.5M1122.7 435.5V453.5M1124.7 435.5V453.5M1129.9 435.5V453.5M1131.9 435.5V453.5M1137.0 435.5V453.5M1139.0 435.5V453.5M1144.2 435.5V453.5M1146.2 435.5V453.5M1151.3 435.5V453.5M1153.3 435.5V453.5M1158.5 435.5V453.5M1160.5 435.5V453.5M1165.6 435.5V453.5M1167.6 435.5V453.5M1215.0 435.5V453.5M1217.0 435.5V453.5M1222.1 435.5V453.5M1224.1 435.5V453.5M1229.3 435.5V453.5M1231.3 435.5V453.5M1236.4 435.5V453.5M1238.4 435.5V453.5M1243.6 435.5V453.5M1245.6 435.5V453.5M1250.7 435.5V453.5M1252.7 435.5V453.5M1257.9 435.5V453.5M1259.9 435.5V453.5M1265.0 435.5V453.5M1267.0 435.5V453.5M1272.2 435.5V453.5M1274.2 435.5V453.5M1279.3 435.5V453.5M1281.3 435.5V453.5M1286.5 435.5V453.5M1288.5 435.5V453.5M1293.6 435.5V453.5M1295.6 435.5V453.5M1300.8 435.5V453.5M1302.8 435.5V453.5M1307.9 435.5V453.5M1309.9 435.5V453.5M1315.1 435.5V453.5M1317.1 435.5V453.5M1322.2 435.5V453.5M1324.2 435.5V453.5M1329.4 435.5V453.5M1331.4 435.5V453.5M1336.5 435.5V453.5M1338.5 435.5V453.5M1343.7 435.5V453.5M1345.7 435.5V453.5M1350.8 435.5V453.5M1352.8 435.5V453.5M1358.0 435.5V453.5M1360.0 435.5V453.5M1365.1 435.5V453.5M1367.1 435.5V453.5M1372.3 435.5V453.5M1374.3 435.5V453.5M1379.4 435.5V453.5M1381.4 435.5V453.5M1386.6 435.5V453.5M1388.6 435.5V453.5M1393.7 435.5V453.5M1395.7 435.5V453.5M1400.9 435.5V453.5M1402.9 435.5V453.5M1408.0 435.5V453.5M1410.0 435.5V453.5M1415.2 435.5V453.5M1417.2 435.5V453.5M1422.3 435.5V453.5M1424.3 435.5V453.5M1429.5 435.5V453.5M1431.5 435.5V453.5M1436.6 435.5V453.5M1438.6 435.5V453.5M1486.8 435.5V453.5M1488.8 435.5V453.5M1493.9 435.5V453.5M1495.9 435.5V453.5M1501.1 435.5V453.5M1503.1 435.5V453.5M1508.2 435.5V453.5M1510.2 435.5V453.5M1515.4 435.5V453.5M1517.4 435.5V453.5M1522.5 435.5V453.5M1524.5 435.5V453.5M1529.7 435.5V453.5M1531.7 435.5V453.5M1536.8 435.5V453.5M1538.8 435.5V453.5M1544.0 435.5V453.5M1546.0 435.5V453.5M1551.1 435.5V453.5M1553.1 435.5V453.5M1558.3 435.5V453.5M1560.3 435.5V453.5M1565.4 435.5V453.5M1567.4 435.5V453.5M1572.6 435.5V453.5M1574.6 435.5V453.5M1579.7 435.5V453.5M1581.7 435.5V453.5M1586.9 435.5V453.5M1588.9 435.5V453.5" stroke="#b4dcb4" stroke-width="1" fill="none"/>
<path d="M634.0 458.5H898.1M634.0 476.5H898.1M900.1 458.5H1169.1M900.1 476.5H1169.1M1171.1 458.5H1441.4M1171.1 476.5H1441.4M1443.4 458.5H1593.0M1443.4 476.5H1593.0M898.1 458.5V476.5M900.1 458.5V476.5M1169.1 458.5V476.5M1171.1 458.5V476.5M1441.4 458.5V476.5M1443.4 458.5V476.5" stroke="#1e2a1e" stroke-width="3" fill="none" shape-rendering="auto"/>
<path d="M634.0 458.5H898.1M634.0 476.5H898.1M900.1 458.5H1169.1M900.1 476.5H1169.1M1171.1 458.5H1441.4M1171.1 476.5H1441.4M1443.4 458.5H1593.0M1443.4 476.5H1593.0M898.1 458.5V476.5M900.1 458.5V476.5M1169.1 458.5V476.5M1171.1 458.5V476.5M1441.4 458.5V476.5M1443.4 458.5V476.5" stroke="#b4dcb4" stroke-width="1" fill="none"/>
<path d="M634.0 481.5H1169.1M634.0 499.5H1169.1M1171.1 481.5H1441.4M1171.1 499.5H1441.4M1443.4 481.5H1593.0M1443.4 499.5H1593.0M1169.1 481.5V499.5M1171.1 481.5V499.5M1441.4 481.5V499.5M1443.4 481.5V499.5" stroke="#1e2a1e" stroke-width="3" fill="none" shape-rendering="auto"/>
<path d="M634.0 481.5H1169.1M634.0 499.5H1169.1M1171.1 481.5H1441.4M1171.1 499.5H1441.4M1443.4 481.5H1593.0M1443.4 499.5H1593.0M1169.1 481.5V499.5M1171.1 481.5V499.5M1441.4 481.5V499.5M1443.4 481.5V499.5" stroke="#b4dcb4" stroke-width="1" fill="none"/>
<rect x="634" y="527.0" width="959" height="19" fill="#00ff00"/>
<rect x="634" y="549.0" width="959" height="3" fill="#123a12"/>
<rect x="634" y="550.0" width="959" height="1" fill="#52c852"/>
<path d="M634 591.5H691.9V573.5H699.0V591.5H713.3V573.5H720.4V591.5H749.0V573.5H756.2V591.5H763.4V573.5H770.5V591.5H777.6V573.5H784.8V591.5H799.1V573.5H813.4V591.5H820.5V573.5H827.7V591.5H834.9V573.5H842.0V591.5H856.3V573.5H863.5V591.5H877.8V573.5H884.9V591.5H941.4V573.5H955.7V591.5H998.6V573.5H1005.8V591.5H1027.2V573.5H1034.3V591.5H1048.7V573.5H1055.8V591.5H1063.0V573.5H1070.1V591.5H1077.2V573.5H1105.8V591.5H1113.0V573.5H1120.2V591.5H1163.0V573.5H1219.6V591.5H1248.2V573.5H1255.3V591.5H1269.6V573.5H1276.8V591.5H1305.4V573.5H1312.5V591.5H1326.8V573.5H1341.1V591.5H1348.2V573.5H1355.4V591.5H1362.6V573.5H1376.9V591.5H1412.6V573.5H1419.8V591.5H1434.1V573.5H1491.4V591.5H1498.5V573.5H1512.8V591.5H1534.2V573.5H1570.0V591.5H1593" stroke="#123a12" stroke-width="3" fill="none" shape-rendering="auto"/>
<path d="M634 591.5H691.9V573.5H699.0V591.5H713.3V573.5H720.4V591.5H749.0V573.5H756.2V591.5H763.4V573.5H770.5V591.5H777.6V573.5H784.8V591.5H799.1V573.5H813.4V591.5H820.5V573.5H827.7V591.5H834.9V573.5H842.0V591.5H856.3V573.5H863.5V591.5H877.8V573.5H884.9V591.5H941.4V573.5H955.7V591.5H998.6V573.5H1005.8V591.5H1027.2V573.5H1034.3V591.5H1048.7V573.5H1055.8V591.5H1063.0V573.5H1070.1V591.5H1077.2V573.5H1105.8V591.5H1113.0V573.5H1120.2V591.5H1163.0V573.5H1219.6V591.5H1248.2V573.5H1255.3V591.5H1269.6V573.5H1276.8V591.5H1305.4V573.5H1312.5V591.5H1326.8V573.5H1341.1V591.5H1348.2V573.5H1355.4V591.5H1362.6V573.5H1376.9V591.5H1412.6V573.5H1419.8V591.5H1434.1V573.5H1491.4V591.5H1498.5V573.5H1512.8V591.5H1534.2V573.5H1570.0V591.5H1593" stroke="#52c852" stroke-width="1" fill="none"/>
<path d="M634 596.5H670.4V614.5H899.0V596.5H941.4V614.5H1170.0V596.5H1212.4V614.5H1441.0V596.5H1484.2V614.5H1593" stroke="#123a12" stroke-width="3" fill="none" shape-rendering="auto"/>
<path d="M634 596.5H670.4V614.5H899.0V596.5H941.4V614.5H1170.0V596.5H1212.4V614.5H1441.0V596.5H1484.2V614.5H1593" stroke="#52c852" stroke-width="1" fill="none"/>
<rect x="634" y="636.0" width="959" height="3" fill="#123a12"/>
<rect x="634" y="637.0" width="959" height="1" fill="#52c852"/>
<path d="M634 642.5H670.4V660.5H674.0V642.5H677.5V660.5H681.1V642.5H684.7V660.5H688.3V642.5H691.9V660.5H695.4V642.5H699.0V660.5H702.6V642.5H706.1V660.5H709.7V642.5H713.3V660.5H716.9V642.5H720.4V660.5H724.0V642.5H727.6V660.5H731.2V642.5H734.8V660.5H738.3V642.5H741.9V660.5H745.5V642.5H749.0V660.5H752.6V642.5H756.2V660.5H759.8V642.5H763.4V660.5H766.9V642.5H770.5V660.5H774.1V642.5H777.6V660.5H781.2V642.5H784.8V660.5H788.4V642.5H792.0V660.5H795.5V642.5H799.1V660.5H802.7V642.5H806.2V660.5H809.8V642.5H813.4V660.5H817.0V642.5H820.5V660.5H824.1V642.5H827.7V660.5H831.3V642.5H834.9V660.5H838.4V642.5H842.0V660.5H845.6V642.5H849.1V660.5H852.7V642.5H856.3V660.5H859.9V642.5H863.5V660.5H867.0V642.5H870.6V660.5H874.2V642.5H877.8V660.5H881.3V642.5H884.9V660.5H888.5V642.5H892.0V660.5H895.6V642.5H941.4V660.5H945.0V642.5H948.5V660.5H952.1V642.5H955.7V660.5H959.3V642.5H962.9V660.5H966.4V642.5H970.0V660.5H973.6V642.5H977.1V660.5H980.7V642.5H984.3V660.5H987.9V642.5H991.4V660.5H995.0V642.5H998.6V660.5H1002.2V642.5H1005.8V660.5H1009.3V642.5H1012.9V660.5H1016.5V642.5H1020.0V660.5H1023.6V642.5H1027.2V660.5H1030.8V642.5H1034.3V660.5H1037.9V642.5H1041.5V660.5H1045.1V642.5H1048.7V660.5H1052.2V642.5H1055.8V660.5H1059.4V642.5H1063.0V660.5H1066.5V642.5H1070.1V660.5H1073.7V642.5H1077.2V660.5H1080.8V642.5H1084.4V660.5H1088.0V642.5H1091.5V660.5H1095.1V642.5H1098.7V660.5H1102.3V642.5H1105.8V660.5H1109.4V642.5H1113.0V660.5H1116.6V642.5H1120.2V660.5H1123.7V642.5H1127.3V660.5H1130.9V642.5H1134.5V660.5H1138.0V642.5H1141.6V660.5H1145.2V642.5H1148.8V660.5H1152.3V642.5H1155.9V660.5H1159.5V642.5H1163.0V660.5H1166.6V642.5H1212.4V660.5H1216.0V642.5H1219.6V660.5H1223.1V642.5H1226.7V660.5H1230.3V642.5H1233.9V660.5H1237.4V642.5H1241.0V660.5H1244.6V642.5H1248.2V660.5H1251.7V642.5H1255.3V660.5H1258.9V642.5H1262.5V660.5H1266.0V642.5H1269.6V660.5H1273.2V642.5H1276.8V660.5H1280.3V642.5H1283.9V660.5H1287.5V642.5H1291.1V660.5H1294.6V642.5H1298.2V660.5H1301.8V642.5H1305.4V660.5H1308.9V642.5H1312.5V660.5H1316.1V642.5H1319.7V660.5H1323.2V642.5H1326.8V660.5H1330.4V642.5H1334.0V660.5H1337.5V642.5H1341.1V660.5H1344.7V642.5H1348.2V660.5H1351.8V642.5H1355.4V660.5H1359.0V642.5H1362.6V660.5H1366.1V642.5H1369.7V660.5H1373.3V642.5H1376.9V660.5H1380.4V642.5H1384.0V660.5H1387.6V642.5H1391.2V660.5H1394.7V642.5H1398.3V660.5H1401.9V642.5H1405.5V660.5H1409.0V642.5H1412.6V660.5H1416.2V642.5H1419.8V660.5H1423.3V642.5H1426.9V660.5H1430.5V642.5H1434.1V660.5H1437.6V642.5H1484.2V660.5H1487.8V642.5H1491.4V660.5H1494.9V642.5H1498.5V660.5H1502.1V642.5H1505.7V660.5H1509.2V642.5H1512.8V660.5H1516.4V642.5H1520.0V660.5H1523.5V642.5H1527.1V660.5H1530.7V642.5H1534.2V660.5H1537.8V642.5H1541.4V660.5H1545.0V642.5H1548.5V660.5H1552.1V642.5H1555.7V660.5H1559.3V642.5H1562.9V660.5H1566.4V642.5H1570.0V660.5H1573.6V642.5H1577.2V660.5H1580.7V642.5H1584.3V660.5H1587.9V642.5H1591.5V660.5H1593" stroke="#123a12" stroke-width="3" fill="none" shape-rendering="auto"/>
<path d="M634 642.5H670.4V660.5H674.0V642.5H677.5V660.5H681.1V642.5H684.7V660.5H688.3V642.5H691.9V660.5H695.4V642.5H699.0V660.5H702.6V642.5H706.1V660.5H709.7V642.5H713.3V660.5H716.9V642.5H720.4V660.5H724.0V642.5H727.6V660.5H731.2V642.5H734.8V660.5H738.3V642.5H741.9V660.5H745.5V642.5H749.0V660.5H752.6V642.5H756.2V660.5H759.8V642.5H763.4V660.5H766.9V642.5H770.5V660.5H774.1V642.5H777.6V660.5H781.2V642.5H784.8V660.5H788.4V642.5H792.0V660.5H795.5V642.5H799.1V660.5H802.7V642.5H806.2V660.5H809.8V642.5H813.4V660.5H817.0V642.5H820.5V660.5H824.1V642.5H827.7V660.5H831.3V642.5H834.9V660.5H838.4V642.5H842.0V660.5H845.6V642.5H849.1V660.5H852.7V642.5H856.3V660.5H859.9V642.5H863.5V660.5H867.0V642.5H870.6V660.5H874.2V642.5H877.8V660.5H881.3V642.5H884.9V660.5H888.5V642.5H892.0V660.5H895.6V642.5H941.4V660.5H945.0V642.5H948.5V660.5H952.1V642.5H955.7V660.5H959.3V642.5H962.9V660.5H966.4V642.5H970.0V660.5H973.6V642.5H977.1V660.5H980.7V642.5H984.3V660.5H987.9V642.5H991.4V660.5H995.0V642.5H998.6V660.5H1002.2V642.5H1005.8V660.5H1009.3V642.5H1012.9V660.5H1016.5V642.5H1020.0V660.5H1023.6V642.5H1027.2V660.5H1030.8V642.5H1034.3V660.5H1037.9V642.5H1041.5V660.5H1045.1V642.5H1048.7V660.5H1052.2V642.5H1055.8V660.5H1059.4V642.5H1063.0V660.5H1066.5V642.5H1070.1V660.5H1073.7V642.5H1077.2V660.5H1080.8V642.5H1084.4V660.5H1088.0V642.5H1091.5V660.5H1095.1V642.5H1098.7V660.5H1102.3V642.5H1105.8V660.5H1109.4V642.5H1113.0V660.5H1116.6V642.5H1120.2V660.5H1123.7V642.5H1127.3V660.5H1130.9V642.5H1134.5V660.5H1138.0V642.5H1141.6V660.5H1145.2V642.5H1148.8V660.5H1152.3V642.5H1155.9V660.5H1159.5V642.5H1163.0V660.5H1166.6V642.5H1212.4V660.5H1216.0V642.5H1219.6V660.5H1223.1V642.5H1226.7V660.5H1230.3V642.5H1233.9V660.5H1237.4V642.5H1241.0V660.5H1244.6V642.5H1248.2V660.5H1251.7V642.5H1255.3V660.5H1258.9V642.5H1262.5V660.5H1266.0V642.5H1269.6V660.5H1273.2V642.5H1276.8V660.5H1280.3V642.5H1283.9V660.5H1287.5V642.5H1291.1V660.5H1294.6V642.5H1298.2V660.5H1301.8V642.5H1305.4V660.5H1308.9V642.5H1312.5V660.5H1316.1V642.5H1319.7V660.5H1323.2V642.5H1326.8V660.5H1330.4V642.5H1334.0V660.5H1337.5V642.5H1341.1V660.5H1344.7V642.5H1348.2V660.5H1351.8V642.5H1355.4V660.5H1359.0V642.5H1362.6V660.5H1366.1V642.5H1369.7V660.5H1373.3V642.5H1376.9V660.5H1380.4V642.5H1384.0V660.5H1387.6V642.5H1391.2V660.5H1394.7V642.5H1398.3V660.5H1401.9V642.5H1405.5V660.5H1409.0V642.5H1412.6V660.5H1416.2V642.5H1419.8V660.5H1423.3V642.5H1426.9V660.5H1430.5V642.5H1434.1V660.5H1437.6V642.5H1484.2V660.5H1487.8V642.5H1491.4V660.5H1494.9V642.5H1498.5V660.5H1502.1V642.5H1505.7V660.5H1509.2V642.5H1512.8V660.5H1516.4V642.5H1520.0V660.5H1523.5V642.5H1527.1V660.5H1530.7V642.5H1534.2V660.5H1537.8V642.5H1541.4V660.5H1545.0V642.5H1548.5V660.5H1552.1V642.5H1555.7V660.5H1559.3V642.5H1562.9V660.5H1566.4V642.5H1570.0V660.5H1573.6V642.5H1577.2V660.5H1580.7V642.5H1584.3V660.5H1587.9V642.5H1591.5V660.5H1593" stroke="#52c852" stroke-width="1" fill="none"/>
<path d="M634 683.5H959.3V665.5H966.4V683.5H980.7V665.5H987.9V683.5H1016.5V665.5H1023.6V683.5H1030.8V665.5H1037.9V683.5H1045.1V665.5H1052.2V683.5H1066.5V665.5H1080.8V683.5H1088.0V665.5H1095.1V683.5H1102.3V665.5H1109.4V683.5H1123.7V665.5H1130.9V683.5H1145.2V665.5H1152.3V683.5H1166.6V665.5H1223.1V683.5H1266.0V665.5H1273.2V683.5H1294.6V665.5H1301.8V683.5H1316.1V665.5H1323.2V683.5H1330.4V665.5H1337.5V683.5H1344.7V665.5H1373.3V683.5H1380.4V665.5H1387.6V683.5H1430.5V665.5H1487.8V683.5H1516.4V665.5H1523.5V683.5H1537.8V665.5H1545.0V683.5H1573.6V665.5H1580.7V683.5H1593" stroke="#123a12" stroke-width="3" fill="none" shape-rendering="auto"/>
<path d="M634 683.5H959.3V665.5H966.4V683.5H980.7V665.5H987.9V683.5H1016.5V665.5H1023.6V683.5H1030.8V665.5H1037.9V683.5H1045.1V665.5H1052.2V683.5H1066.5V665.5H1080.8V683.5H1088.0V665.5H1095.1V683.5H1102.3V665.5H1109.4V683.5H1123.7V665.5H1130.9V683.5H1145.2V665.5H1152.3V683.5H1166.6V665.5H1223.1V683.5H1266.0V665.5H1273.2V683.5H1294.6V665.5H1301.8V683.5H1316.1V665.5H1323.2V683.5H1330.4V665.5H1337.5V683.5H1344.7V665.5H1373.3V683.5H1380.4V665.5H1387.6V683.5H1430.5V665.5H1487.8V683.5H1516.4V665.5H1523.5V683.5H1537.8V665.5H1545.0V683.5H1573.6V665.5H1580.7V683.5H1593" stroke="#52c852" stroke-width="1" fill="none"/>
<path d="M634.0 688.5H1214.2M634.0 706.5H1214.2M1216.2 688.5H1486.3M1216.2 706.5H1486.3M1488.3 688.5H1593.0M1488.3 706.5H1593.0M1214.2 688.5V706.5M1216.2 688.5V706.5M1486.3 688.5V706.5M1488.3 688.5V706.5" stroke="#1e2a1e" stroke-width="3" fill="none" shape-rendering="auto"/>
<path d="M634.0 688.5H1214.2M634.0 706.5H1214.2M1216.2 688.5H1486.3M1216.2 706.5H1486.3M1488.3 688.5H1593.0M1488.3 706.5H1593.0M1214.2 688.5V706.5M1216.2 688.5V706.5M1486.3 688.5V706.5M1488.3 688.5V706.5" stroke="#b4dcb4" stroke-width="1" fill="none"/>
<rect x="634" y="728.0" width="959" height="3" fill="#123a12"/>
<rect x="634" y="729.0" width="959" height="1" fill="#52c852"/>
<rect x="942.9" y="711.0" width="2" height="18" fill="#35e035"/>
<rect x="1214.2" y="711.0" width="2" height="18" fill="#35e035"/>
<rect x="1486.3" y="711.0" width="2" height="18" fill="#35e035"/>
<path d="M634.0 734.5H901.7M634.0 752.5H901.7M903.7 734.5H1172.5M903.7 752.5H1172.5M1174.5 734.5H1215.5M1174.5 752.5H1215.5M1217.5 734.5H1443.4M1217.5 752.5H1443.4M1445.4 734.5H1486.3M1445.4 752.5H1486.3M1488.3 734.5H1593.0M1488.3 752.5H1593.0M901.7 734.5V752.5M903.7 734.5V752.5M1172.5 734.5V752.5M1174.5 734.5V752.5M1215.5 734.5V752.5M1217.5 734.5V752.5M1443.4 734.5V752.5M1445.4 734.5V752.5M1486.3 734.5V752.5M1488.3 734.5V752.5" stroke="#1e2a1e" stroke-width="3" fill="none" shape-rendering="auto"/>
<path d="M634.0 734.5H901.7M634.0 752.5H901.7M903.7 734.5H1172.5M903.7 752.5H1172.5M1174.5 734.5H1215.5M1174.5 752.5H1215.5M1217.5 734.5H1443.4M1217.5 752.5H1443.4M1445.4 734.5H1486.3M1445.4 752.5H1486.3M1488.3 734.5H1593.0M1488.3 752.5H1593.0M901.7 734.5V752.5M903.7 734.5V752.5M1172.5 734.5V752.5M1174.5 734.5V752.5M1215.5 734.5V752.5M1217.5 734.5V752.5M1443.4 734.5V752.5M1445.4 734.5V752.5M1486.3 734.5V752.5M1488.3 734.5V752.5" stroke="#b4dcb4" stroke-width="1" fill="none"/>
<rect x="634" y="774.0" width="959" height="3" fill="#123a12"/>
<rect x="634" y="775.0" width="959" height="1" fill="#52c852"/>
<rect x="901.4" y="757.0" width="7.2" height="18" fill="#00ff00"/>
<rect x="1172.6" y="757.0" width="1.8" height="18" fill="#00ff00"/>
<rect x="1175.6" y="757.0" width="0.9" height="18" fill="#00ff00"/>
<rect x="1177.6" y="757.0" width="1.0" height="18" fill="#00ff00"/>
<rect x="1444.2" y="757.0" width="1.2" height="18" fill="#00ff00"/>
<rect x="1446.6" y="757.0" width="3.6" height="18" fill="#00ff00"/>
<path d="M634.0 780.5H694.4M634.0 798.5H694.4M696.4 780.5H701.6M696.4 798.5H701.6M703.6 780.5H708.7M703.6 798.5H708.7M710.7 780.5H715.9M710.7 798.5H715.9M717.9 780.5H723.0M717.9 798.5H723.0M725.0 780.5H730.2M725.0 798.5H730.2M732.2 780.5H737.3M732.2 798.5H737.3M739.3 780.5H744.5M739.3 798.5H744.5M746.5 780.5H751.6M746.5 798.5H751.6M753.6 780.5H758.8M753.6 798.5H758.8M760.8 780.5H765.9M760.8 798.5H765.9M767.9 780.5H773.1M767.9 798.5H773.1M775.1 780.5H780.2M775.1 798.5H780.2M782.2 780.5H787.4M782.2 798.5H787.4M789.4 780.5H794.5M789.4 798.5H794.5M796.5 780.5H801.7M796.5 798.5H801.7M803.7 780.5H808.8M803.7 798.5H808.8M810.8 780.5H816.0M810.8 798.5H816.0M818.0 780.5H823.1M818.0 798.5H823.1M825.1 780.5H830.3M825.1 798.5H830.3M832.3 780.5H837.4M832.3 798.5H837.4M839.4 780.5H844.6M839.4 798.5H844.6M846.6 780.5H851.7M846.6 798.5H851.7M853.7 780.5H858.9M853.7 798.5H858.9M860.9 780.5H866.0M860.9 798.5H866.0M868.0 780.5H873.2M868.0 798.5H873.2M875.2 780.5H880.3M875.2 798.5H880.3M882.3 780.5H887.5M882.3 798.5H887.5M889.5 780.5H894.6M889.5 798.5H894.6M896.6 780.5H944.0M896.6 798.5H944.0M946.0 780.5H951.1M946.0 798.5H951.1M953.1 780.5H958.3M953.1 798.5H958.3M960.3 780.5H965.4M960.3 798.5H965.4M967.4 780.5H972.6M967.4 798.5H972.6M974.6 780.5H979.7M974.6 798.5H979.7M981.7 780.5H986.9M981.7 798.5H986.9M988.9 780.5H994.0M988.9 798.5H994.0M996.0 780.5H1001.2M996.0 798.5H1001.2M1003.2 780.5H1008.3M1003.2 798.5H1008.3M1010.3 780.5H1015.5M1010.3 798.5H1015.5M1017.5 780.5H1022.6M1017.5 798.5H1022.6M1024.6 780.5H1029.8M1024.6 798.5H1029.8M1031.8 780.5H1036.9M1031.8 798.5H1036.9M1038.9 780.5H1044.1M1038.9 798.5H1044.1M1046.1 780.5H1051.2M1046.1 798.5H1051.2M1053.2 780.5H1058.4M1053.2 798.5H1058.4M1060.4 780.5H1065.5M1060.4 798.5H1065.5M1067.5 780.5H1072.7M1067.5 798.5H1072.7M1074.7 780.5H1079.8M1074.7 798.5H1079.8M1081.8 780.5H1087.0M1081.8 798.5H1087.0M1089.0 780.5H1094.1M1089.0 798.5H1094.1M1096.1 780.5H1101.3M1096.1 798.5H1101.3M1103.3 780.5H1108.4M1103.3 798.5H1108.4M1110.4 780.5H1115.6M1110.4 798.5H1115.6M1117.6 780.5H1122.7M1117.6 798.5H1122.7M1124.7 780.5H1129.9M1124.7 798.5H1129.9M1131.9 780.5H1137.0M1131.9 798.5H1137.0M1139.0 780.5H1144.2M1139.0 798.5H1144.2M1146.2 780.5H1151.3M1146.2 798.5H1151.3M1153.3 780.5H1158.5M1153.3 798.5H1158.5M1160.5 780.5H1165.6M1160.5 798.5H1165.6M1167.6 780.5H1215.0M1167.6 798.5H1215.0M1217.0 780.5H1222.1M1217.0 798.5H1222.1M1224.1 780.5H1229.3M1224.1 798.5H1229.3M1231.3 780.5H1236.4M1231.3 798.5H1236.4M1238.4 780.5H1243.6M1238.4 798.5H1243.6M1245.6 780.5H1250.7M1245.6 798.5H1250.7M1252.7 780.5H1257.9M1252.7 798.5H1257.9M1259.9 780.5H1265.0M1259.9 798.5H1265.0M1267.0 780.5H1272.2M1267.0 798.5H1272.2M1274.2 780.5H1279.3M1274.2 798.5H1279.3M1281.3 780.5H1286.5M1281.3 798.5H1286.5M1288.5 780.5H1293.6M1288.5 798.5H1293.6M1295.6 780.5H1300.8M1295.6 798.5H1300.8M1302.8 780.5H1307.9M1302.8 798.5H1307.9M1309.9 780.5H1315.1M1309.9 798.5H1315.1M1317.1 780.5H1322.2M1317.1 798.5H1322.2M1324.2 780.5H1329.4M1324.2 798.5H1329.4M1331.4 780.5H1336.5M1331.4 798.5H1336.5M1338.5 780.5H1343.7M1338.5 798.5H1343.7M1345.7 780.5H1350.8M1345.7 798.5H1350.8M1352.8 780.5H1358.0M1352.8 798.5H1358.0M1360.0 780.5H1365.1M1360.0 798.5H1365.1M1367.1 780.5H1372.3M1367.1 798.5H1372.3M1374.3 780.5H1379.4M1374.3 798.5H1379.4M1381.4 780.5H1386.6M1381.4 798.5H1386.6M1388.6 780.5H1393.7M1388.6 798.5H1393.7M1395.7 780.5H1400.9M1395.7 798.5H1400.9M1402.9 780.5H1408.0M1402.9 798.5H1408.0M1410.0 780.5H1415.2M1410.0 798.5H1415.2M1417.2 780.5H1422.3M1417.2 798.5H1422.3M1424.3 780.5H1429.5M1424.3 798.5H1429.5M1431.5 780.5H1436.6M1431.5 798.5H1436.6M1438.6 780.5H1486.8M1438.6 798.5H1486.8M1488.8 780.5H1493.9M1488.8 798.5H1493.9M1495.9 780.5H1501.1M1495.9 798.5H1501.1M1503.1 780.5H1508.2M1503.1 798.5H1508.2M1510.2 780.5H1515.4M1510.2 798.5H1515.4M1517.4 780.5H1522.5M1517.4 798.5H1522.5M1524.5 780.5H1529.7M1524.5 798.5H1529.7M1531.7 780.5H1536.8M1531.7 798.5H1536.8M1538.8 780.5H1544.0M1538.8 798.5H1544.0M1546.0 780.5H1551.1M1546.0 798.5H1551.1M1553.1 780.5H1558.3M1553.1 798.5H1558.3M1560.3 780.5H1565.4M1560.3 798.5H1565.4M1567.4 780.5H1572.6M1567.4 798.5H1572.6M1574.6 780.5H1579.7M1574.6 798.5H1579.7M1581.7 780.5H1586.9M1581.7 798.5H1586.9M1588.9 780.5H1593.0M1588.9 798.5H1593.0M694.4 780.5V798.5M696.4 780.5V798.5M701.6 780.5V798.5M703.6 780.5V798.5M708.7 780.5V798.5M710.7 780.5V798.5M715.9 780.5V798.5M717.9 780.5V798.5M723.0 780.5V798.5M725.0 780.5V798.5M730.2 780.5V798.5M732.2 780.5V798.5M737.3 780.5V798.5M739.3 780.5V798.5M744.5 780.5V798.5M746.5 780.5V798.5M751.6 780.5V798.5M753.6 780.5V798.5M758.8 780.5V798.5M760.8 780.5V798.5M765.9 780.5V798.5M767.9 780.5V798.5M773.1 780.5V798.5M775.1 780.5V798.5M780.2 780.5V798.5M782.2 780.5V798.5M787.4 780.5V798.5M789.4 780.5V798.5M794.5 780.5V798.5M796.5 780.5V798.5M801.7 780.5V798.5M803.7 780.5V798.5M808.8 780.5V798.5M810.8 780.5V798.5M816.0 780.5V798.5M818.0 780.5V798.5M823.1 780.5V798.5M825.1 780.5V798.5M830.3 780.5V798.5M832.3 780.5V798.5M837.4 780.5V798.5M839.4 780.5V798.5M844.6 780.5V798.5M846.6 780.5V798.5M851.7 780.5V798.5M853.7 780.5V798.5M858.9 780.5V798.5M860.9 780.5V798.5M866.0 780.5V798.5M868.0 780.5V798.5M873.2 780.5V798.5M875.2 780.5V798.5M880.3 780.5V798.5M882.3 780.5V798.5M887.5 780.5V798.5M889.5 780.5V798.5M894.6 780.5V798.5M896.6 780.5V798.5M944.0 780.5V798.5M946.0 780.5V798.5M951.1 780.5V798.5M953.1 780.5V798.5M958.3 780.5V798.5M960.3 780.5V798.5M965.4 780.5V798.5M967.4 780.5V798.5M972.6 780.5V798.5M974.6 780.5V798.5M979.7 780.5V798.5M981.7 780.5V798.5M986.9 780.5V798.5M988.9 780.5V798.5M994.0 780.5V798.5M996.0 780.5V798.5M1001.2 780.5V798.5M1003.2 780.5V798.5M1008.3 780.5V798.5M1010.3 780.5V798.5M1015.5 780.5V798.5M1017.5 780.5V798.5M1022.6 780.5V798.5M1024.6 780.5V798.5M1029.8 780.5V798.5M1031.8 780.5V798.5M1036.9 780.5V798.5M1038.9 780.5V798.5M1044.1 780.5V798.5M1046.1 780.5V798.5M1051.2 780.5V798.5M1053.2 780.5V798.5M1058.4 780.5V798.5M1060.4 780.5V798.5M1065.5 780.5V798.5M1067.5 780.5V798.5M1072.7 780.5V798.5M1074.7 780.5V798.5M1079.8 780.5V798.5M1081.8 780.5V798.5M1087.0 780.5V798.5M1089.0 780.5V798.5M1094.1 780.5V798.5M1096.1 780.5V798.5M1101.3 780.5V798.5M1103.3 780.5V798.5M1108.4 780.5V798.5M1110.4 780.5V798.5M1115.6 780.5V798.5M1117.6 780.5V798.5M1122.7 780.5V798.5M1124.7 780.5V798.5M1129.9 780.5V798.5M1131.9 780.5V798.5M1137.0 780.5V798.5M1139.0 780.5V798.5M1144.2 780.5V798.5M1146.2 780.5V798.5M1151.3 780.5V798.5M1153.3 780.5V798.5M1158.5 780.5V798.5M1160.5 780.5V798.5M1165.6 780.5V798.5M1167.6 780.5V798.5M1215.0 780.5V798.5M1217.0 780.5V798.5M1222.1 780.5V798.5M1224.1 780.5V798.5M1229.3 780.5V798.5M1231.3 780.5V798.5M1236.4 780.5V798.5M1238.4 780.5V798.5M1243.6 780.5V798.5M1245.6 780.5V798.5M1250.7 780.5V798.5M1252.7 780.5V798.5M1257.9 780.5V798.5M1259.9 780.5V798.5M1265.0 780.5V798.5M1267.0 780.5V798.5M1272.2 780.5V798.5M1274.2 780.5V798.5M1279.3 780.5V798.5M1281.3 780.5V798.5M1286.5 780.5V798.5M1288.5 780.5V798.5M1293.6 780.5V798.5M1295.6 780.5V798.5M1300.8 780.5V798.5M1302.8 780.5V798.5M1307.9 780.5V798.5M1309.9 780.5V798.5M1315.1 780.5V798.5M1317.1 780.5V798.5M1322.2 780.5V798.5M1324.2 780.5V798.5M1329.4 780.5V798.5M1331.4 780.5V798.5M1336.5 780.5V798.5M1338.5 780.5V798.5M1343.7 780.5V798.5M1345.7 780.5V798.5M1350.8 780.5V798.5M1352.8 780.5V798.5M1358.0 780.5V798.5M1360.0 780.5V798.5M1365.1 780.5V798.5M1367.1 780.5V798.5M1372.3 780.5V798.5M1374.3 780.5V798.5M1379.4 780.5V798.5M1381.4 780.5V798.5M1386.6 780.5V798.5M1388.6 780.5V798.5M1393.7 780.5V798.5M1395.7 780.5V798.5M1400.9 780.5V798.5M1402.9 780.5V798.5M1408.0 780.5V798.5M1410.0 780.5V798.5M1415.2 780.5V798.5M1417.2 780.5V798.5M1422.3 780.5V798.5M1424.3 780.5V798.5M1429.5 780.5V798.5M1431.5 780.5V798.5M1436.6 780.5V798.5M1438.6 780.5V798.5M1486.8 780.5V798.5M1488.8 780.5V798.5M1493.9 780.5V798.5M1495.9 780.5V798.5M1501.1 780.5V798.5M1503.1 780.5V798.5M1508.2 780.5V798.5M1510.2 780.5V798.5M1515.4 780.5V798.5M1517.4 780.5V798.5M1522.5 780.5V798.5M1524.5 780.5V798.5M1529.7 780.5V798.5M1531.7 780.5V798.5M1536.8 780.5V798.5M1538.8 780.5V798.5M1544.0 780.5V798.5M1546.0 780.5V798.5M1551.1 780.5V798.5M1553.1 780.5V798.5M1558.3 780.5V798.5M1560.3 780.5V798.5M1565.4 780.5V798.5M1567.4 780.5V798.5M1572.6 780.5V798.5M1574.6 780.5V798.5M1579.7 780.5V798.5M1581.7 780.5V798.5M1586.9 780.5V798.5M1588.9 780.5V798.5" stroke="#1e2a1e" stroke-width="3" fill="none" shape-rendering="auto"/>
<path d="M634.0 780.5H694.4M634.0 798.5H694.4M696.4 780.5H701.6M696.4 798.5H701.6M703.6 780.5H708.7M703.6 798.5H708.7M710.7 780.5H715.9M710.7 798.5H715.9M717.9 780.5H723.0M717.9 798.5H723.0M725.0 780.5H730.2M725.0 798.5H730.2M732.2 780.5H737.3M732.2 798.5H737.3M739.3 780.5H744.5M739.3 798.5H744.5M746.5 780.5H751.6M746.5 798.5H751.6M753.6 780.5H758.8M753.6 798.5H758.8M760.8 780.5H765.9M760.8 798.5H765.9M767.9 780.5H773.1M767.9 798.5H773.1M775.1 780.5H780.2M775.1 798.5H780.2M782.2 780.5H787.4M782.2 798.5H787.4M789.4 780.5H794.5M789.4 798.5H794.5M796.5 780.5H801.7M796.5 798.5H801.7M803.7 780.5H808.8M803.7 798.5H808.8M810.8 780.5H816.0M810.8 798.5H816.0M818.0 780.5H823.1M818.0 798.5H823.1M825.1 780.5H830.3M825.1 798.5H830.3M832.3 780.5H837.4M832.3 798.5H837.4M839.4 780.5H844.6M839.4 798.5H844.6M846.6 780.5H851.7M846.6 798.5H851.7M853.7 780.5H858.9M853.7 798.5H858.9M860.9 780.5H866.0M860.9 798.5H866.0M868.0 780.5H873.2M868.0 798.5H873.2M875.2 780.5H880.3M875.2 798.5H880.3M882.3 780.5H887.5M882.3 798.5H887.5M889.5 780.5H894.6M889.5 798.5H894.6M896.6 780.5H944.0M896.6 798.5H944.0M946.0 780.5H951.1M946.0 798.5H951.1M953.1 780.5H958.3M953.1 798.5H958.3M960.3 780.5H965.4M960.3 798.5H965.4M967.4 780.5H972.6M967.4 798.5H972.6M974.6 780.5H979.7M974.6 798.5H979.7M981.7 780.5H986.9M981.7 798.5H986.9M988.9 780.5H994.0M988.9 798.5H994.0M996.0 780.5H1001.2M996.0 798.5H1001.2M1003.2 780.5H1008.3M1003.2 798.5H1008.3M1010.3 780.5H1015.5M1010.3 798.5H1015.5M1017.5 780.5H1022.6M1017.5 798.5H1022.6M1024.6 780.5H1029.8M1024.6 798.5H1029.8M1031.8 780.5H1036.9M1031.8 798.5H1036.9M1038.9 780.5H1044.1M1038.9 798.5H1044.1M1046.1 780.5H1051.2M1046.1 798.5H1051.2M1053.2 780.5H1058.4M1053.2 798.5H1058.4M1060.4 780.5H1065.5M1060.4 798.5H1065.5M1067.5 780.5H1072.7M1067.5 798.5H1072.7M1074.7 780.5H1079.8M1074.7 798.5H1079.8M1081.8 780.5H1087.0M1081.8 798.5H1087.0M1089.0 780.5H1094.1M1089.0 798.5H1094.1M1096.1 780.5H1101.3M1096.1 798.5H1101.3M1103.3 780.5H1108.4M1103.3 798.5H1108.4M1110.4 780.5H1115.6M1110.4 798.5H1115.6M1117.6 780.5H1122.7M1117.6 798.5H1122.7M1124.7 780.5H1129.9M1124.7 798.5H1129.9M1131.9 780.5H1137.0M1131.9 798.5H1137.0M1139.0 780.5H1144.2M1139.0 798.5H1144.2M1146.2 780.5H1151.3M1146.2 798.5H1151.3M1153.3 780.5H1158.5M1153.3 798.5H1158.5M1160.5 780.5H1165.6M1160.5 798.5H1165.6M1167.6 780.5H1215.0M1167.6 798.5H1215.0M1217.0 780.5H1222.1M1217.0 798.5H1222.1M1224.1 780.5H1229.3M1224.1 798.5H1229.3M1231.3 780.5H1236.4M1231.3 798.5H1236.4M1238.4 780.5H1243.6M1238.4 798.5H1243.6M1245.6 780.5H1250.7M1245.6 798.5H1250.7M1252.7 780.5H1257.9M1252.7 798.5H1257.9M1259.9 780.5H1265.0M1259.9 798.5H1265.0M1267.0 780.5H1272.2M1267.0 798.5H1272.2M1274.2 780.5H1279.3M1274.2 798.5H1279.3M1281.3 780.5H1286.5M1281.3 798.5H1286.5M1288.5 780.5H1293.6M1288.5 798.5H1293.6M1295.6 780.5H1300.8M1295.6 798.5H1300.8M1302.8 780.5H1307.9M1302.8 798.5H1307.9M1309.9 780.5H1315.1M1309.9 798.5H1315.1M1317.1 780.5H1322.2M1317.1 798.5H1322.2M1324.2 780.5H1329.4M1324.2 798.5H1329.4M1331.4 780.5H1336.5M1331.4 798.5H1336.5M1338.5 780.5H1343.7M1338.5 798.5H1343.7M1345.7 780.5H1350.8M1345.7 798.5H1350.8M1352.8 780.5H1358.0M1352.8 798.5H1358.0M1360.0 780.5H1365.1M1360.0 798.5H1365.1M1367.1 780.5H1372.3M1367.1 798.5H1372.3M1374.3 780.5H1379.4M1374.3 798.5H1379.4M1381.4 780.5H1386.6M1381.4 798.5H1386.6M1388.6 780.5H1393.7M1388.6 798.5H1393.7M1395.7 780.5H1400.9M1395.7 798.5H1400.9M1402.9 780.5H1408.0M1402.9 798.5H1408.0M1410.0 780.5H1415.2M1410.0 798.5H1415.2M1417.2 780.5H1422.3M1417.2 798.5H1422.3M1424.3 780.5H1429.5M1424.3 798.5H1429.5M1431.5 780.5H1436.6M1431.5 798.5H1436.6M1438.6 780.5H1486.8M1438.6 798.5H1486.8M1488.8 780.5H1493.9M1488.8 798.5H1493.9M1495.9 780.5H1501.1M1495.9 798.5H1501.1M1503.1 780.5H1508.2M1503.1 798.5H1508.2M1510.2 780.5H1515.4M1510.2 798.5H1515.4M1517.4 780.5H1522.5M1517.4 798.5H1522.5M1524.5 780.5H1529.7M1524.5 798.5H1529.7M1531.7 780.5H1536.8M1531.7 798.5H1536.8M1538.8 780.5H1544.0M1538.8 798.5H1544.0M1546.0 780.5H1551.1M1546.0 798.5H1551.1M1553.1 780.5H1558.3M1553.1 798.5H1558.3M1560.3 780.5H1565.4M1560.3 798.5H1565.4M1567.4 780.5H1572.6M1567.4 798.5H1572.6M1574.6 780.5H1579.7M1574.6 798.5H1579.7M1581.7 780.5H1586.9M1581.7 798.5H1586.9M1588.9 780.5H1593.0M1588.9 798.5H1593.0M694.4 780.5V798.5M696.4 780.5V798.5M701.6 780.5V798.5M703.6 780.5V798.5M708.7 780.5V798.5M710.7 780.5V798.5M715.9 780.5V798.5M717.9 780.5V798.5M723.0 780.5V798.5M725.0 780.5V798.5M730.2 780.5V798.5M732.2 780.5V798.5M737.3 780.5V798.5M739.3 780.5V798.5M744.5 780.5V798.5M746.5 780.5V798.5M751.6 780.5V798.5M753.6 780.5V798.5M758.8 780.5V798.5M760.8 780.5V798.5M765.9 780.5V798.5M767.9 780.5V798.5M773.1 780.5V798.5M775.1 780.5V798.5M780.2 780.5V798.5M782.2 780.5V798.5M787.4 780.5V798.5M789.4 780.5V798.5M794.5 780.5V798.5M796.5 780.5V798.5M801.7 780.5V798.5M803.7 780.5V798.5M808.8 780.5V798.5M810.8 780.5V798.5M816.0 780.5V798.5M818.0 780.5V798.5M823.1 780.5V798.5M825.1 780.5V798.5M830.3 780.5V798.5M832.3 780.5V798.5M837.4 780.5V798.5M839.4 780.5V798.5M844.6 780.5V798.5M846.6 780.5V798.5M851.7 780.5V798.5M853.7 780.5V798.5M858.9 780.5V798.5M860.9 780.5V798.5M866.0 780.5V798.5M868.0 780.5V798.5M873.2 780.5V798.5M875.2 780.5V798.5M880.3 780.5V798.5M882.3 780.5V798.5M887.5 780.5V798.5M889.5 780.5V798.5M894.6 780.5V798.5M896.6 780.5V798.5M944.0 780.5V798.5M946.0 780.5V798.5M951.1 780.5V798.5M953.1 780.5V798.5M958.3 780.5V798.5M960.3 780.5V798.5M965.4 780.5V798.5M967.4 780.5V798.5M972.6 780.5V798.5M974.6 780.5V798.5M979.7 780.5V798.5M981.7 780.5V798.5M986.9 780.5V798.5M988.9 780.5V798.5M994.0 780.5V798.5M996.0 780.5V798.5M1001.2 780.5V798.5M1003.2 780.5V798.5M1008.3 780.5V798.5M1010.3 780.5V798.5M1015.5 780.5V798.5M1017.5 780.5V798.5M1022.6 780.5V798.5M1024.6 780.5V798.5M1029.8 780.5V798.5M1031.8 780.5V798.5M1036.9 780.5V798.5M1038.9 780.5V798.5M1044.1 780.5V798.5M1046.1 780.5V798.5M1051.2 780.5V798.5M1053.2 780.5V798.5M1058.4 780.5V798.5M1060.4 780.5V798.5M1065.5 780.5V798.5M1067.5 780.5V798.5M1072.7 780.5V798.5M1074.7 780.5V798.5M1079.8 780.5V798.5M1081.8 780.5V798.5M1087.0 780.5V798.5M1089.0 780.5V798.5M1094.1 780.5V798.5M1096.1 780.5V798.5M1101.3 780.5V798.5M1103.3 780.5V798.5M1108.4 780.5V798.5M1110.4 780.5V798.5M1115.6 780.5V798.5M1117.6 780.5V798.5M1122.7 780.5V798.5M1124.7 780.5V798.5M1129.9 780.5V798.5M1131.9 780.5V798.5M1137.0 780.5V798.5M1139.0 780.5V798.5M1144.2 780.5V798.5M1146.2 780.5V798.5M1151.3 780.5V798.5M1153.3 780.5V798.5M1158.5 780.5V798.5M1160.5 780.5V798.5M1165.6 780.5V798.5M1167.6 780.5V798.5M1215.0 780.5V798.5M1217.0 780.5V798.5M1222.1 780.5V798.5M1224.1 780.5V798.5M1229.3 780.5V798.5M1231.3 780.5V798.5M1236.4 780.5V798.5M1238.4 780.5V798.5M1243.6 780.5V798.5M1245.6 780.5V798.5M1250.7 780.5V798.5M1252.7 780.5V798.5M1257.9 780.5V798.5M1259.9 780.5V798.5M1265.0 780.5V798.5M1267.0 780.5V798.5M1272.2 780.5V798.5M1274.2 780.5V798.5M1279.3 780.5V798.5M1281.3 780.5V798.5M1286.5 780.5V798.5M1288.5 780.5V798.5M1293.6 780.5V798.5M1295.6 780.5V798.5M1300.8 780.5V798.5M1302.8 780.5V798.5M1307.9 780.5V798.5M1309.9 780.5V798.5M1315.1 780.5V798.5M1317.1 780.5V798.5M1322.2 780.5V798.5M1324.2 780.5V798.5M1329.4 780.5V798.5M1331.4 780.5V798.5M1336.5 780.5V798.5M1338.5 780.5V798.5M1343.7 780.5V798.5M1345.7 780.5V798.5M1350.8 780.5V798.5M1352.8 780.5V798.5M1358.0 780.5V798.5M1360.0 780.5V798.5M1365.1 780.5V798.5M1367.1 780.5V798.5M1372.3 780.5V798.5M1374.3 780.5V798.5M1379.4 780.5V798.5M1381.4 780.5V798.5M1386.6 780.5V798.5M1388.6 780.5V798.5M1393.7 780.5V798.5M1395.7 780.5V798.5M1400.9 780.5V798.5M1402.9 780.5V798.5M1408.0 780.5V798.5M1410.0 780.5V798.5M1415.2 780.5V798.5M1417.2 780.5V798.5M1422.3 780.5V798.5M1424.3 780.5V798.5M1429.5 780.5V798.5M1431.5 780.5V798.5M1436.6 780.5V798.5M1438.6 780.5V798.5M1486.8 780.5V798.5M1488.8 780.5V798.5M1493.9 780.5V798.5M1495.9 780.5V798.5M1501.1 780.5V798.5M1503.1 780.5V798.5M1508.2 780.5V798.5M1510.2 780.5V798.5M1515.4 780.5V798.5M1517.4 780.5V798.5M1522.5 780.5V798.5M1524.5 780.5V798.5M1529.7 780.5V798.5M1531.7 780.5V798.5M1536.8 780.5V798.5M1538.8 780.5V798.5M1544.0 780.5V798.5M1546.0 780.5V798.5M1551.1 780.5V798.5M1553.1 780.5V798.5M1558.3 780.5V798.5M1560.3 780.5V798.5M1565.4 780.5V798.5M1567.4 780.5V798.5M1572.6 780.5V798.5M1574.6 780.5V798.5M1579.7 780.5V798.5M1581.7 780.5V798.5M1586.9 780.5V798.5M1588.9 780.5V798.5" stroke="#b4dcb4" stroke-width="1" fill="none"/>
<path d="M634 821.5H900.6V803.5H1593" stroke="#123a12" stroke-width="3" fill="none" shape-rendering="auto"/>
<path d="M634 821.5H900.6V803.5H1593" stroke="#52c852" stroke-width="1" fill="none"/>
<rect x="634" y="849.0" width="959" height="19" fill="#00ff00"/>
<rect x="634" y="871.0" width="959" height="3" fill="#123a12"/>
<rect x="634" y="872.0" width="959" height="1" fill="#52c852"/>
<rect x="634" y="912.0" width="959" height="3" fill="#123a12"/>
<rect x="634" y="913.0" width="959" height="1" fill="#52c852"/>
<rect x="901.4" y="895.0" width="7.2" height="18" fill="#00ff00"/>
<rect x="1172.6" y="895.0" width="1.8" height="18" fill="#00ff00"/>
<rect x="1175.6" y="895.0" width="0.9" height="18" fill="#00ff00"/>
<rect x="1177.6" y="895.0" width="1.0" height="18" fill="#00ff00"/>
<rect x="1444.2" y="895.0" width="1.2" height="18" fill="#00ff00"/>
<rect x="1446.6" y="895.0" width="3.6" height="18" fill="#00ff00"/>
<path d="M634 936.5H900.6V918.5H1593" stroke="#123a12" stroke-width="3" fill="none" shape-rendering="auto"/>
<path d="M634 936.5H900.6V918.5H1593" stroke="#52c852" stroke-width="1" fill="none"/>
<rect x="632" y="147" width="2" height="776" fill="#ffc93a"/>
<path d="M632.500 146 V135.500 Q632.500 134.500 633.500 134.500 H634 Q635 134.500 635 136 V138" stroke="#e8d860" stroke-width="0.900" fill="none"/>
<rect x="632" y="153" width="2" height="2" fill="#fff"/>
<rect x="632.6" y="168" width="1.4" height="9" fill="#e8501a"/>
<rect x="632.6" y="191" width="1.4" height="9" fill="#e8501a"/>
<rect x="632.6" y="214" width="1.4" height="9" fill="#e8501a"/>
<rect x="632.6" y="237" width="1.4" height="9" fill="#e8501a"/>
<rect x="632.6" y="260" width="1.4" height="9" fill="#e8501a"/>
<rect x="632.6" y="283" width="1.4" height="9" fill="#e8501a"/>
<rect x="632.6" y="306" width="1.4" height="9" fill="#e8501a"/>
<rect x="632.6" y="329" width="1.4" height="9" fill="#e8501a"/>
<rect x="632.6" y="352" width="1.4" height="9" fill="#e8501a"/>
<rect x="632.6" y="375" width="1.4" height="9" fill="#e8501a"/>
<rect x="632.6" y="398" width="1.4" height="9" fill="#e8501a"/>
<rect x="632.6" y="421" width="1.4" height="9" fill="#e8501a"/>
<rect x="632.6" y="444" width="1.4" height="9" fill="#e8501a"/>
<rect x="632.6" y="467" width="1.4" height="9" fill="#e8501a"/>
<rect x="632.6" y="490" width="1.4" height="9" fill="#e8501a"/>
<rect x="632.6" y="513" width="1.4" height="9" fill="#e8501a"/>
<rect x="632.6" y="536" width="1.4" height="9" fill="#e8501a"/>
<rect x="632.6" y="559" width="1.4" height="9" fill="#e8501a"/>
<rect x="632.6" y="582" width="1.4" height="9" fill="#e8501a"/>
<rect x="632.6" y="605" width="1.4" height="9" fill="#e8501a"/>
<rect x="632.6" y="628" width="1.4" height="9" fill="#e8501a"/>
<rect x="632.6" y="651" width="1.4" height="9" fill="#e8501a"/>
<rect x="632.6" y="674" width="1.4" height="9" fill="#e8501a"/>
<rect x="632.6" y="697" width="1.4" height="9" fill="#e8501a"/>
<rect x="632.6" y="720" width="1.4" height="9" fill="#e8501a"/>
<rect x="632.6" y="743" width="1.4" height="9" fill="#e8501a"/>
<rect x="632.6" y="766" width="1.4" height="9" fill="#e8501a"/>
<rect x="632.6" y="789" width="1.4" height="9" fill="#e8501a"/>
<rect x="632.6" y="812" width="1.4" height="9" fill="#e8501a"/>
<rect x="632.6" y="835" width="1.4" height="9" fill="#e8501a"/>
<rect x="632.6" y="858" width="1.4" height="9" fill="#e8501a"/>
<rect x="632.6" y="881" width="1.4" height="9" fill="#e8501a"/>
<rect x="632.6" y="904" width="1.4" height="9" fill="#e8501a"/>
</svg>
<div style="left:632px;top:155px;width:961px;height:768px;overflow:hidden">
<span style="left:2.60px;top:73.70px;font:16px/22px 'Liberation Sans',sans-serif;color:#ffffff;transform:scaleX(1.0080);transform-origin:0 50%;">0<i>...</i></span>
<span style="left:36.50px;top:73.70px;font:16px/22px 'Liberation Sans',sans-serif;color:#ffffff;transform:scaleX(1.0080);transform-origin:0 50%;">12153524</span>
<span style="left:303.50px;top:73.70px;font:16px/22px 'Liberation Sans',sans-serif;color:#ffffff;transform:scaleX(1.0080);transform-origin:0 50%;">c0895e81</span>
<span style="left:574.40px;top:73.70px;font:16px/22px 'Liberation Sans',sans-serif;color:#ffffff;transform:scaleX(1.0080);transform-origin:0 50%;">8484d609</span>
<span style="left:846.50px;top:73.70px;font:16px/22px 'Liberation Sans',sans-serif;color:#ffffff;transform:scaleX(1.0080);transform-origin:0 50%;">b1f05663</span>
<span style="left:34.50px;top:211.70px;font:16px/22px 'Liberation Sans',sans-serif;color:#ffffff;transform:scaleX(1.0080);transform-origin:0 50%;">49</span>
<span style="left:304.50px;top:211.70px;font:16px/22px 'Liberation Sans',sans-serif;color:#ffffff;transform:scaleX(1.0080);transform-origin:0 50%;">49</span>
<span style="left:575.40px;top:211.70px;font:16px/22px 'Liberation Sans',sans-serif;color:#ffffff;transform:scaleX(1.0080);transform-origin:0 50%;">49</span>
<span style="left:847.50px;top:211.70px;font:16px/22px 'Liberation Sans',sans-serif;color:#ffffff;transform:scaleX(1.0080);transform-origin:0 50%;">49</span>
<span style="left:2.60px;top:280.70px;font:16px/22px 'Liberation Sans',sans-serif;color:#ffffff;transform:scaleX(1.0080);transform-origin:0 50%;">00000000000000000000000000000000</span>
<span style="left:535.50px;top:280.70px;font:16px/22px 'Liberation Sans',sans-serif;color:#ffffff;transform:scaleX(1.0080);transform-origin:0 50%;">000<i>...</i></span>
<span style="left:807.00px;top:280.70px;font:16px/22px 'Liberation Sans',sans-serif;color:#ffffff;transform:scaleX(1.0080);transform-origin:0 50%;">110<i>...</i></span>
<span style="left:2.60px;top:303.70px;font:16px/22px 'Liberation Sans',sans-serif;color:#ffffff;transform:scaleX(1.0080);transform-origin:0 50%;">00000000</span>
<span style="left:268.00px;top:303.70px;font:16px/22px 'Liberation Sans',sans-serif;color:#ffffff;transform:scaleX(1.0080);transform-origin:0 50%;">12153524</span>
<span style="left:539.00px;top:303.70px;font:16px/22px 'Liberation Sans',sans-serif;color:#ffffff;transform:scaleX(1.0080);transform-origin:0 50%;">c0895e81</span>
<span style="left:811.30px;top:303.70px;font:16px/22px 'Liberation Sans',sans-serif;color:#ffffff;transform:scaleX(1.0080);transform-origin:0 50%;">8484d609</span>
<span style="left:2.60px;top:326.70px;font:16px/22px 'Liberation Sans',sans-serif;color:#ffffff;transform:scaleX(1.0080);transform-origin:0 50%;">00000000000000000000000000000000</span>
<span style="left:539.00px;top:326.70px;font:16px/22px 'Liberation Sans',sans-serif;color:#ffffff;transform:scaleX(1.0080);transform-origin:0 50%;">0001001000010101001101010010<i>...</i></span>
<span style="left:811.30px;top:326.70px;font:16px/22px 'Liberation Sans',sans-serif;color:#ffffff;transform:scaleX(1.0080);transform-origin:0 50%;">11000000100010<i>...</i></span>
<span style="left:2.60px;top:533.70px;font:16px/22px 'Liberation Sans',sans-serif;color:#ffffff;transform:scaleX(1.0080);transform-origin:0 50%;">00000000</span>
<span style="left:584.20px;top:533.70px;font:16px/22px 'Liberation Sans',sans-serif;color:#ffffff;transform:scaleX(1.0080);transform-origin:0 50%;">00000001</span>
<span style="left:856.30px;top:533.70px;font:16px/22px 'Liberation Sans',sans-serif;color:#ffffff;transform:scaleX(1.0080);transform-origin:0 50%;">00000010</span>
<span style="left:2.60px;top:579.70px;font:16px/22px 'Liberation Sans',sans-serif;color:#ffffff;transform:scaleX(1.0080);transform-origin:0 50%;">00000000</span>
<span style="left:271.70px;top:579.70px;font:16px/22px 'Liberation Sans',sans-serif;color:#ffffff;transform:scaleX(1.0080);transform-origin:0 50%;">12153524</span>
<span style="left:542.50px;top:579.70px;font:16px/22px 'Liberation Sans',sans-serif;color:#ffffff;transform:scaleX(1.0080);transform-origin:0 50%;">c0<i>...</i></span>
<span style="left:585.50px;top:579.70px;font:16px/22px 'Liberation Sans',sans-serif;color:#ffffff;transform:scaleX(1.0080);transform-origin:0 50%;">00000000</span>
<span style="left:813.40px;top:579.70px;font:16px/22px 'Liberation Sans',sans-serif;color:#ffffff;transform:scaleX(1.0080);transform-origin:0 50%;">84<i>...</i></span>
<span style="left:856.30px;top:579.70px;font:16px/22px 'Liberation Sans',sans-serif;color:#ffffff;transform:scaleX(1.0080);transform-origin:0 50%;">00000000</span>
<span style="left:2.60px;top:625.70px;font:16px/22px 'Liberation Sans',sans-serif;color:#ffffff;transform:scaleX(1.0080);transform-origin:0 50%;">0000<i>...</i></span>
<span style="left:264.60px;top:625.70px;font:16px/22px 'Liberation Sans',sans-serif;color:#ffffff;transform:scaleX(1.0080);transform-origin:0 50%;">000<i>...</i></span>
<span style="left:535.50px;top:625.70px;font:16px/22px 'Liberation Sans',sans-serif;color:#ffffff;transform:scaleX(1.0080);transform-origin:0 50%;">110<i>...</i></span>
<span style="left:807.00px;top:625.70px;font:16px/22px 'Liberation Sans',sans-serif;color:#ffffff;transform:scaleX(1.0080);transform-origin:0 50%;">100<i>...</i></span>
</div>
<div style="left:632px;top:926px;width:961px;height:52px;background:#000;"></div>
<svg style="left:632px;top:926px" width="961" height="52" viewBox="632 926 961 52" shape-rendering="crispEdges">
<rect x="631" y="926" width="1.3" height="7" fill="#3edc3e"/>
<rect x="639" y="928" width="1" height="3" fill="#3edc3e"/>
<rect x="646" y="928" width="1" height="3" fill="#3edc3e"/>
<rect x="653" y="928" width="1" height="3" fill="#3edc3e"/>
<rect x="660" y="928" width="1" height="3" fill="#3edc3e"/>
<rect x="667" y="928" width="1" height="3" fill="#3edc3e"/>
<rect x="674" y="928" width="1" height="3" fill="#3edc3e"/>
<rect x="681" y="928" width="1" height="3" fill="#3edc3e"/>
<rect x="689" y="928" width="1" height="3" fill="#3edc3e"/>
<rect x="696" y="928" width="1" height="3" fill="#3edc3e"/>
<rect x="703" y="926" width="1.3" height="7" fill="#3edc3e"/>
<rect x="710" y="928" width="1" height="3" fill="#3edc3e"/>
<rect x="717" y="928" width="1" height="3" fill="#3edc3e"/>
<rect x="724" y="928" width="1" height="3" fill="#3edc3e"/>
<rect x="731" y="928" width="1" height="3" fill="#3edc3e"/>
<rect x="739" y="928" width="1" height="3" fill="#3edc3e"/>
<rect x="746" y="928" width="1" height="3" fill="#3edc3e"/>
<rect x="753" y="928" width="1" height="3" fill="#3edc3e"/>
<rect x="760" y="928" width="1" height="3" fill="#3edc3e"/>
<rect x="767" y="928" width="1" height="3" fill="#3edc3e"/>
<rect x="774" y="926" width="1.3" height="7" fill="#3edc3e"/>
<rect x="781" y="928" width="1" height="3" fill="#3edc3e"/>
<rect x="789" y="928" width="1" height="3" fill="#3edc3e"/>
<rect x="796" y="928" width="1" height="3" fill="#3edc3e"/>
<rect x="803" y="928" width="1" height="3" fill="#3edc3e"/>
<rect x="810" y="928" width="1" height="3" fill="#3edc3e"/>
<rect x="817" y="928" width="1" height="3" fill="#3edc3e"/>
<rect x="824" y="928" width="1" height="3" fill="#3edc3e"/>
<rect x="831" y="928" width="1" height="3" fill="#3edc3e"/>
<rect x="839" y="928" width="1" height="3" fill="#3edc3e"/>
<rect x="846" y="926" width="1.3" height="7" fill="#3edc3e"/>
<rect x="853" y="928" width="1" height="3" fill="#3edc3e"/>
<rect x="860" y="928" width="1" height="3" fill="#3edc3e"/>
<rect x="867" y="928" width="1" height="3" fill="#3edc3e"/>
<rect x="874" y="928" width="1" height="3" fill="#3edc3e"/>
<rect x="882" y="928" width="1" height="3" fill="#3edc3e"/>
<rect x="889" y="928" width="1" height="3" fill="#3edc3e"/>
<rect x="896" y="928" width="1" height="3" fill="#3edc3e"/>
<rect x="903" y="928" width="1" height="3" fill="#3edc3e"/>
<rect x="910" y="928" width="1" height="3" fill="#3edc3e"/>
<rect x="917" y="926" width="1.3" height="7" fill="#3edc3e"/>
<rect x="924" y="928" width="1" height="3" fill="#3edc3e"/>
<rect x="932" y="928" width="1" height="3" fill="#3edc3e"/>
<rect x="939" y="928" width="1" height="3" fill="#3edc3e"/>
<rect x="946" y="928" width="1" height="3" fill="#3edc3e"/>
<rect x="953" y="928" width="1" height="3" fill="#3edc3e"/>
<rect x="960" y="928" width="1" height="3" fill="#3edc3e"/>
<rect x="967" y="928" width="1" height="3" fill="#3edc3e"/>
<rect x="974" y="928" width="1" height="3" fill="#3edc3e"/>
<rect x="982" y="928" width="1" height="3" fill="#3edc3e"/>
<rect x="989" y="926" width="1.3" height="7" fill="#3edc3e"/>
<rect x="996" y="928" width="1" height="3" fill="#3edc3e"/>
<rect x="1003" y="928" width="1" height="3" fill="#3edc3e"/>
<rect x="1010" y="928" width="1" height="3" fill="#3edc3e"/>
<rect x="1017" y="928" width="1" height="3" fill="#3edc3e"/>
<rect x="1024" y="928" width="1" height="3" fill="#3edc3e"/>
<rect x="1032" y="928" width="1" height="3" fill="#3edc3e"/>
<rect x="1039" y="928" width="1" height="3" fill="#3edc3e"/>
<rect x="1046" y="928" width="1" height="3" fill="#3edc3e"/>
<rect x="1053" y="928" width="1" height="3" fill="#3edc3e"/>
<rect x="1060" y="926" width="1.3" height="7" fill="#3edc3e"/>
<rect x="1067" y="928" width="1" height="3" fill="#3edc3e"/>
<rect x="1074" y="928" width="1" height="3" fill="#3edc3e"/>
<rect x="1082" y="928" width="1" height="3" fill="#3edc3e"/>
<rect x="1089" y="928" width="1" height="3" fill="#3edc3e"/>
<rect x="1096" y="928" width="1" height="3" fill="#3edc3e"/>
<rect x="1103" y="928" width="1" height="3" fill="#3edc3e"/>
<rect x="1110" y="928" width="1" height="3" fill="#3edc3e"/>
<rect x="1117" y="928" width="1" height="3" fill="#3edc3e"/>
<rect x="1124" y="928" width="1" height="3" fill="#3edc3e"/>
<rect x="1132" y="926" width="1.3" height="7" fill="#3edc3e"/>
<rect x="1139" y="928" width="1" height="3" fill="#3edc3e"/>
<rect x="1146" y="928" width="1" height="3" fill="#3edc3e"/>
<rect x="1153" y="928" width="1" height="3" fill="#3edc3e"/>
<rect x="1160" y="928" width="1" height="3" fill="#3edc3e"/>
<rect x="1167" y="928" width="1" height="3" fill="#3edc3e"/>
<rect x="1174" y="928" width="1" height="3" fill="#3edc3e"/>
<rect x="1182" y="928" width="1" height="3" fill="#3edc3e"/>
<rect x="1189" y="928" width="1" height="3" fill="#3edc3e"/>
<rect x="1196" y="928" width="1" height="3" fill="#3edc3e"/>
<rect x="1203" y="926" width="1.3" height="7" fill="#3edc3e"/>
<rect x="1210" y="928" width="1" height="3" fill="#3edc3e"/>
<rect x="1217" y="928" width="1" height="3" fill="#3edc3e"/>
<rect x="1225" y="928" width="1" height="3" fill="#3edc3e"/>
<rect x="1232" y="928" width="1" height="3" fill="#3edc3e"/>
<rect x="1239" y="928" width="1" height="3" fill="#3edc3e"/>
<rect x="1246" y="928" width="1" height="3" fill="#3edc3e"/>
<rect x="1253" y="928" width="1" height="3" fill="#3edc3e"/>
<rect x="1260" y="928" width="1" height="3" fill="#3edc3e"/>
<rect x="1267" y="928" width="1" height="3" fill="#3edc3e"/>
<rect x="1275" y="926" width="1.3" height="7" fill="#3edc3e"/>
<rect x="1282" y="928" width="1" height="3" fill="#3edc3e"/>
<rect x="1289" y="928" width="1" height="3" fill="#3edc3e"/>
<rect x="1296" y="928" width="1" height="3" fill="#3edc3e"/>
<rect x="1303" y="928" width="1" height="3" fill="#3edc3e"/>
<rect x="1310" y="928" width="1" height="3" fill="#3edc3e"/>
<rect x="1317" y="928" width="1" height="3" fill="#3edc3e"/>
<rect x="1325" y="928" width="1" height="3" fill="#3edc3e"/>
<rect x="1332" y="928" width="1" height="3" fill="#3edc3e"/>
<rect x="1339" y="928" width="1" height="3" fill="#3edc3e"/>
<rect x="1346" y="926" width="1.3" height="7" fill="#3edc3e"/>
<rect x="1353" y="928" width="1" height="3" fill="#3edc3e"/>
<rect x="1360" y="928" width="1" height="3" fill="#3edc3e"/>
<rect x="1367" y="928" width="1" height="3" fill="#3edc3e"/>
<rect x="1375" y="928" width="1" height="3" fill="#3edc3e"/>
<rect x="1382" y="928" width="1" height="3" fill="#3edc3e"/>
<rect x="1389" y="928" width="1" height="3" fill="#3edc3e"/>
<rect x="1396" y="928" width="1" height="3" fill="#3edc3e"/>
<rect x="1403" y="928" width="1" height="3" fill="#3edc3e"/>
<rect x="1410" y="928" width="1" height="3" fill="#3edc3e"/>
<rect x="1417" y="926" width="1.3" height="7" fill="#3edc3e"/>
<rect x="1425" y="928" width="1" height="3" fill="#3edc3e"/>
<rect x="1432" y="928" width="1" height="3" fill="#3edc3e"/>
<rect x="1439" y="928" width="1" height="3" fill="#3edc3e"/>
<rect x="1446" y="928" width="1" height="3" fill="#3edc3e"/>
<rect x="1453" y="928" width="1" height="3" fill="#3edc3e"/>
<rect x="1460" y="928" width="1" height="3" fill="#3edc3e"/>
<rect x="1467" y="928" width="1" height="3" fill="#3edc3e"/>
<rect x="1475" y="928" width="1" height="3" fill="#3edc3e"/>
<rect x="1482" y="928" width="1" height="3" fill="#3edc3e"/>
<rect x="1489" y="926" width="1.3" height="7" fill="#3edc3e"/>
<rect x="1496" y="928" width="1" height="3" fill="#3edc3e"/>
<rect x="1503" y="928" width="1" height="3" fill="#3edc3e"/>
<rect x="1510" y="928" width="1" height="3" fill="#3edc3e"/>
<rect x="1518" y="928" width="1" height="3" fill="#3edc3e"/>
<rect x="1525" y="928" width="1" height="3" fill="#3edc3e"/>
<rect x="1532" y="928" width="1" height="3" fill="#3edc3e"/>
<rect x="1539" y="928" width="1" height="3" fill="#3edc3e"/>
<rect x="1546" y="928" width="1" height="3" fill="#3edc3e"/>
<rect x="1553" y="928" width="1" height="3" fill="#3edc3e"/>
<rect x="1560" y="926" width="1.3" height="7" fill="#3edc3e"/>
<rect x="1568" y="928" width="1" height="3" fill="#3edc3e"/>
<rect x="1575" y="928" width="1" height="3" fill="#3edc3e"/>
<rect x="1582" y="928" width="1" height="3" fill="#3edc3e"/>
<rect x="1589" y="928" width="1" height="3" fill="#3edc3e"/>
<rect x="632" y="954" width="961" height="1" fill="#8a8a8a"/>
<rect x="632" y="926" width="2" height="52" fill="#ffc93a"/>
<rect x="634.5" y="955.5" width="56" height="21.5" fill="none" stroke="#d8ac28" stroke-width="1.2"/>
</svg>
<div style="left:632px;top:926px;width:961px;height:52px;overflow:hidden">
<span style="left:-2.50px;top:9.50px;font:16px/22px 'Liberation Sans',sans-serif;color:#3ed23e;transform:scaleX(0.9700);transform-origin:0 50%;">0 us</span>
<span style="left:128.25px;top:9.50px;font:16px/22px 'Liberation Sans',sans-serif;color:#3ed23e;transform:scaleX(0.9700);transform-origin:0 50%;">2 us</span>
<span style="left:271.17px;top:9.50px;font:16px/22px 'Liberation Sans',sans-serif;color:#3ed23e;transform:scaleX(0.9700);transform-origin:0 50%;">4 us</span>
<span style="left:414.09px;top:9.50px;font:16px/22px 'Liberation Sans',sans-serif;color:#3ed23e;transform:scaleX(0.9700);transform-origin:0 50%;">6 us</span>
<span style="left:557.01px;top:9.50px;font:16px/22px 'Liberation Sans',sans-serif;color:#3ed23e;transform:scaleX(0.9700);transform-origin:0 50%;">8 us</span>
<span style="left:695.62px;top:9.50px;font:16px/22px 'Liberation Sans',sans-serif;color:#3ed23e;transform:scaleX(0.9700);transform-origin:0 50%;">10 us</span>
<span style="left:838.54px;top:9.50px;font:16px/22px 'Liberation Sans',sans-serif;color:#3ed23e;transform:scaleX(0.9700);transform-origin:0 50%;">12 us</span>
</div>
<div style="left:635px;top:956px;width:54.5px;height:21px;overflow:hidden">
<span style="left:0.80px;top:0.80px;font:16px/22px 'Liberation Sans',sans-serif;color:#f0c030;transform:scaleX(1.0700);transform-origin:0 50%;">0.00 us</span>
</div>
<div style="left:5px;top:926px;width:324px;height:52px;background:#808080;"></div>
<div style="left:332px;top:926px;width:297px;height:52px;background:#808080;"></div>
<div style="left:53px;top:954px;width:276px;height:23px;background:#ffffff;"></div>
<div style="left:332px;top:954px;width:297px;height:23px;background:#ffffff;"></div>
<span style="left:288.95px;top:929.50px;font:16px/22px 'Liberation Sans',sans-serif;color:#fff;transform:scaleX(0.9700);transform-origin:0 50%;">Now</span>
<span style="left:531.92px;top:929.50px;font:16px/22px 'Liberation Sans',sans-serif;color:#fff;">1286.135 us</span>
<span style="left:260.49px;top:955.00px;font:16px/22px 'Liberation Sans',sans-serif;color:#000;transform:scaleX(0.9700);transform-origin:0 50%;">Cursor 1</span>
<span style="left:567.52px;top:955.00px;font:16px/22px 'Liberation Sans',sans-serif;color:#000;">0.00 us</span>
<svg style="left:13px;top:931px" width="42" height="44" viewBox="0 0 42 44">
<path d="M1.5 9.5 L4.5 2.5 L7.5 9.5 M2.7 7 H6.3" stroke="#d8d8d8" stroke-width="1.2" fill="none"/>
<path d="M7 3 L10 7 L9 2 Z" fill="#222"/><path d="M1 12.5 H10" stroke="#5a8ad8" stroke-width="1.6"/><path d="M1 12.5 l2 -1.5 v3 z" fill="#5a8ad8"/>
<rect x="12.5" y="3.5" width="10" height="9" fill="#9cc0ee" stroke="#4a7ccc"/><rect x="13" y="4" width="9" height="2" fill="#3a6cc0"/>
<path d="M14 8 H19 M14 10 H21" stroke="#fff" stroke-width="1"/><path d="M15 13 l2 2 l2 -2 z" fill="#4a7ccc"/>
<circle cx="30" cy="8.5" r="5" fill="#5fc04a" stroke="#8fe07a" stroke-width="1"/><path d="M27.3 8.5 H32.7 M30 5.8 V11.2" stroke="#fff" stroke-width="1.8"/>
<path d="M5 33 V30.5 a3.2 3.2 0 0 1 6.4 0" stroke="#c8c8c8" stroke-width="1.3" fill="none"/>
<rect x="3.5" y="33" width="10.5" height="8" fill="#f2c43c" stroke="#d8a520"/><rect x="7.5" y="35.5" width="2.5" height="3" fill="#fff3c0"/>
<path d="M17 40.5 L24.5 32.5" stroke="#5a8ae0" stroke-width="3" stroke-linecap="round"/><path d="M23 32 a3 3 0 1 1 3.5 -3" stroke="#d8d8d8" stroke-width="1.6" fill="none"/>
<circle cx="34" cy="34.5" r="5" fill="#e84a4a" stroke="#f08a8a" stroke-width="1"/><rect x="31" y="33.5" width="6" height="2.2" fill="#fff"/>
</svg>
<div style="left:5px;top:977px;width:1590px;height:1px;background:#5c5c5c;"></div>
<div style="left:5px;top:978px;width:1590px;height:3px;background:#ffffff;"></div>
<div style="left:329px;top:926px;width:1px;height:73px;background:#6c6c6c;"></div>
<div style="left:330px;top:926px;width:2px;height:73px;background:#ffffff;"></div>
<div style="left:629px;top:926px;width:1px;height:73px;background:#6c6c6c;"></div>
<div style="left:630px;top:926px;width:2px;height:73px;background:#ffffff;"></div>
<div style="left:5px;top:981px;width:324px;height:18px;background:#808080;"></div>
<div style="left:13px;top:981px;width:316px;height:17px;background:repeating-conic-gradient(#ffffff 0% 25%, #ececec 0% 50%) 0 0/2px 2px;"></div>
<div style="left:13px;top:981px;width:17px;height:17px;background:#f0f0f0;border-right:1px solid #8c8c8c;border-bottom:1px solid #8c8c8c;border-top:1px solid #fff;border-left:1px solid #fff;"></div>
<svg style="left:0;top:0" width="1618" height="1050" viewBox="0 0 1618 1050"><polygon points="23.2,985.0 23.2,993.0 18.5,989.0" fill="#9a9a9a"/></svg>
<div style="left:312px;top:981px;width:17px;height:17px;background:#f0f0f0;border-right:1px solid #8c8c8c;border-bottom:1px solid #8c8c8c;border-top:1px solid #fff;border-left:1px solid #fff;"></div>
<svg style="left:0;top:0" width="1618" height="1050" viewBox="0 0 1618 1050"><polygon points="317.8,985.0 317.8,993.0 322.5,989.0" fill="#9a9a9a"/></svg>
<div style="left:332px;top:981px;width:297px;height:17px;background:repeating-conic-gradient(#ffffff 0% 25%, #ececec 0% 50%) 0 0/2px 2px;"></div>
<div style="left:332px;top:981px;width:17px;height:17px;background:#f0f0f0;border-right:1px solid #8c8c8c;border-bottom:1px solid #8c8c8c;border-top:1px solid #fff;border-left:1px solid #fff;"></div>
<svg style="left:0;top:0" width="1618" height="1050" viewBox="0 0 1618 1050"><polygon points="342.2,985.0 342.2,993.0 337.5,989.0" fill="#9a9a9a"/></svg>
<div style="left:612px;top:981px;width:17px;height:17px;background:#f0f0f0;border-right:1px solid #8c8c8c;border-bottom:1px solid #8c8c8c;border-top:1px solid #fff;border-left:1px solid #fff;"></div>
<svg style="left:0;top:0" width="1618" height="1050" viewBox="0 0 1618 1050"><polygon points="617.8,985.0 617.8,993.0 622.5,989.0" fill="#9a9a9a"/></svg>
<div style="left:634px;top:981px;width:959px;height:17px;background:#c8c8c8;"></div>
<div style="left:632px;top:981px;width:2px;height:18px;background:#e8e8e8;"></div>
<div style="left:634px;top:981px;width:15px;height:17px;background:#f0f0f0;border-right:1px solid #8c8c8c;border-bottom:1px solid #8c8c8c;border-top:1px solid #fff;border-left:1px solid #fff;"></div>
<svg style="left:0;top:0" width="1618" height="1050" viewBox="0 0 1618 1050"><polygon points="643.2,985.0 643.2,993.0 638.5,989.0" fill="#000"/></svg>
<div style="left:1577px;top:981px;width:16px;height:17px;background:#f0f0f0;border-right:1px solid #8c8c8c;border-bottom:1px solid #8c8c8c;border-top:1px solid #fff;border-left:1px solid #fff;"></div>
<svg style="left:0;top:0" width="1618" height="1050" viewBox="0 0 1618 1050"><polygon points="1582.3,985.0 1582.3,993.0 1587.0,989.0" fill="#000"/></svg>
<div style="left:650px;top:981px;width:7px;height:17px;background:#f0f0f0;border-right:1px solid #8c8c8c;border-bottom:1px solid #8c8c8c;border-top:1px solid #fff;border-left:1px solid #fff;"></div>
<div style="left:5px;top:998px;width:1590px;height:1px;background:#a8a8a8;"></div>
<div style="left:5px;top:999px;width:1608px;height:2px;background:#ffffff;"></div>
<div style="left:1594px;top:133px;width:2px;height:866px;background:#ffffff;"></div>
<div style="left:1596px;top:133px;width:17px;height:20px;background:#808080;"></div>
<div style="left:1596px;top:153px;width:17px;height:2px;background:#ffffff;"></div>
<div style="left:1596px;top:155px;width:17px;height:768px;background:#c8c8c8;"></div>
<div style="left:1597px;top:156px;width:15px;height:15px;background:#f0f0f0;border-right:1px solid #8c8c8c;border-bottom:1px solid #8c8c8c;border-top:1px solid #fff;border-left:1px solid #fff;"></div>
<svg style="left:0;top:0" width="1618" height="1050" viewBox="0 0 1618 1050"><polygon points="1600.0,165.0 1608.0,165.0 1604.0,160.5" fill="#000"/></svg>
<div style="left:1597px;top:172px;width:15px;height:188px;background:#ececec;border-right:1px solid #8c8c8c;border-bottom:1px solid #8c8c8c;border-top:1px solid #fff;border-left:1px solid #fff;"></div>
<div style="left:1598px;top:195px;width:13px;height:23px;background:#ffffff;"></div>
<div style="left:1598px;top:229px;width:13px;height:11px;background:#ffffff;"></div>
<div style="left:1597px;top:514px;width:15px;height:5px;background:#ffffff;"></div>
<div style="left:1597px;top:907px;width:15px;height:15px;background:#f0f0f0;border-right:1px solid #8c8c8c;border-bottom:1px solid #8c8c8c;border-top:1px solid #fff;border-left:1px solid #fff;"></div>
<svg style="left:0;top:0" width="1618" height="1050" viewBox="0 0 1618 1050"><polygon points="1600.0,912.0 1608.0,912.0 1604.0,916.5" fill="#000"/></svg>
<div style="left:1596px;top:923px;width:17px;height:3px;background:#ffffff;"></div>
<div style="left:1596px;top:926px;width:17px;height:51px;background:#808080;"></div>
<div style="left:1596px;top:977px;width:17px;height:4px;background:#ffffff;"></div>
<div style="left:1596px;top:981px;width:17px;height:18px;background:#808080;"></div>
<div style="left:1613px;top:133px;width:3px;height:866px;background:#ffffff;"></div>
<div style="left:0px;top:1002px;width:1618px;height:1px;background:#a6a6a6;"></div>
<div style="left:389px;top:1004px;width:1207px;height:2px;background:#1c1c1c;"></div>
<div style="left:1px;top:1004px;width:76px;height:22px;background:#d4d4d4;border:1.3px solid #1c1c1c;border-radius:0 0 5px 5px;border-top:1.6px solid #1c1c1c;"></div>
<span style="left:24.00px;top:1006.00px;font:12.5px/17px 'Liberation Sans',sans-serif;color:#101010;transform:scaleX(0.8983);transform-origin:0 50%;">Transcript</span>
<div style="left:79px;top:1002px;width:56px;height:25px;background:#f4f4f4;border:1.3px solid #1c1c1c;border-top:none;border-radius:0 0 5px 5px;"></div>
<span style="left:102.00px;top:1005.00px;font:12.5px/17px 'Liberation Sans',sans-serif;color:#101010;transform:scaleX(0.8575);transform-origin:0 50%;">Wave</span>
<div style="left:137px;top:1004px;width:65px;height:22px;background:#d4d4d4;border:1.3px solid #1c1c1c;border-radius:0 0 5px 5px;border-top:1.6px solid #1c1c1c;"></div>
<span style="left:160.00px;top:1006.00px;font:12.5px/17px 'Liberation Sans',sans-serif;color:#101010;transform:scaleX(0.8967);transform-origin:0 50%;">Objects</span>
<div style="left:203px;top:1004px;width:77px;height:22px;background:#d4d4d4;border:1.3px solid #1c1c1c;border-radius:0 0 5px 5px;border-top:1.6px solid #1c1c1c;"></div>
<span style="left:226.00px;top:1006.00px;font:12.5px/17px 'Liberation Sans',sans-serif;color:#101010;transform:scaleX(0.8397);transform-origin:0 50%;">Processes</span>
<div style="left:281px;top:1004px;width:62px;height:22px;background:#d4d4d4;border:1.3px solid #1c1c1c;border-radius:0 0 5px 5px;border-top:1.6px solid #1c1c1c;"></div>
<span style="left:305.50px;top:1006.00px;font:12.5px/17px 'Liberation Sans',sans-serif;color:#101010;transform:scaleX(0.8637);transform-origin:0 50%;">Library</span>
<div style="left:344px;top:1004px;width:45px;height:22px;background:#d4d4d4;border:1.3px solid #1c1c1c;border-radius:0 0 5px 5px;border-top:1.6px solid #1c1c1c;"></div>
<span style="left:368.30px;top:1006.00px;font:12.5px/17px 'Liberation Sans',sans-serif;color:#101010;transform:scaleX(0.7871);transform-origin:0 50%;">sim</span>
<svg style="left:0;top:1004px" width="392" height="22" viewBox="0 1004 392 22">
<!-- transcript -->
<path d="M7 1023 V1010 Q7 1007 10 1007 H15 Q18 1007 18 1010 V1023 H15.5 V1015.5 H9.5 V1023 Z" fill="#9a9a9a" stroke="#4a4a4a" stroke-width="0.8"/>
<rect x="9.5" y="1009" width="6" height="6.5" fill="#f4f4f4"/>
<!-- wave -->
<rect x="83.5" y="1007.5" width="14" height="13" fill="#101010" stroke="#e8e8e8"/><path d="M83 1021.5 H98.5 V1007" stroke="#444" fill="none"/>
<path d="M85 1016 H88 V1012 H91 V1018 H94 V1013 H97" stroke="#30e080" stroke-width="1.2" fill="none"/><rect x="91" y="1017" width="6" height="2" fill="#3838b0"/>
<!-- objects -->
<path d="M149 1006 L156 1012 L149 1019 L142 1012 Z" fill="#3a58e8" stroke="#2038b0" stroke-width="0.8"/>
<rect x="148" y="1012" width="9.5" height="9" fill="#2fa060" stroke="#1a7040" stroke-width="0.8"/>
<circle cx="146.5" cy="1018" r="4" fill="#58c8f0" stroke="#2890c8" stroke-width="0.8"/>
<!-- processes -->
<circle cx="215" cy="1014.5" r="6.5" fill="none" stroke="#5a86b8" stroke-width="3.2" stroke-dasharray="2.6 2.5"/>
<circle cx="215" cy="1014.5" r="4.8" fill="#8ab0d8" stroke="#4a78a8" stroke-width="1"/><circle cx="215" cy="1014.5" r="2" fill="#e8f0f8" stroke="#4a78a8" stroke-width="0.8"/>
<!-- library -->
<rect x="288" y="1009" width="2.6" height="12" fill="#c03030"/><rect x="290.8" y="1006.5" width="2.6" height="14.5" fill="#2a8a3a"/><rect x="293.6" y="1008.5" width="2.6" height="12.500" fill="#3a50c8"/><rect x="296.4" y="1010.500" width="2.600" height="10.5" fill="#b8b030"/>
<path d="M286 1022 L289 1019 M300 1022 L297 1019" stroke="#111" stroke-width="1.4"/><path d="M287.500 1021.500 H299" stroke="#111" stroke-width="1"/>
<!-- sim -->
<path d="M354 1006.500 H363 L364.500 1009 V1017 H353 V1008 Z" fill="#fff" stroke="#222" stroke-width="1"/>
<path d="M355.500 1009.5 H362.5 M355.500 1011.500 H362.500 M355.500 1013.500 H362.500 M355.500 1015.500 H360" stroke="#333" stroke-width="0.9" stroke-dasharray="1.5 0.8"/>
<path d="M352.500 1018 L355 1012 M363 1018.5 L360 1014" stroke="#111" stroke-width="1.2"/>
<circle cx="352.500" cy="1018.500" r="2.600" fill="#c02038" stroke="#600010" stroke-width="0.8"/><circle cx="363" cy="1019" r="2.300" fill="#c02038" stroke="#600010" stroke-width="0.8"/>
</svg>
<div style="left:2px;top:1029px;width:197px;height:20px;border-top:1px solid #a0a0a0;border-left:1px solid #a0a0a0;border-right:1px solid #fff;border-bottom:1px solid #fff;"></div>
<div style="left:203px;top:1029px;width:1056px;height:20px;border-top:1px solid #a0a0a0;border-left:1px solid #a0a0a0;border-right:1px solid #fff;border-bottom:1px solid #fff;"></div>
<div style="left:1264px;top:1029px;width:168px;height:20px;border-top:1px solid #a0a0a0;border-left:1px solid #a0a0a0;border-right:1px solid #fff;border-bottom:1px solid #fff;"></div>
<div style="left:1435px;top:1029px;width:165px;height:20px;border-top:1px solid #a0a0a0;border-left:1px solid #a0a0a0;border-right:1px solid #fff;border-bottom:1px solid #fff;"></div>
<span style="left:5.00px;top:1030.80px;font:12.5px/17px 'Liberation Sans',sans-serif;color:#000;transform:scaleX(0.8812);transform-origin:0 50%;">Now: 1,286,135 ns   Delta: 3</span>
<span style="left:207.00px;top:1030.80px;font:12.5px/17px 'Liberation Sans',sans-serif;color:#000;transform:scaleX(0.8069);transform-origin:0 50%;">sim:/tb_BMTSCAN_Single_SRAM_MARCH_C</span>
<span style="left:1271.50px;top:1030.80px;font:12.5px/17px 'Liberation Sans',sans-serif;color:#000;transform:scaleX(0.8655);transform-origin:0 50%;">0 ns to 13459 ns</span>
<span style="left:1441.00px;top:1030.80px;font:12.5px/17px 'Liberation Sans',sans-serif;color:#000;transform:scaleX(0.8812);transform-origin:0 50%;">Now: 1,286,135 ns   Delta: 3</span>
<div style="left:1596px;top:1019px;width:22px;height:8px;background:#c4c4c4;"></div>
<div style="left:1597px;top:1004px;width:10px;height:15px;background:#f0f0f0;border-top:1px solid #fff;border-left:1px solid #fff;border-right:1px solid #8c8c8c;border-bottom:1px solid #8c8c8c;"></div>
<div style="left:1607.5px;top:1004px;width:10.5px;height:15px;background:#f0f0f0;border-top:1px solid #fff;border-left:1px solid #fff;border-right:1px solid #8c8c8c;border-bottom:1px solid #8c8c8c;"></div>
<svg style="left:1596px;top:1004px" width="22" height="46" viewBox="1596 1004 22 46">
<path d="M1602 1007.500 L1599 1011.500 L1602 1015.500 M1605 1007.500 L1602 1011.500 L1605 1015.500" stroke="#333" stroke-width="1.100" fill="none" stroke-dasharray="1.2 0.6"/>
<path d="M1610 1007.500 L1613 1011.500 L1610 1015.500 M1613 1007.500 L1616 1011.500 L1613 1015.500" stroke="#333" stroke-width="1.100" fill="none" stroke-dasharray="1.2 0.6"/>
<path d="M1616.500 1037 L1604 1049.500 M1616.500 1041 L1608 1049.500 M1616.500 1045 L1612 1049.500" stroke="#9a9a9a" stroke-width="1"/>
</svg>
</body></html>
